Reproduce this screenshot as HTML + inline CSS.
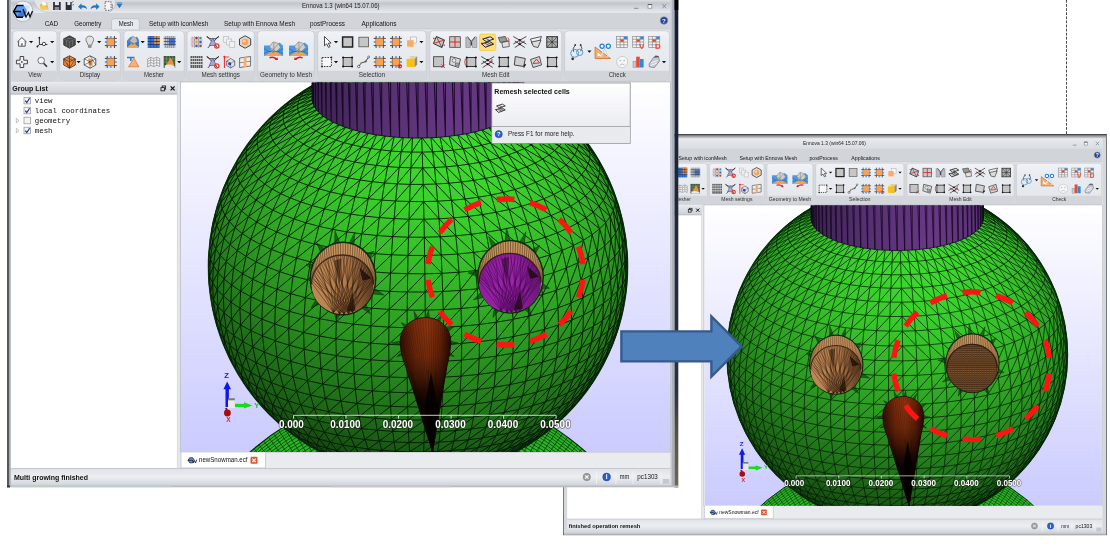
<!DOCTYPE html><html><head><meta charset="utf-8"><title>Ennova remesh</title><style>html,body{margin:0;padding:0;background:#fff}body{width:1110px;height:546px;overflow:hidden;position:relative;font-family:"Liberation Sans",sans-serif}svg{display:block;position:absolute;left:0;top:0;will-change:transform;font-family:"Liberation Sans",sans-serif}</style></head><body><svg width="1110" height="546" viewBox="0 0 1110 546"><defs><linearGradient id="gbg" x1="0" y1="0" x2="0" y2="1"><stop offset="0" stop-color="#ffffff"/><stop offset="1" stop-color="#cbcbff"/></linearGradient><linearGradient id="gsph" gradientUnits="userSpaceOnUse" x1="372.1" y1="471.5" x2="463.9" y2="61.5"><stop offset="0.0" stop-color="rgb(30,105,23)"/><stop offset="0.1" stop-color="rgb(35,122,26)"/><stop offset="0.2" stop-color="rgb(39,138,30)"/><stop offset="0.3" stop-color="rgb(44,155,33)"/><stop offset="0.4" stop-color="rgb(49,171,37)"/><stop offset="0.5" stop-color="rgb(54,188,40)"/><stop offset="0.6" stop-color="rgb(58,205,44)"/><stop offset="0.7" stop-color="rgb(63,221,48)"/><stop offset="0.8" stop-color="rgb(68,238,51)"/><stop offset="0.9" stop-color="rgb(73,254,55)"/><stop offset="1.0" stop-color="rgb(73,255,55)"/></linearGradient><radialGradient id="gsph2" gradientUnits="userSpaceOnUse" cx="418.0" cy="266.5" r="210.0"><stop offset="0" stop-color="#000" stop-opacity="0.000"/><stop offset="0.3" stop-color="#000" stop-opacity="0.020"/><stop offset="0.5" stop-color="#000" stop-opacity="0.059"/><stop offset="0.7" stop-color="#000" stop-opacity="0.126"/><stop offset="0.8" stop-color="#000" stop-opacity="0.176"/><stop offset="0.9" stop-color="#000" stop-opacity="0.248"/><stop offset="0.95" stop-color="#000" stop-opacity="0.303"/><stop offset="0.98" stop-color="#000" stop-opacity="0.352"/><stop offset="1" stop-color="#000" stop-opacity="0.440"/></radialGradient><linearGradient id="gcyl" x1="0" y1="0" x2="1" y2="0"><stop offset="0" stop-color="#3a2150"/><stop offset="0.3" stop-color="#553070"/><stop offset="0.7" stop-color="#683885"/><stop offset="1" stop-color="#5a3274"/></linearGradient><linearGradient id="gband" gradientUnits="userSpaceOnUse" x1="0" y1="0" x2="0" y2="487"><stop offset="0" stop-color="#141c2e"/><stop offset="0.8" stop-color="#2a3040"/><stop offset="0.9" stop-color="#5a5448"/><stop offset="1" stop-color="#6e6656"/></linearGradient><linearGradient id="gtitle" x1="0" y1="0" x2="0" y2="1"><stop offset="0" stop-color="#dfe2e6"/><stop offset="0.28" stop-color="#c3c6cb"/><stop offset="0.6" stop-color="#d4d7db"/><stop offset="1" stop-color="#e8ebef"/></linearGradient><linearGradient id="gtitle2" x1="0" y1="0" x2="0" y2="1"><stop offset="0" stop-color="#e9ebee"/><stop offset="1" stop-color="#d9dce0"/></linearGradient><linearGradient id="gtop2" x1="0" y1="0" x2="0" y2="1"><stop offset="0" stop-color="#2a2a2a"/><stop offset="0.35" stop-color="#8a8c90"/><stop offset="1" stop-color="#d8dade"/></linearGradient><linearGradient id="gtip" x1="0" y1="0" x2="0" y2="1"><stop offset="0" stop-color="#ffffff"/><stop offset="1" stop-color="#e4e5ec"/></linearGradient><linearGradient id="ggrp" x1="0" y1="0" x2="0" y2="1"><stop offset="0" stop-color="#f1f3f7"/><stop offset="0.25" stop-color="#e9ecf1"/><stop offset="1" stop-color="#e3e6eb"/></linearGradient><linearGradient id="ghdr" x1="0" y1="0" x2="0" y2="1"><stop offset="0" stop-color="#e6e9ee"/><stop offset="1" stop-color="#cdd1d7"/></linearGradient><linearGradient id="gstat" x1="0" y1="0" x2="0" y2="1"><stop offset="0" stop-color="#dfe2e7"/><stop offset="0.5" stop-color="#eceef2"/><stop offset="1" stop-color="#d0d3d9"/></linearGradient><linearGradient id="gnose" x1="0" y1="0" x2="1" y2="0"><stop offset="0" stop-color="#3a1204"/><stop offset="0.3" stop-color="#7a2c0c"/><stop offset="0.55" stop-color="#8a3510"/><stop offset="0.8" stop-color="#6a2408"/><stop offset="1" stop-color="#2a0c02"/></linearGradient><linearGradient id="gnose2" gradientUnits="userSpaceOnUse" x1="0" y1="325" x2="0" y2="452"><stop offset="0" stop-color="#000" stop-opacity="0"/><stop offset="0.25" stop-color="#000" stop-opacity="0.15"/><stop offset="0.4" stop-color="#000" stop-opacity="0.42"/><stop offset="0.52" stop-color="#000" stop-opacity="0.72"/><stop offset="0.62" stop-color="#000" stop-opacity="0.9"/><stop offset="1" stop-color="#000" stop-opacity="0.97"/></linearGradient><linearGradient id="geye" x1="0" y1="0" x2="1" y2="0"><stop offset="0" stop-color="#c08a58"/><stop offset="0.55" stop-color="#b07a4a"/><stop offset="1" stop-color="#5a381e"/></linearGradient><linearGradient id="geyep" x1="0" y1="0" x2="1" y2="0"><stop offset="0" stop-color="#8f1e9c"/><stop offset="0.5" stop-color="#a022b0"/><stop offset="1" stop-color="#6a1676"/></linearGradient><clipPath id="cvp"><rect x="181" y="82.5" width="489" height="369.5"/></clipPath><clipPath id="csph"><circle cx="418.0" cy="266.5" r="210.0"/></clipPath><path id="mesh" d="M416.1 58.1L416.7 61.1L417.4 65.7L418 71.8M411.4 58.2L413.6 61.2L415.8 65.7L418 71.8M406.7 58.5L410.4 61.4L414.2 65.8L418 71.8M397 57.8L402.1 59L407.3 61.7L412.6 66L418 71.8M391.1 58.6L397.6 59.5L404.3 62.1L411.1 66.2L418 71.8M377.7 60.4L385.4 59.6L393.3 60.3L401.4 62.6L409.7 66.4L418 71.8M371 61.8L379.9 60.7L389.2 61.2L398.7 63.2L408.3 66.7L418 71.8M364.6 63.5L374.8 62L385.3 62.2L396.1 63.8L407 67.1L418 71.8M358.6 65.3L369.9 63.5L381.6 63.3L393.6 64.6L405.8 67.4L418 71.8M341.2 71.1L353.1 67.4L365.5 65.2L378.2 64.5L391.3 65.4L404.6 67.9L418 71.8M335.3 73.7L348.1 69.6L361.4 67L375.2 65.9L389.3 66.3L403.6 68.3L418 71.8M317 82.4L329.9 76.5L343.6 71.9L357.8 68.9L372.4 67.3L387.4 67.3L402.7 68.8L418 71.8M298.8 93.6L311.6 85.8L325.3 79.4L339.6 74.4L354.6 70.9L370 68.9L385.8 68.3L401.8 69.3L418 71.8M281.3 107.1L293.7 97.6L307.1 89.4L321.3 82.5L336.3 77L351.9 73L368 70.5L384.4 69.4L401.2 69.9L418 71.8M265 122.7L276.8 111.6L289.6 101.7L303.4 93.1L318.1 85.7L333.6 79.8L349.7 75.2L366.3 72.1L383.3 70.5L400.6 70.4L418 71.8M240.8 153.8L250.4 140.3L261.3 127.8L273.3 116.3L286.5 106L300.6 96.9L315.7 89L331.5 82.6L348 77.5L365 73.8L382.5 71.7L400.2 71L418 71.8M222.6 189.6L229.5 174.3L237.9 159.7L247.7 145.9L258.7 133L271 121.1L284.3 110.3L298.7 100.7L314 92.4L330.1 85.4L346.9 79.8L364.2 75.6L381.9 72.8L399.9 71.6L418 71.8M211.5 228.6L215.4 212.1L220.9 196L227.9 180.5L236.4 165.6L246.2 151.4L257.4 138.2L269.7 125.9L283.2 114.7L297.7 104.6L313.1 95.8L329.4 88.3L346.3 82.1L363.7 77.4L381.6 74L399.7 72.2L418 71.8M208.9 286.2L208.1 269.2L208.9 252.3L211.3 235.4L215.3 218.8L220.8 202.5L227.8 186.7L236.2 171.5L246.1 157.1L257.2 143.4L269.6 130.8L283.1 119.1L297.6 108.6L313.1 99.3L329.3 91.2L346.2 84.5L363.7 79.1L381.6 75.2L399.7 72.8L418 71.8M216.7 326.2L212.7 309.8L210.4 293L209.6 276.1L210.4 259.1L212.7 242.1L216.7 225.4L222.1 208.9L229.1 192.9L237.5 177.4L247.3 162.7L258.3 148.7L270.6 135.6L284 123.5L298.4 112.5L313.8 102.7L329.9 94.1L346.7 86.8L364.1 80.9L381.8 76.4L399.8 73.4L418 71.8M231.8 363.6L225 348.5L219.6 332.7L215.7 316.4L213.4 299.8L212.6 282.9L213.4 265.8L215.7 248.8L219.6 231.9L225 215.3L231.8 199L240.1 183.3L249.7 168.2L260.6 153.9L272.8 140.4L286 127.9L300.2 116.4L315.3 106.1L331.2 96.9L347.7 89.1L364.8 82.7L382.3 77.6L400.1 74L418 71.8M253.5 397L244.1 383.8L236 369.6L229.3 354.7L224 339.1L220.2 323L217.9 306.4L217.2 289.5L217.9 272.4L220.2 255.3L224 238.3L229.3 221.5L236 205.1L244.1 189.1L253.5 173.7L264.2 159L276 145.1L288.9 132.1L302.8 120.2L317.6 109.4L333.1 99.8L349.3 91.4L366 84.4L383.1 78.7L400.5 74.5L418 71.8M268.8 414.2L258.5 402.3L249.4 389.4L241.5 375.5L235 360.8L229.9 345.4L226.2 329.3L224 312.8L223.3 296L224 278.9L226.2 261.7L229.9 244.6L235 227.6L241.5 210.9L249.4 194.7L258.5 179L268.8 163.9L280.3 149.7L292.8 136.3L306.3 123.9L320.6 112.6L335.7 102.5L351.4 93.6L367.6 86.1L384.2 79.9L401 75.1L418 71.8M285.7 429.4L274.7 419L264.7 407.4L256 394.8L248.4 381.2L242.2 366.7L237.3 351.4L233.7 335.5L231.6 319L230.9 302.2L231.6 285.1L233.7 267.9L237.3 250.6L242.2 233.5L248.4 216.6L256 200.1L264.7 184.1L274.7 168.7L285.7 154.1L297.7 140.3L310.7 127.5L324.4 115.7L338.9 105.1L354 95.7L369.6 87.7L385.5 81L401.7 75.6L418 71.8M303.5 442.5L292.1 433.7L281.6 423.6L272.1 412.3L263.8 400L256.6 386.6L250.7 372.3L246 357.2L242.6 341.4L240.6 325L239.9 308.2L240.6 291.1L242.6 273.7L246 256.4L250.7 239.1L256.6 222L263.8 205.2L272.1 189L281.6 173.3L292.1 158.3L303.5 144.1L315.9 130.9L329 118.7L342.7 107.7L357.1 97.8L371.9 89.2L387.1 82L402.5 76.2L418 71.8M321.8 453.2L310.2 446.1L299.4 437.7L289.5 427.9L280.6 417L272.8 404.9L266 391.7L260.4 377.6L256 362.6L252.8 346.9L250.9 330.6L250.3 313.8L250.9 296.7L252.8 279.3L256 261.8L260.4 244.4L266 227.1L272.8 210.1L280.6 193.6L289.5 177.6L299.4 162.3L310.2 147.8L321.8 134.2L334.1 121.5L347.1 110L360.6 99.7L374.6 90.7L388.9 83L403.4 76.7L418 71.8M328.5 456.2L317.7 449.5L307.6 441.4L298.5 432L290.2 421.3L282.8 409.4L276.6 396.5L271.4 382.6L267.3 367.7L264.3 352.1L262.5 335.9L261.9 319.1L262.5 302L264.3 284.5L267.3 267L271.4 249.4L276.6 231.9L282.8 214.7L290.2 197.9L298.5 181.7L307.6 166L317.7 151.2L328.5 137.2L340 124.2L352 112.3L364.6 101.5L377.6 92L390.9 83.9L404.4 77.1L418 71.8M346.4 463.9L335.9 459L325.9 452.6L316.7 444.9L308.3 435.7L300.7 425.3L294 413.7L288.2 400.9L283.4 387.2L279.7 372.5L277 357L275.3 340.8L274.8 324L275.3 306.8L277 289.3L279.7 271.7L283.4 254L288.2 236.4L294 219L300.7 201.9L308.3 185.4L316.7 169.5L325.9 154.3L335.9 140L346.4 126.6L357.5 114.3L369 103.2L380.9 93.3L393.1 84.7L405.5 77.5L418 71.8M353.4 466.1L343.8 461.6L334.9 455.5L326.6 448L319 439.1L312.1 429L306 417.5L300.8 405L296.5 391.3L293.1 376.8L290.7 361.4L289.2 345.2L288.7 328.5L289.2 311.3L290.7 293.7L293.1 276L296.5 258.2L300.8 240.4L306 222.8L312.1 205.6L319 188.8L326.6 172.7L334.9 157.2L343.8 142.6L353.4 128.9L363.4 116.2L373.8 104.7L384.5 94.5L395.5 85.5L406.7 77.9L418 71.8M360.8 468.1L352.4 463.8L344.5 458.1L337.1 450.8L330.4 442.2L324.3 432.2L318.9 421L314.3 408.6L310.5 395.1L307.5 380.6L305.4 365.3L304.1 349.2L303.6 332.5L304.1 315.3L305.4 297.7L307.5 279.8L310.5 261.9L314.3 244L318.9 226.3L324.3 208.9L330.4 191.9L337.1 175.5L344.5 159.8L352.4 144.8L360.8 130.9L369.7 117.9L378.9 106.1L388.4 95.5L398.1 86.2L408 78.3L418 71.8M376.3 472.3L368.7 469.9L361.5 465.8L354.6 460.3L348.3 453.3L342.5 444.9L337.2 435.1L332.6 424L328.6 411.7L325.4 398.4L322.8 384L320.9 368.7L319.8 352.7L319.4 336L319.8 318.7L320.9 301.1L322.8 283.2L325.4 265.2L328.6 247.2L332.6 229.3L337.2 211.7L342.5 194.6L348.3 177.9L354.6 162L361.5 146.8L368.7 132.6L376.3 119.4L384.3 107.3L392.5 96.4L400.9 86.8L409.4 78.6L418 71.8M383.3 473.6L377 471.3L370.9 467.5L365.3 462.2L360 455.4L355.1 447.1L350.8 437.5L346.9 426.6L343.6 414.4L340.9 401.1L338.7 386.8L337.2 371.6L336.3 355.6L335.9 338.9L336.3 321.7L337.2 304L338.7 286.1L340.9 268L343.6 249.8L346.9 231.9L350.8 214.1L355.1 196.8L360 180L365.3 163.9L370.9 148.5L377 134.1L383.3 120.6L389.9 108.3L396.8 97.2L403.8 87.3L410.8 78.8L418 71.8M390.6 474.6L385.6 472.5L380.8 468.9L376.3 463.7L372.1 457.1L368.3 449L364.8 439.5L361.8 428.6L359.2 416.6L357 403.4L355.3 389.2L354.1 374L353.4 358L353.1 341.3L353.4 324.1L354.1 306.4L355.3 288.4L357 270.2L359.2 252L361.8 233.9L364.8 216.1L368.3 198.7L372.1 181.7L376.3 165.4L380.8 149.9L385.6 135.3L390.6 121.7L395.8 109.1L401.2 97.8L406.7 87.7L412.3 79.1L418 71.8M398 475.4L394.4 473.4L390.9 470L387.6 464.9L384.6 458.4L381.8 450.4L379.3 441L377.1 430.2L375.2 418.3L373.6 405.1L372.4 390.9L371.5 375.8L370.9 359.8L370.8 343.2L370.9 325.9L371.5 308.2L372.4 290.1L373.6 271.9L375.2 253.7L377.1 235.5L379.3 217.6L381.8 200.1L384.6 183L387.6 166.6L390.9 151L394.4 136.2L398 122.4L401.8 109.7L405.8 98.3L409.8 88.1L413.9 79.2L418 71.8M405.6 475.9L403.4 474.1L401.2 470.7L399.2 465.7L397.3 459.3L395.6 451.3L394.1 442L392.7 431.3L391.5 419.4L390.5 406.3L389.8 392.1L389.2 377L388.9 361.1L388.8 344.4L388.9 327.1L389.2 309.4L389.8 291.4L390.5 273.1L391.5 254.8L392.7 236.6L394.1 218.6L395.6 201L397.3 183.9L399.2 167.4L401.2 151.7L403.4 136.8L405.6 123L408 110.2L410.4 98.6L412.9 88.3L415.5 79.3L418 71.8M413.4 476.2L412.5 474.4L411.7 471.1L410.9 466.2L410.2 459.7L409.6 451.8L409 442.5L408.5 431.9L408 420L407.7 406.9L407.4 392.8L407.2 377.7L407.1 361.7L407 345.1L407.1 327.8L407.2 310.1L407.4 292L407.7 273.7L408 255.4L408.5 237.2L409 219.2L409.6 201.5L410.2 184.4L410.9 167.8L411.7 152.1L412.5 137.2L413.4 123.2L414.2 110.4L415.2 98.8L416.1 88.4L417 79.4L418 71.8M421.1 476.2L421.7 474.4L422.2 471.1L422.7 466.2L423.2 459.8L423.6 451.9L424 442.6L424.3 431.9L424.6 420L424.9 407L425.1 392.8L425.2 377.7L425.3 361.8L425.3 345.1L425.3 327.9L425.2 310.1L425.1 292L424.9 273.8L424.6 255.5L424.3 237.2L424 219.2L423.6 201.6L423.2 184.4L422.7 167.9L422.2 152.1L421.7 137.2L421.1 123.3L420.5 110.4L419.9 98.8L419.3 88.4L418.6 79.4L418 71.8M428.8 476L430.8 474.2L432.7 470.8L434.5 465.8L436.1 459.4L437.6 451.5L439 442.1L440.2 431.5L441.2 419.6L442 406.5L442.7 392.3L443.2 377.2L443.5 361.3L443.6 344.6L443.5 327.3L443.2 309.6L442.7 291.5L442 273.3L441.2 255L440.2 236.8L439 218.8L437.6 201.2L436.1 184L434.5 167.5L432.7 151.8L430.8 136.9L428.8 123L426.8 110.2L424.6 98.6L422.4 88.3L420.2 79.3L418 71.8M436.5 475.5L439.8 473.6L443 470.1L446.1 465.1L448.9 458.6L451.4 450.6L453.8 441.2L455.8 430.5L457.6 418.5L459 405.4L460.2 391.2L461 376.1L461.5 360.1L461.7 343.4L461.5 326.2L461 308.5L460.2 290.4L459 272.2L457.6 254L455.8 235.8L453.8 217.9L451.4 200.3L448.9 183.2L446.1 166.8L443 151.1L439.8 136.4L436.5 122.6L432.9 109.9L429.3 98.3L425.6 88.1L421.8 79.2L418 71.8M443.9 474.8L448.7 472.7L453.2 469.1L457.5 464L461.4 457.4L465 449.3L468.3 439.8L471.2 429L473.6 417L475.7 403.8L477.3 389.6L478.5 374.4L479.2 358.4L479.4 341.7L479.2 324.5L478.5 306.8L477.3 288.8L475.7 270.6L473.6 252.4L471.2 234.3L468.3 216.4L465 199L461.4 182L457.5 165.7L453.2 150.2L448.7 135.5L443.9 121.8L439 109.3L433.9 97.9L428.7 87.8L423.4 79.1L418 71.8M451.2 473.8L457.3 471.6L463.1 467.8L468.6 462.5L473.6 455.8L478.3 447.5L482.4 437.9L486.1 427L489.3 414.9L491.9 401.6L494 387.3L495.5 372.1L496.4 356.1L496.7 339.4L496.4 322.2L495.5 304.5L494 286.6L491.9 268.4L489.3 250.3L486.1 232.3L482.4 214.6L478.3 197.2L473.6 180.4L468.6 164.2L463.1 148.8L457.3 134.3L451.2 120.9L444.9 108.5L438.4 97.3L431.7 87.4L424.9 78.9L418 71.8M458.3 472.6L465.7 470.2L472.7 466.2L479.3 460.7L485.4 453.7L491 445.4L496.1 435.6L500.6 424.6L504.4 412.3L507.6 399L510.1 384.6L511.9 369.3L513 353.3L513.3 336.6L513 319.4L511.9 301.7L510.1 283.8L507.6 265.8L504.4 247.7L500.6 229.8L496.1 212.2L491 195L485.4 178.4L479.3 162.4L472.7 147.2L465.7 132.9L458.3 119.7L450.6 107.5L442.7 96.6L434.6 86.9L426.3 78.6L418 71.8M465 471.2L473.6 468.5L481.8 464.3L489.5 458.5L496.7 451.4L503.2 442.8L509.2 432.8L514.4 421.6L518.9 409.3L522.6 395.8L525.5 381.3L527.6 366L528.9 349.9L529.3 333.2L528.9 316L527.6 298.4L525.5 280.5L522.6 262.6L518.9 244.7L514.4 226.9L509.2 209.5L503.2 192.4L496.7 176L489.5 160.2L481.8 145.3L473.6 131.2L465 118.2L456.1 106.4L446.8 95.7L437.3 86.3L427.7 78.3L418 71.8M481.2 466.5L490.5 462L499.2 456L507.4 448.6L514.8 439.8L521.5 429.6L527.4 418.3L532.5 405.7L536.8 392.1L540.1 377.6L542.5 362.2L543.9 346.1L544.4 329.3L543.9 312.1L542.5 294.6L540.1 276.8L536.8 258.9L532.5 241.2L527.4 223.6L521.5 206.3L514.8 189.5L507.4 173.2L499.2 157.7L490.5 143L481.2 129.3L471.4 116.6L461.2 105L450.7 94.7L439.9 85.7L429 78L418 71.8M488.3 464.4L498.6 459.5L508.3 453.2L517.4 445.5L525.6 436.4L533.1 426.1L539.7 414.5L545.4 401.8L550 388L553.7 373.4L556.4 357.9L558 341.7L558.5 325L558 307.8L556.4 290.3L553.7 272.6L550 254.8L545.4 237.2L539.7 219.8L533.1 202.7L525.6 186.1L517.4 170.2L508.3 154.9L498.6 140.5L488.3 127.1L477.4 114.7L466.1 103.5L454.4 93.6L442.4 84.9L430.2 77.6L418 71.8M494.8 461.9L506.1 456.8L516.7 450.1L526.6 442.1L535.7 432.8L543.8 422.1L551 410.3L557.2 397.4L562.3 383.5L566.4 368.7L569.3 353.1L571 336.9L571.6 320.2L571 303L569.3 285.5L566.4 267.9L562.3 250.3L557.2 232.8L551 215.6L543.8 198.8L535.7 182.4L526.6 166.8L516.7 151.8L506.1 137.8L494.8 124.7L482.9 112.7L470.5 101.9L457.8 92.3L444.7 84.1L431.4 77.2L418 71.8M512.9 453.8L524.4 446.8L535 438.4L544.8 428.8L553.6 417.9L561.3 405.8L568 392.7L573.5 378.6L577.8 363.7L581 348L582.9 331.7L583.5 314.9L582.9 297.8L581 280.4L577.8 262.9L573.5 245.4L568 228.1L561.3 211.1L553.6 194.5L544.8 178.4L535 163.1L524.4 148.5L512.9 134.8L500.7 122.1L487.9 110.5L474.6 100.1L460.8 91L446.7 83.2L432.4 76.8L418 71.8M531.2 443.2L542.5 434.5L552.9 424.5L562.3 413.3L570.5 401L577.6 387.6L583.5 373.4L588.1 358.3L591.4 342.5L593.5 326.2L594.1 309.3L593.5 292.2L591.4 274.9L588.1 257.5L583.5 240.2L577.6 223L570.5 206.3L562.3 189.9L552.9 174.2L542.5 159.1L531.2 144.9L519 131.6L506.1 119.3L492.4 108.1L478.2 98.2L463.6 89.5L448.6 82.2L433.3 76.3L418 71.8M537.2 439.4L549.1 430.3L560 419.9L569.9 408.4L578.6 395.8L586 382.3L592.2 367.8L597.1 352.6L600.6 336.7L602.7 320.3L603.4 303.4L602.7 286.3L600.6 269.1L597.1 251.8L592.2 234.6L586 217.7L578.6 201.1L569.9 185.1L560 169.6L549.1 154.9L537.2 141.1L524.4 128.2L510.7 116.3L496.4 105.6L481.4 96.2L466 88L450.2 81.2L434.2 75.8L418 71.8M554.7 425.9L566.1 415.2L576.3 403.4L585.4 390.5L593.2 376.6L599.6 362L604.7 346.6L608.4 330.6L610.6 314.1L611.3 297.2L610.6 280.2L608.4 263L604.7 245.8L599.6 228.8L593.2 212.1L585.4 195.8L576.3 180L566.1 164.9L554.7 150.6L542.3 137.1L528.9 124.6L514.7 113.2L499.7 103L484.1 94L468 86.4L451.6 80.1L434.8 75.2L418 71.8M581.6 398.1L591 384.9L599 370.8L605.7 355.9L610.9 340.4L614.7 324.3L617 307.7L617.7 290.8L617 273.7L614.7 256.6L610.9 239.6L605.7 222.7L599 206.2L591 190.2L581.6 174.7L571 160L559.2 146L546.4 133L532.6 120.9L517.9 110L502.4 100.3L486.3 91.8L469.7 84.7L452.7 79L435.4 74.7L418 71.8M595.2 379.2L603.4 364.8L610.3 349.7L615.6 334L619.5 317.7L621.8 301.1L622.6 284.2L621.8 267.2L619.5 250.1L615.6 233.2L610.3 216.5L603.4 200.3L595.2 184.5L585.6 169.3L574.7 154.9L562.7 141.3L549.5 128.7L535.4 117.2L520.3 106.7L504.5 97.5L488 89.6L471 83L453.5 77.8L435.8 74.1L418 71.8M613.4 343.4L618.9 327.5L622.8 311.1L625.2 294.4L626 277.4L625.2 260.4L622.8 243.5L618.9 226.7L613.4 210.2L606.5 194.1L598.1 178.6L588.3 163.8L577.3 149.7L565 136.6L551.7 124.4L537.3 113.3L522 103.4L505.9 94.7L489.1 87.3L471.8 81.3L454.1 76.7L436.1 73.5L418 71.8M626.9 287.6L627.7 270.6L626.9 253.6L624.5 236.7L620.6 220.1L615.1 203.8L608.1 187.9L599.6 172.7L589.8 158.2L578.6 144.5L566.3 131.7L552.8 120L538.3 109.4L522.9 99.9L506.6 91.8L489.7 84.9L472.3 79.5L454.4 75.5L436.3 72.9L418 71.8M627.1 246.8L624.7 230L620.7 213.5L615.2 197.3L608.2 181.7L599.8 166.8L589.9 152.6L578.8 139.2L566.4 126.9L552.9 115.6L538.4 105.4L522.9 96.5L506.7 88.9L489.8 82.6L472.3 77.7L454.4 74.3L436.3 72.3L418 71.8M613.9 190.9L606.9 175.5L598.5 160.8L588.7 147L577.7 134L565.4 122L552 111.2L537.6 101.5L522.2 93.1L506.1 86L489.3 80.3L471.9 75.9L454.2 73.1L436.2 71.7L418 71.8M595.9 155L586.3 141.4L575.4 128.8L563.2 117.3L550 106.8L535.8 97.6L520.7 89.7L504.8 83.1L488.3 77.9L471.2 74.2L453.7 71.9L435.9 71.1L418 71.8M582.5 136L571.8 123.7L560 112.6L547.1 102.6L533.2 93.8L518.4 86.4L502.9 80.3L486.7 75.7L470 72.5L452.9 70.8L435.5 70.5L418 71.8M555.7 108L543.2 98.4L529.7 90.1L515.4 83.1L500.3 77.6L484.6 73.5L468.4 70.8L451.8 69.6L435 70L418 71.8M538.3 94.4L525.3 86.5L511.6 80L497.1 74.9L482 71.3L466.4 69.2L450.5 68.5L434.3 69.4L418 71.8M520.1 83.1L507 77L493.3 72.4L478.9 69.3L464.1 67.6L448.9 67.5L433.5 68.9L418 71.8M501.9 74.2L488.9 70L475.4 67.3L461.4 66.2L447.1 66.5L432.6 68.4L418 71.8M496 71.6L484 67.8L471.4 65.5L458.4 64.8L445.1 65.6L431.6 67.9L418 71.8M478.5 65.7L467 63.9L455.1 63.5L442.9 64.8L430.5 67.5L418 71.8M472.6 63.8L462.2 62.3L451.5 62.4L440.5 64L429.3 67.1L418 71.8M466.3 62.2L457.1 61L447.6 61.4L437.9 63.3L428 66.8L418 71.8M459.7 60.7L451.7 59.8L443.5 60.4L435.1 62.7L426.6 66.5L418 71.8M446.1 58.8L439.2 59.7L432.2 62.2L425.2 66.2L418 71.8M440.2 57.9L434.8 59.1L429.3 61.8L423.7 66L418 71.8M430.2 58.6L426.2 61.4L422.1 65.9L418 71.8M425.6 58.3L423.1 61.2L420.5 65.7L418 71.8M420.8 58.1L419.9 61.1L419 65.7L418 71.8M376.3 472.3L383.3 473.6L390.6 474.6L398 475.4L405.6 475.9L413.4 476.2L421.1 476.2L428.8 476L436.5 475.5L443.9 474.8L451.2 473.8L458.3 472.6L465 471.2M346.4 463.9L353.4 466.1L360.8 468.1L368.7 469.9L377 471.3L385.6 472.5L394.4 473.4L403.4 474.1L412.5 474.4L421.7 474.4L430.8 474.2L439.8 473.6L448.7 472.7L457.3 471.6L465.7 470.2L473.6 468.5L481.2 466.5L488.3 464.4L494.8 461.9M321.8 453.2L328.5 456.2L335.9 459L343.8 461.6L352.4 463.8L361.5 465.8L370.9 467.5L380.8 468.9L390.9 470L401.2 470.7L411.7 471.1L422.2 471.1L432.7 470.8L443 470.1L453.2 469.1L463.1 467.8L472.7 466.2L481.8 464.3L490.5 462L498.6 459.5L506.1 456.8L512.9 453.8M303.5 442.5L310.2 446.1L317.7 449.5L325.9 452.6L334.9 455.5L344.5 458.1L354.6 460.3L365.3 462.2L376.3 463.7L387.6 464.9L399.2 465.7L410.9 466.2L422.7 466.2L434.5 465.8L446.1 465.1L457.5 464L468.6 462.5L479.3 460.7L489.5 458.5L499.2 456L508.3 453.2L516.7 450.1L524.4 446.8L531.2 443.2L537.2 439.4M285.7 429.4L292.1 433.7L299.4 437.7L307.6 441.4L316.7 444.9L326.6 448L337.1 450.8L348.3 453.3L360 455.4L372.1 457.1L384.6 458.4L397.3 459.3L410.2 459.7L423.2 459.8L436.1 459.4L448.9 458.6L461.4 457.4L473.6 455.8L485.4 453.7L496.7 451.4L507.4 448.6L517.4 445.5L526.6 442.1L535 438.4L542.5 434.5L549.1 430.3L554.7 425.9M268.8 414.2L274.7 419L281.6 423.6L289.5 427.9L298.5 432L308.3 435.7L319 439.1L330.4 442.2L342.5 444.9L355.1 447.1L368.3 449L381.8 450.4L395.6 451.3L409.6 451.8L423.6 451.9L437.6 451.5L451.4 450.6L465 449.3L478.3 447.5L491 445.4L503.2 442.8L514.8 439.8L525.6 436.4L535.7 432.8L544.8 428.8L552.9 424.5L560 419.9L566.1 415.2M253.5 397L258.5 402.3L264.7 407.4L272.1 412.3L280.6 417L290.2 421.3L300.7 425.3L312.1 429L324.3 432.2L337.2 435.1L350.8 437.5L364.8 439.5L379.3 441L394.1 442L409 442.5L424 442.6L439 442.1L453.8 441.2L468.3 439.8L482.4 437.9L496.1 435.6L509.2 432.8L521.5 429.6L533.1 426.1L543.8 422.1L553.6 417.9L562.3 413.3L569.9 408.4L576.3 403.4L581.6 398.1M244.1 383.8L249.4 389.4L256 394.8L263.8 400L272.8 404.9L282.8 409.4L294 413.7L306 417.5L318.9 421L332.6 424L346.9 426.6L361.8 428.6L377.1 430.2L392.7 431.3L408.5 431.9L424.3 431.9L440.2 431.5L455.8 430.5L471.2 429L486.1 427L500.6 424.6L514.4 421.6L527.4 418.3L539.7 414.5L551 410.3L561.3 405.8L570.5 401L578.6 395.8L585.4 390.5L591 384.9L595.2 379.2M231.8 363.6L236 369.6L241.5 375.5L248.4 381.2L256.6 386.6L266 391.7L276.6 396.5L288.2 400.9L300.8 405L314.3 408.6L328.6 411.7L343.6 414.4L359.2 416.6L375.2 418.3L391.5 419.4L408 420L424.6 420L441.2 419.6L457.6 418.5L473.6 417L489.3 414.9L504.4 412.3L518.9 409.3L532.5 405.7L545.4 401.8L557.2 397.4L568 392.7L577.6 387.6L586 382.3L593.2 376.6L599 370.8L603.4 364.8M225 348.5L229.3 354.7L235 360.8L242.2 366.7L250.7 372.3L260.4 377.6L271.4 382.6L283.4 387.2L296.5 391.3L310.5 395.1L325.4 398.4L340.9 401.1L357 403.4L373.6 405.1L390.5 406.3L407.7 406.9L424.9 407L442 406.5L459 405.4L475.7 403.8L491.9 401.6L507.6 399L522.6 395.8L536.8 392.1L550 388L562.3 383.5L573.5 378.6L583.5 373.4L592.2 367.8L599.6 362L605.7 355.9L610.3 349.7L613.4 343.4M216.7 326.2L219.6 332.7L224 339.1L229.9 345.4L237.3 351.4L246 357.2L256 362.6L267.3 367.7L279.7 372.5L293.1 376.8L307.5 380.6L322.8 384L338.7 386.8L355.3 389.2L372.4 390.9L389.8 392.1L407.4 392.8L425.1 392.8L442.7 392.3L460.2 391.2L477.3 389.6L494 387.3L510.1 384.6L525.5 381.3L540.1 377.6L553.7 373.4L566.4 368.7L577.8 363.7L588.1 358.3L597.1 352.6L604.7 346.6L610.9 340.4L615.6 334L618.9 327.5M212.7 309.8L215.7 316.4L220.2 323L226.2 329.3L233.7 335.5L242.6 341.4L252.8 346.9L264.3 352.1L277 357L290.7 361.4L305.4 365.3L320.9 368.7L337.2 371.6L354.1 374L371.5 375.8L389.2 377L407.2 377.7L425.2 377.7L443.2 377.2L461 376.1L478.5 374.4L495.5 372.1L511.9 369.3L527.6 366L542.5 362.2L556.4 357.9L569.3 353.1L581 348L591.4 342.5L600.6 336.7L608.4 330.6L614.7 324.3L619.5 317.7L622.8 311.1M208.9 286.2L210.4 293L213.4 299.8L217.9 306.4L224 312.8L231.6 319L240.6 325L250.9 330.6L262.5 335.9L275.3 340.8L289.2 345.2L304.1 349.2L319.8 352.7L336.3 355.6L353.4 358L370.9 359.8L388.9 361.1L407.1 361.7L425.3 361.8L443.5 361.3L461.5 360.1L479.2 358.4L496.4 356.1L513 353.3L528.9 349.9L543.9 346.1L558 341.7L571 336.9L582.9 331.7L593.5 326.2L602.7 320.3L610.6 314.1L617 307.7L621.8 301.1L625.2 294.4L626.9 287.6M208.1 269.2L209.6 276.1L212.6 282.9L217.2 289.5L223.3 296L230.9 302.2L239.9 308.2L250.3 313.8L261.9 319.1L274.8 324L288.7 328.5L303.6 332.5L319.4 336L335.9 338.9L353.1 341.3L370.8 343.2L388.8 344.4L407 345.1L425.3 345.1L443.6 344.6L461.7 343.4L479.4 341.7L496.7 339.4L513.3 336.6L529.3 333.2L544.4 329.3L558.5 325L571.6 320.2L583.5 314.9L594.1 309.3L603.4 303.4L611.3 297.2L617.7 290.8L622.6 284.2L626 277.4L627.7 270.6M208.9 252.3L210.4 259.1L213.4 265.8L217.9 272.4L224 278.9L231.6 285.1L240.6 291.1L250.9 296.7L262.5 302L275.3 306.8L289.2 311.3L304.1 315.3L319.8 318.7L336.3 321.7L353.4 324.1L370.9 325.9L388.9 327.1L407.1 327.8L425.3 327.9L443.5 327.3L461.5 326.2L479.2 324.5L496.4 322.2L513 319.4L528.9 316L543.9 312.1L558 307.8L571 303L582.9 297.8L593.5 292.2L602.7 286.3L610.6 280.2L617 273.7L621.8 267.2L625.2 260.4L626.9 253.6L627.1 246.8M211.5 228.6L211.3 235.4L212.7 242.1L215.7 248.8L220.2 255.3L226.2 261.7L233.7 267.9L242.6 273.7L252.8 279.3L264.3 284.5L277 289.3L290.7 293.7L305.4 297.7L320.9 301.1L337.2 304L354.1 306.4L371.5 308.2L389.2 309.4L407.2 310.1L425.2 310.1L443.2 309.6L461 308.5L478.5 306.8L495.5 304.5L511.9 301.7L527.6 298.4L542.5 294.6L556.4 290.3L569.3 285.5L581 280.4L591.4 274.9L600.6 269.1L608.4 263L614.7 256.6L619.5 250.1L622.8 243.5L624.5 236.7L624.7 230M215.4 212.1L215.3 218.8L216.7 225.4L219.6 231.9L224 238.3L229.9 244.6L237.3 250.6L246 256.4L256 261.8L267.3 267L279.7 271.7L293.1 276L307.5 279.8L322.8 283.2L338.7 286.1L355.3 288.4L372.4 290.1L389.8 291.4L407.4 292L425.1 292L442.7 291.5L460.2 290.4L477.3 288.8L494 286.6L510.1 283.8L525.5 280.5L540.1 276.8L553.7 272.6L566.4 267.9L577.8 262.9L588.1 257.5L597.1 251.8L604.7 245.8L610.9 239.6L615.6 233.2L618.9 226.7L620.6 220.1L620.7 213.5M222.6 189.6L220.9 196L220.8 202.5L222.1 208.9L225 215.3L229.3 221.5L235 227.6L242.2 233.5L250.7 239.1L260.4 244.4L271.4 249.4L283.4 254L296.5 258.2L310.5 261.9L325.4 265.2L340.9 268L357 270.2L373.6 271.9L390.5 273.1L407.7 273.7L424.9 273.8L442 273.3L459 272.2L475.7 270.6L491.9 268.4L507.6 265.8L522.6 262.6L536.8 258.9L550 254.8L562.3 250.3L573.5 245.4L583.5 240.2L592.2 234.6L599.6 228.8L605.7 222.7L610.3 216.5L613.4 210.2L615.1 203.8L615.2 197.3L613.9 190.9M229.5 174.3L227.9 180.5L227.8 186.7L229.1 192.9L231.8 199L236 205.1L241.5 210.9L248.4 216.6L256.6 222L266 227.1L276.6 231.9L288.2 236.4L300.8 240.4L314.3 244L328.6 247.2L343.6 249.8L359.2 252L375.2 253.7L391.5 254.8L408 255.4L424.6 255.5L441.2 255L457.6 254L473.6 252.4L489.3 250.3L504.4 247.7L518.9 244.7L532.5 241.2L545.4 237.2L557.2 232.8L568 228.1L577.6 223L586 217.7L593.2 212.1L599 206.2L603.4 200.3L606.5 194.1L608.1 187.9L608.2 181.7L606.9 175.5M240.8 153.8L237.9 159.7L236.4 165.6L236.2 171.5L237.5 177.4L240.1 183.3L244.1 189.1L249.4 194.7L256 200.1L263.8 205.2L272.8 210.1L282.8 214.7L294 219L306 222.8L318.9 226.3L332.6 229.3L346.9 231.9L361.8 233.9L377.1 235.5L392.7 236.6L408.5 237.2L424.3 237.2L440.2 236.8L455.8 235.8L471.2 234.3L486.1 232.3L500.6 229.8L514.4 226.9L527.4 223.6L539.7 219.8L551 215.6L561.3 211.1L570.5 206.3L578.6 201.1L585.4 195.8L591 190.2L595.2 184.5L598.1 178.6L599.6 172.7L599.8 166.8L598.5 160.8L595.9 155M250.4 140.3L247.7 145.9L246.2 151.4L246.1 157.1L247.3 162.7L249.7 168.2L253.5 173.7L258.5 179L264.7 184.1L272.1 189L280.6 193.6L290.2 197.9L300.7 201.9L312.1 205.6L324.3 208.9L337.2 211.7L350.8 214.1L364.8 216.1L379.3 217.6L394.1 218.6L409 219.2L424 219.2L439 218.8L453.8 217.9L468.3 216.4L482.4 214.6L496.1 212.2L509.2 209.5L521.5 206.3L533.1 202.7L543.8 198.8L553.6 194.5L562.3 189.9L569.9 185.1L576.3 180L581.6 174.7L585.6 169.3L588.3 163.8L589.8 158.2L589.9 152.6L588.7 147L586.3 141.4L582.5 136M265 122.7L261.3 127.8L258.7 133L257.4 138.2L257.2 143.4L258.3 148.7L260.6 153.9L264.2 159L268.8 163.9L274.7 168.7L281.6 173.3L289.5 177.6L298.5 181.7L308.3 185.4L319 188.8L330.4 191.9L342.5 194.6L355.1 196.8L368.3 198.7L381.8 200.1L395.6 201L409.6 201.5L423.6 201.6L437.6 201.2L451.4 200.3L465 199L478.3 197.2L491 195L503.2 192.4L514.8 189.5L525.6 186.1L535.7 182.4L544.8 178.4L552.9 174.2L560 169.6L566.1 164.9L571 160L574.7 154.9L577.3 149.7L578.6 144.5L578.8 139.2L577.7 134L575.4 128.8L571.8 123.7M281.3 107.1L276.8 111.6L273.3 116.3L271 121.1L269.7 125.9L269.6 130.8L270.6 135.6L272.8 140.4L276 145.1L280.3 149.7L285.7 154.1L292.1 158.3L299.4 162.3L307.6 166L316.7 169.5L326.6 172.7L337.1 175.5L348.3 177.9L360 180L372.1 181.7L384.6 183L397.3 183.9L410.2 184.4L423.2 184.4L436.1 184L448.9 183.2L461.4 182L473.6 180.4L485.4 178.4L496.7 176L507.4 173.2L517.4 170.2L526.6 166.8L535 163.1L542.5 159.1L549.1 154.9L554.7 150.6L559.2 146L562.7 141.3L565 136.6L566.3 131.7L566.4 126.9L565.4 122L563.2 117.3L560 112.6L555.7 108M298.8 93.6L293.7 97.6L289.6 101.7L286.5 106L284.3 110.3L283.2 114.7L283.1 119.1L284 123.5L286 127.9L288.9 132.1L292.8 136.3L297.7 140.3L303.5 144.1L310.2 147.8L317.7 151.2L325.9 154.3L334.9 157.2L344.5 159.8L354.6 162L365.3 163.9L376.3 165.4L387.6 166.6L399.2 167.4L410.9 167.8L422.7 167.9L434.5 167.5L446.1 166.8L457.5 165.7L468.6 164.2L479.3 162.4L489.5 160.2L499.2 157.7L508.3 154.9L516.7 151.8L524.4 148.5L531.2 144.9L537.2 141.1L542.3 137.1L546.4 133L549.5 128.7L551.7 124.4L552.8 120L552.9 115.6L552 111.2L550 106.8L547.1 102.6L543.2 98.4L538.3 94.4M317 82.4L311.6 85.8L307.1 89.4L303.4 93.1L300.6 96.9L298.7 100.7L297.7 104.6L297.6 108.6L298.4 112.5L300.2 116.4L302.8 120.2L306.3 123.9L310.7 127.5L315.9 130.9L321.8 134.2L328.5 137.2L335.9 140L343.8 142.6L352.4 144.8L361.5 146.8L370.9 148.5L380.8 149.9L390.9 151L401.2 151.7L411.7 152.1L422.2 152.1L432.7 151.8L443 151.1L453.2 150.2L463.1 148.8L472.7 147.2L481.8 145.3L490.5 143L498.6 140.5L506.1 137.8L512.9 134.8L519 131.6L524.4 128.2L528.9 124.6L532.6 120.9L535.4 117.2L537.3 113.3L538.3 109.4L538.4 105.4L537.6 101.5L535.8 97.6L533.2 93.8L529.7 90.1L525.3 86.5L520.1 83.1M341.2 71.1L335.3 73.7L329.9 76.5L325.3 79.4L321.3 82.5L318.1 85.7L315.7 89L314 92.4L313.1 95.8L313.1 99.3L313.8 102.7L315.3 106.1L317.6 109.4L320.6 112.6L324.4 115.7L329 118.7L334.1 121.5L340 124.2L346.4 126.6L353.4 128.9L360.8 130.9L368.7 132.6L377 134.1L385.6 135.3L394.4 136.2L403.4 136.8L412.5 137.2L421.7 137.2L430.8 136.9L439.8 136.4L448.7 135.5L457.3 134.3L465.7 132.9L473.6 131.2L481.2 129.3L488.3 127.1L494.8 124.7L500.7 122.1L506.1 119.3L510.7 116.3L514.7 113.2L517.9 110L520.3 106.7L522 103.4L522.9 99.9L522.9 96.5L522.2 93.1L520.7 89.7L518.4 86.4L515.4 83.1L511.6 80L507 77L501.9 74.2L496 71.6M377.7 60.4L371 61.8L364.6 63.5L358.6 65.3L353.1 67.4L348.1 69.6L343.6 71.9L339.6 74.4L336.3 77L333.6 79.8L331.5 82.6L330.1 85.4L329.4 88.3L329.3 91.2L329.9 94.1L331.2 96.9L333.1 99.8L335.7 102.5L338.9 105.1L342.7 107.7L347.1 110L352 112.3L357.5 114.3L363.4 116.2L369.7 117.9L376.3 119.4L383.3 120.6L390.6 121.7L398 122.4L405.6 123L413.4 123.2L421.1 123.3L428.8 123L436.5 122.6L443.9 121.8L451.2 120.9L458.3 119.7L465 118.2L471.4 116.6L477.4 114.7L482.9 112.7L487.9 110.5L492.4 108.1L496.4 105.6L499.7 103L502.4 100.3L504.5 97.5L505.9 94.7L506.6 91.8L506.7 88.9L506.1 86L504.8 83.1L502.9 80.3L500.3 77.6L497.1 74.9L493.3 72.4L488.9 70L484 67.8L478.5 65.7L472.6 63.8L466.3 62.2L459.7 60.7M397 57.8L391.1 58.6L385.4 59.6L379.9 60.7L374.8 62L369.9 63.5L365.5 65.2L361.4 67L357.8 68.9L354.6 70.9L351.9 73L349.7 75.2L348 77.5L346.9 79.8L346.3 82.1L346.2 84.5L346.7 86.8L347.7 89.1L349.3 91.4L351.4 93.6L354 95.7L357.1 97.8L360.6 99.7L364.6 101.5L369 103.2L373.8 104.7L378.9 106.1L384.3 107.3L389.9 108.3L395.8 109.1L401.8 109.7L408 110.2L414.2 110.4L420.5 110.4L426.8 110.2L432.9 109.9L439 109.3L444.9 108.5L450.6 107.5L456.1 106.4L461.2 105L466.1 103.5L470.5 101.9L474.6 100.1L478.2 98.2L481.4 96.2L484.1 94L486.3 91.8L488 89.6L489.1 87.3L489.7 84.9L489.8 82.6L489.3 80.3L488.3 77.9L486.7 75.7L484.6 73.5L482 71.3L478.9 69.3L475.4 67.3L471.4 65.5L467 63.9L462.2 62.3L457.1 61L451.7 59.8L446.1 58.8L440.2 57.9M416.1 58.1L411.4 58.2L406.7 58.5L402.1 59L397.6 59.5L393.3 60.3L389.2 61.2L385.3 62.2L381.6 63.3L378.2 64.5L375.2 65.9L372.4 67.3L370 68.9L368 70.5L366.3 72.1L365 73.8L364.2 75.6L363.7 77.4L363.7 79.1L364.1 80.9L364.8 82.7L366 84.4L367.6 86.1L369.6 87.7L371.9 89.2L374.6 90.7L377.6 92L380.9 93.3L384.5 94.5L388.4 95.5L392.5 96.4L396.8 97.2L401.2 97.8L405.8 98.3L410.4 98.6L415.2 98.8L419.9 98.8L424.6 98.6L429.3 98.3L433.9 97.9L438.4 97.3L442.7 96.6L446.8 95.7L450.7 94.7L454.4 93.6L457.8 92.3L460.8 91L463.6 89.5L466 88L468 86.4L469.7 84.7L471 83L471.8 81.3L472.3 79.5L472.3 77.7L471.9 75.9L471.2 74.2L470 72.5L468.4 70.8L466.4 69.2L464.1 67.6L461.4 66.2L458.4 64.8L455.1 63.5L451.5 62.4L447.6 61.4L443.5 60.4L439.2 59.7L434.8 59.1L430.2 58.6L425.6 58.3L420.8 58.1L416.1 58.1M416.7 61.1L413.6 61.2L410.4 61.4L407.3 61.7L404.3 62.1L401.4 62.6L398.7 63.2L396.1 63.8L393.6 64.6L391.3 65.4L389.3 66.3L387.4 67.3L385.8 68.3L384.4 69.4L383.3 70.5L382.5 71.7L381.9 72.8L381.6 74L381.6 75.2L381.8 76.4L382.3 77.6L383.1 78.7L384.2 79.9L385.5 81L387.1 82L388.9 83L390.9 83.9L393.1 84.7L395.5 85.5L398.1 86.2L400.9 86.8L403.8 87.3L406.7 87.7L409.8 88.1L412.9 88.3L416.1 88.4L419.3 88.4L422.4 88.3L425.6 88.1L428.7 87.8L431.7 87.4L434.6 86.9L437.3 86.3L439.9 85.7L442.4 84.9L444.7 84.1L446.7 83.2L448.6 82.2L450.2 81.2L451.6 80.1L452.7 79L453.5 77.8L454.1 76.7L454.4 75.5L454.4 74.3L454.2 73.1L453.7 71.9L452.9 70.8L451.8 69.6L450.5 68.5L448.9 67.5L447.1 66.5L445.1 65.6L442.9 64.8L440.5 64L437.9 63.3L435.1 62.7L432.2 62.2L429.3 61.8L426.2 61.4L423.1 61.2L419.9 61.1L416.7 61.1M417.4 65.7L415.8 65.7L414.2 65.8L412.6 66L411.1 66.2L409.7 66.4L408.3 66.7L407 67.1L405.8 67.4L404.6 67.9L403.6 68.3L402.7 68.8L401.8 69.3L401.2 69.9L400.6 70.4L400.2 71L399.9 71.6L399.7 72.2L399.7 72.8L399.8 73.4L400.1 74L400.5 74.5L401 75.1L401.7 75.6L402.5 76.2L403.4 76.7L404.4 77.1L405.5 77.5L406.7 77.9L408 78.3L409.4 78.6L410.8 78.8L412.3 79.1L413.9 79.2L415.5 79.3L417 79.4L418.6 79.4L420.2 79.3L421.8 79.2L423.4 79.1L424.9 78.9L426.3 78.6L427.7 78.3L429 78L430.2 77.6L431.4 77.2L432.4 76.8L433.3 76.3L434.2 75.8L434.8 75.2L435.4 74.7L435.8 74.1L436.1 73.5L436.3 72.9L436.3 72.3L436.2 71.7L435.9 71.1L435.5 70.5L435 70L434.3 69.4L433.5 68.9L432.6 68.4L431.6 67.9L430.5 67.5L429.3 67.1L428 66.8L426.6 66.5L425.2 66.2L423.7 66L422.1 65.9L420.5 65.7L419 65.7L417.4 65.7M376.3 472.3L377 471.3M383.3 473.6L385.6 472.5M390.6 474.6L394.4 473.4M398 475.4L403.4 474.1M405.6 475.9L412.5 474.4M413.4 476.2L421.7 474.4M421.1 476.2L430.8 474.2M428.8 476L439.8 473.6M436.5 475.5L448.7 472.7M443.9 474.8L457.3 471.6M451.2 473.8L465.7 470.2M458.3 472.6L473.6 468.5M465 471.2L481.2 466.5M346.4 463.9L343.8 461.6M353.4 466.1L352.4 463.8M360.8 468.1L361.5 465.8M368.7 469.9L370.9 467.5M377 471.3L380.8 468.9M385.6 472.5L390.9 470M394.4 473.4L401.2 470.7M403.4 474.1L411.7 471.1M412.5 474.4L422.2 471.1M421.7 474.4L432.7 470.8M430.8 474.2L443 470.1M439.8 473.6L453.2 469.1M448.7 472.7L463.1 467.8M457.3 471.6L472.7 466.2M465.7 470.2L481.8 464.3M473.6 468.5L490.5 462M481.2 466.5L498.6 459.5M488.3 464.4L506.1 456.8M494.8 461.9L512.9 453.8M321.8 453.2L317.7 449.5M328.5 456.2L325.9 452.6M335.9 459L334.9 455.5M343.8 461.6L344.5 458.1M352.4 463.8L354.6 460.3M361.5 465.8L365.3 462.2M370.9 467.5L376.3 463.7M380.8 468.9L387.6 464.9M390.9 470L399.2 465.7M401.2 470.7L410.9 466.2M411.7 471.1L422.7 466.2M422.2 471.1L434.5 465.8M432.7 470.8L446.1 465.1M443 470.1L457.5 464M453.2 469.1L468.6 462.5M463.1 467.8L479.3 460.7M472.7 466.2L489.5 458.5M481.8 464.3L499.2 456M490.5 462L508.3 453.2M498.6 459.5L516.7 450.1M506.1 456.8L524.4 446.8M512.9 453.8L531.2 443.2M303.5 442.5L299.4 437.7M310.2 446.1L307.6 441.4M317.7 449.5L316.7 444.9M325.9 452.6L326.6 448M334.9 455.5L337.1 450.8M344.5 458.1L348.3 453.3M354.6 460.3L360 455.4M365.3 462.2L372.1 457.1M376.3 463.7L384.6 458.4M387.6 464.9L397.3 459.3M399.2 465.7L410.2 459.7M410.9 466.2L423.2 459.8M422.7 466.2L436.1 459.4M434.5 465.8L448.9 458.6M446.1 465.1L461.4 457.4M457.5 464L473.6 455.8M468.6 462.5L485.4 453.7M479.3 460.7L496.7 451.4M489.5 458.5L507.4 448.6M499.2 456L517.4 445.5M508.3 453.2L526.6 442.1M516.7 450.1L535 438.4M524.4 446.8L542.5 434.5M531.2 443.2L549.1 430.3M537.2 439.4L554.7 425.9M285.7 429.4L281.6 423.6M292.1 433.7L289.5 427.9M299.4 437.7L298.5 432M307.6 441.4L308.3 435.7M316.7 444.9L319 439.1M326.6 448L330.4 442.2M337.1 450.8L342.5 444.9M348.3 453.3L355.1 447.1M360 455.4L368.3 449M372.1 457.1L381.8 450.4M384.6 458.4L395.6 451.3M397.3 459.3L409.6 451.8M410.2 459.7L423.6 451.9M423.2 459.8L437.6 451.5M436.1 459.4L451.4 450.6M448.9 458.6L465 449.3M461.4 457.4L478.3 447.5M473.6 455.8L491 445.4M485.4 453.7L503.2 442.8M496.7 451.4L514.8 439.8M507.4 448.6L525.6 436.4M517.4 445.5L535.7 432.8M526.6 442.1L544.8 428.8M535 438.4L552.9 424.5M542.5 434.5L560 419.9M549.1 430.3L566.1 415.2M268.8 414.2L264.7 407.4M274.7 419L272.1 412.3M281.6 423.6L280.6 417M289.5 427.9L290.2 421.3M298.5 432L300.7 425.3M308.3 435.7L312.1 429M319 439.1L324.3 432.2M330.4 442.2L337.2 435.1M342.5 444.9L350.8 437.5M355.1 447.1L364.8 439.5M368.3 449L379.3 441M381.8 450.4L394.1 442M395.6 451.3L409 442.5M409.6 451.8L424 442.6M423.6 451.9L439 442.1M437.6 451.5L453.8 441.2M451.4 450.6L468.3 439.8M465 449.3L482.4 437.9M478.3 447.5L496.1 435.6M491 445.4L509.2 432.8M503.2 442.8L521.5 429.6M514.8 439.8L533.1 426.1M525.6 436.4L543.8 422.1M535.7 432.8L553.6 417.9M544.8 428.8L562.3 413.3M552.9 424.5L569.9 408.4M560 419.9L576.3 403.4M566.1 415.2L581.6 398.1M253.5 397L249.4 389.4M258.5 402.3L256 394.8M264.7 407.4L263.8 400M272.1 412.3L272.8 404.9M280.6 417L282.8 409.4M290.2 421.3L294 413.7M300.7 425.3L306 417.5M312.1 429L318.9 421M324.3 432.2L332.6 424M337.2 435.1L346.9 426.6M350.8 437.5L361.8 428.6M364.8 439.5L377.1 430.2M379.3 441L392.7 431.3M394.1 442L408.5 431.9M409 442.5L424.3 431.9M424 442.6L440.2 431.5M439 442.1L455.8 430.5M453.8 441.2L471.2 429M468.3 439.8L486.1 427M482.4 437.9L500.6 424.6M496.1 435.6L514.4 421.6M509.2 432.8L527.4 418.3M521.5 429.6L539.7 414.5M533.1 426.1L551 410.3M543.8 422.1L561.3 405.8M553.6 417.9L570.5 401M562.3 413.3L578.6 395.8M569.9 408.4L585.4 390.5M576.3 403.4L591 384.9M581.6 398.1L595.2 379.2M244.1 383.8L241.5 375.5M249.4 389.4L248.4 381.2M256 394.8L256.6 386.6M263.8 400L266 391.7M272.8 404.9L276.6 396.5M282.8 409.4L288.2 400.9M294 413.7L300.8 405M306 417.5L314.3 408.6M318.9 421L328.6 411.7M332.6 424L343.6 414.4M346.9 426.6L359.2 416.6M361.8 428.6L375.2 418.3M377.1 430.2L391.5 419.4M392.7 431.3L408 420M408.5 431.9L424.6 420M424.3 431.9L441.2 419.6M440.2 431.5L457.6 418.5M455.8 430.5L473.6 417M471.2 429L489.3 414.9M486.1 427L504.4 412.3M500.6 424.6L518.9 409.3M514.4 421.6L532.5 405.7M527.4 418.3L545.4 401.8M539.7 414.5L557.2 397.4M551 410.3L568 392.7M561.3 405.8L577.6 387.6M570.5 401L586 382.3M578.6 395.8L593.2 376.6M585.4 390.5L599 370.8M591 384.9L603.4 364.8M231.8 363.6L229.3 354.7M236 369.6L235 360.8M241.5 375.5L242.2 366.7M248.4 381.2L250.7 372.3M256.6 386.6L260.4 377.6M266 391.7L271.4 382.6M276.6 396.5L283.4 387.2M288.2 400.9L296.5 391.3M300.8 405L310.5 395.1M314.3 408.6L325.4 398.4M328.6 411.7L340.9 401.1M343.6 414.4L357 403.4M359.2 416.6L373.6 405.1M375.2 418.3L390.5 406.3M391.5 419.4L407.7 406.9M408 420L424.9 407M424.6 420L442 406.5M441.2 419.6L459 405.4M457.6 418.5L475.7 403.8M473.6 417L491.9 401.6M489.3 414.9L507.6 399M504.4 412.3L522.6 395.8M518.9 409.3L536.8 392.1M532.5 405.7L550 388M545.4 401.8L562.3 383.5M557.2 397.4L573.5 378.6M568 392.7L583.5 373.4M577.6 387.6L592.2 367.8M586 382.3L599.6 362M593.2 376.6L605.7 355.9M599 370.8L610.3 349.7M603.4 364.8L613.4 343.4M225 348.5L224 339.1M229.3 354.7L229.9 345.4M235 360.8L237.3 351.4M242.2 366.7L246 357.2M250.7 372.3L256 362.6M260.4 377.6L267.3 367.7M271.4 382.6L279.7 372.5M283.4 387.2L293.1 376.8M296.5 391.3L307.5 380.6M310.5 395.1L322.8 384M325.4 398.4L338.7 386.8M340.9 401.1L355.3 389.2M357 403.4L372.4 390.9M373.6 405.1L389.8 392.1M390.5 406.3L407.4 392.8M407.7 406.9L425.1 392.8M424.9 407L442.7 392.3M442 406.5L460.2 391.2M459 405.4L477.3 389.6M475.7 403.8L494 387.3M491.9 401.6L510.1 384.6M507.6 399L525.5 381.3M522.6 395.8L540.1 377.6M536.8 392.1L553.7 373.4M550 388L566.4 368.7M562.3 383.5L577.8 363.7M573.5 378.6L588.1 358.3M583.5 373.4L597.1 352.6M592.2 367.8L604.7 346.6M599.6 362L610.9 340.4M605.7 355.9L615.6 334M610.3 349.7L618.9 327.5M216.7 326.2L215.7 316.4M219.6 332.7L220.2 323M224 339.1L226.2 329.3M229.9 345.4L233.7 335.5M237.3 351.4L242.6 341.4M246 357.2L252.8 346.9M256 362.6L264.3 352.1M267.3 367.7L277 357M279.7 372.5L290.7 361.4M293.1 376.8L305.4 365.3M307.5 380.6L320.9 368.7M322.8 384L337.2 371.6M338.7 386.8L354.1 374M355.3 389.2L371.5 375.8M372.4 390.9L389.2 377M389.8 392.1L407.2 377.7M407.4 392.8L425.2 377.7M425.1 392.8L443.2 377.2M442.7 392.3L461 376.1M460.2 391.2L478.5 374.4M477.3 389.6L495.5 372.1M494 387.3L511.9 369.3M510.1 384.6L527.6 366M525.5 381.3L542.5 362.2M540.1 377.6L556.4 357.9M553.7 373.4L569.3 353.1M566.4 368.7L581 348M577.8 363.7L591.4 342.5M588.1 358.3L600.6 336.7M597.1 352.6L608.4 330.6M604.7 346.6L614.7 324.3M610.9 340.4L619.5 317.7M615.6 334L622.8 311.1M212.7 309.8L213.4 299.8M215.7 316.4L217.9 306.4M220.2 323L224 312.8M226.2 329.3L231.6 319M233.7 335.5L240.6 325M242.6 341.4L250.9 330.6M252.8 346.9L262.5 335.9M264.3 352.1L275.3 340.8M277 357L289.2 345.2M290.7 361.4L304.1 349.2M305.4 365.3L319.8 352.7M320.9 368.7L336.3 355.6M337.2 371.6L353.4 358M354.1 374L370.9 359.8M371.5 375.8L388.9 361.1M389.2 377L407.1 361.7M407.2 377.7L425.3 361.8M425.2 377.7L443.5 361.3M443.2 377.2L461.5 360.1M461 376.1L479.2 358.4M478.5 374.4L496.4 356.1M495.5 372.1L513 353.3M511.9 369.3L528.9 349.9M527.6 366L543.9 346.1M542.5 362.2L558 341.7M556.4 357.9L571 336.9M569.3 353.1L582.9 331.7M581 348L593.5 326.2M591.4 342.5L602.7 320.3M600.6 336.7L610.6 314.1M608.4 330.6L617 307.7M614.7 324.3L621.8 301.1M619.5 317.7L625.2 294.4M622.8 311.1L626.9 287.6M208.9 286.2L209.6 276.1M210.4 293L212.6 282.9M213.4 299.8L217.2 289.5M217.9 306.4L223.3 296M224 312.8L230.9 302.2M231.6 319L239.9 308.2M240.6 325L250.3 313.8M250.9 330.6L261.9 319.1M262.5 335.9L274.8 324M275.3 340.8L288.7 328.5M289.2 345.2L303.6 332.5M304.1 349.2L319.4 336M319.8 352.7L335.9 338.9M336.3 355.6L353.1 341.3M353.4 358L370.8 343.2M370.9 359.8L388.8 344.4M388.9 361.1L407 345.1M407.1 361.7L425.3 345.1M425.3 361.8L443.6 344.6M443.5 361.3L461.7 343.4M461.5 360.1L479.4 341.7M479.2 358.4L496.7 339.4M496.4 356.1L513.3 336.6M513 353.3L529.3 333.2M528.9 349.9L544.4 329.3M543.9 346.1L558.5 325M558 341.7L571.6 320.2M571 336.9L583.5 314.9M582.9 331.7L594.1 309.3M593.5 326.2L603.4 303.4M602.7 320.3L611.3 297.2M610.6 314.1L617.7 290.8M617 307.7L622.6 284.2M621.8 301.1L626 277.4M625.2 294.4L627.7 270.6M208.1 269.2L210.4 259.1M209.6 276.1L213.4 265.8M212.6 282.9L217.9 272.4M217.2 289.5L224 278.9M223.3 296L231.6 285.1M230.9 302.2L240.6 291.1M239.9 308.2L250.9 296.7M250.3 313.8L262.5 302M261.9 319.1L275.3 306.8M274.8 324L289.2 311.3M288.7 328.5L304.1 315.3M303.6 332.5L319.8 318.7M319.4 336L336.3 321.7M335.9 338.9L353.4 324.1M353.1 341.3L370.9 325.9M370.8 343.2L388.9 327.1M388.8 344.4L407.1 327.8M407 345.1L425.3 327.9M425.3 345.1L443.5 327.3M443.6 344.6L461.5 326.2M461.7 343.4L479.2 324.5M479.4 341.7L496.4 322.2M496.7 339.4L513 319.4M513.3 336.6L528.9 316M529.3 333.2L543.9 312.1M544.4 329.3L558 307.8M558.5 325L571 303M571.6 320.2L582.9 297.8M583.5 314.9L593.5 292.2M594.1 309.3L602.7 286.3M603.4 303.4L610.6 280.2M611.3 297.2L617 273.7M617.7 290.8L621.8 267.2M622.6 284.2L625.2 260.4M626 277.4L626.9 253.6M627.7 270.6L627.1 246.8M208.9 252.3L212.7 242.1M210.4 259.1L215.7 248.8M213.4 265.8L220.2 255.3M217.9 272.4L226.2 261.7M224 278.9L233.7 267.9M231.6 285.1L242.6 273.7M240.6 291.1L252.8 279.3M250.9 296.7L264.3 284.5M262.5 302L277 289.3M275.3 306.8L290.7 293.7M289.2 311.3L305.4 297.7M304.1 315.3L320.9 301.1M319.8 318.7L337.2 304M336.3 321.7L354.1 306.4M353.4 324.1L371.5 308.2M370.9 325.9L389.2 309.4M388.9 327.1L407.2 310.1M407.1 327.8L425.2 310.1M425.3 327.9L443.2 309.6M443.5 327.3L461 308.5M461.5 326.2L478.5 306.8M479.2 324.5L495.5 304.5M496.4 322.2L511.9 301.7M513 319.4L527.6 298.4M528.9 316L542.5 294.6M543.9 312.1L556.4 290.3M558 307.8L569.3 285.5M571 303L581 280.4M582.9 297.8L591.4 274.9M593.5 292.2L600.6 269.1M602.7 286.3L608.4 263M610.6 280.2L614.7 256.6M617 273.7L619.5 250.1M621.8 267.2L622.8 243.5M625.2 260.4L624.5 236.7M626.9 253.6L624.7 230M211.5 228.6L215.3 218.8M211.3 235.4L216.7 225.4M212.7 242.1L219.6 231.9M215.7 248.8L224 238.3M220.2 255.3L229.9 244.6M226.2 261.7L237.3 250.6M233.7 267.9L246 256.4M242.6 273.7L256 261.8M252.8 279.3L267.3 267M264.3 284.5L279.7 271.7M277 289.3L293.1 276M290.7 293.7L307.5 279.8M305.4 297.7L322.8 283.2M320.9 301.1L338.7 286.1M337.2 304L355.3 288.4M354.1 306.4L372.4 290.1M371.5 308.2L389.8 291.4M389.2 309.4L407.4 292M407.2 310.1L425.1 292M425.2 310.1L442.7 291.5M443.2 309.6L460.2 290.4M461 308.5L477.3 288.8M478.5 306.8L494 286.6M495.5 304.5L510.1 283.8M511.9 301.7L525.5 280.5M527.6 298.4L540.1 276.8M542.5 294.6L553.7 272.6M556.4 290.3L566.4 267.9M569.3 285.5L577.8 262.9M581 280.4L588.1 257.5M591.4 274.9L597.1 251.8M600.6 269.1L604.7 245.8M608.4 263L610.9 239.6M614.7 256.6L615.6 233.2M619.5 250.1L618.9 226.7M622.8 243.5L620.6 220.1M624.5 236.7L620.7 213.5M215.4 212.1L220.8 202.5M215.3 218.8L222.1 208.9M216.7 225.4L225 215.3M219.6 231.9L229.3 221.5M224 238.3L235 227.6M229.9 244.6L242.2 233.5M237.3 250.6L250.7 239.1M246 256.4L260.4 244.4M256 261.8L271.4 249.4M267.3 267L283.4 254M279.7 271.7L296.5 258.2M293.1 276L310.5 261.9M307.5 279.8L325.4 265.2M322.8 283.2L340.9 268M338.7 286.1L357 270.2M355.3 288.4L373.6 271.9M372.4 290.1L390.5 273.1M389.8 291.4L407.7 273.7M407.4 292L424.9 273.8M425.1 292L442 273.3M442.7 291.5L459 272.2M460.2 290.4L475.7 270.6M477.3 288.8L491.9 268.4M494 286.6L507.6 265.8M510.1 283.8L522.6 262.6M525.5 280.5L536.8 258.9M540.1 276.8L550 254.8M553.7 272.6L562.3 250.3M566.4 267.9L573.5 245.4M577.8 262.9L583.5 240.2M588.1 257.5L592.2 234.6M597.1 251.8L599.6 228.8M604.7 245.8L605.7 222.7M610.9 239.6L610.3 216.5M615.6 233.2L613.4 210.2M618.9 226.7L615.1 203.8M620.6 220.1L615.2 197.3M620.7 213.5L613.9 190.9M222.6 189.6L227.9 180.5M220.9 196L227.8 186.7M220.8 202.5L229.1 192.9M222.1 208.9L231.8 199M225 215.3L236 205.1M229.3 221.5L241.5 210.9M235 227.6L248.4 216.6M242.2 233.5L256.6 222M250.7 239.1L266 227.1M260.4 244.4L276.6 231.9M271.4 249.4L288.2 236.4M283.4 254L300.8 240.4M296.5 258.2L314.3 244M310.5 261.9L328.6 247.2M325.4 265.2L343.6 249.8M340.9 268L359.2 252M357 270.2L375.2 253.7M373.6 271.9L391.5 254.8M390.5 273.1L408 255.4M407.7 273.7L424.6 255.5M424.6 255.5L442 273.3M441.2 255L459 272.2M457.6 254L475.7 270.6M473.6 252.4L491.9 268.4M489.3 250.3L507.6 265.8M504.4 247.7L522.6 262.6M518.9 244.7L536.8 258.9M532.5 241.2L550 254.8M545.4 237.2L562.3 250.3M557.2 232.8L573.5 245.4M568 228.1L583.5 240.2M577.6 223L592.2 234.6M586 217.7L599.6 228.8M593.2 212.1L605.7 222.7M599 206.2L610.3 216.5M603.4 200.3L613.4 210.2M606.5 194.1L615.1 203.8M608.1 187.9L615.2 197.3M615.2 197.3L606.9 175.5M229.5 174.3L236.4 165.6M227.9 180.5L236.2 171.5M227.8 186.7L237.5 177.4M229.1 192.9L240.1 183.3M231.8 199L244.1 189.1M236 205.1L249.4 194.7M241.5 210.9L256 200.1M248.4 216.6L263.8 205.2M256.6 222L272.8 210.1M266 227.1L282.8 214.7M276.6 231.9L294 219M288.2 236.4L306 222.8M300.8 240.4L318.9 226.3M314.3 244L332.6 229.3M328.6 247.2L346.9 231.9M343.6 249.8L361.8 233.9M359.2 252L377.1 235.5M375.2 253.7L392.7 236.6M391.5 254.8L408.5 237.2M408 255.4L424.3 237.2M424.3 237.2L441.2 255M440.2 236.8L457.6 254M455.8 235.8L473.6 252.4M471.2 234.3L489.3 250.3M486.1 232.3L504.4 247.7M500.6 229.8L518.9 244.7M514.4 226.9L532.5 241.2M527.4 223.6L545.4 237.2M539.7 219.8L557.2 232.8M551 215.6L568 228.1M561.3 211.1L577.6 223M570.5 206.3L586 217.7M578.6 201.1L593.2 212.1M585.4 195.8L599 206.2M591 190.2L603.4 200.3M595.2 184.5L606.5 194.1M598.1 178.6L608.1 187.9M599.6 172.7L608.2 181.7M608.2 181.7L598.5 160.8M606.9 175.5L595.9 155M240.8 153.8L247.7 145.9M237.9 159.7L246.2 151.4M236.4 165.6L246.1 157.1M236.2 171.5L247.3 162.7M237.5 177.4L249.7 168.2M240.1 183.3L253.5 173.7M244.1 189.1L258.5 179M249.4 194.7L264.7 184.1M256 200.1L272.1 189M263.8 205.2L280.6 193.6M272.8 210.1L290.2 197.9M282.8 214.7L300.7 201.9M294 219L312.1 205.6M306 222.8L324.3 208.9M318.9 226.3L337.2 211.7M332.6 229.3L350.8 214.1M346.9 231.9L364.8 216.1M361.8 233.9L379.3 217.6M377.1 235.5L394.1 218.6M392.7 236.6L409 219.2M408.5 237.2L424 219.2M424 219.2L440.2 236.8M439 218.8L455.8 235.8M453.8 217.9L471.2 234.3M468.3 216.4L486.1 232.3M482.4 214.6L500.6 229.8M496.1 212.2L514.4 226.9M509.2 209.5L527.4 223.6M521.5 206.3L539.7 219.8M533.1 202.7L551 215.6M543.8 198.8L561.3 211.1M553.6 194.5L570.5 206.3M562.3 189.9L578.6 201.1M569.9 185.1L585.4 195.8M576.3 180L591 190.2M581.6 174.7L595.2 184.5M585.6 169.3L598.1 178.6M588.3 163.8L599.6 172.7M589.8 158.2L599.8 166.8M599.8 166.8L588.7 147M598.5 160.8L586.3 141.4M595.9 155L582.5 136M250.4 140.3L258.7 133M247.7 145.9L257.4 138.2M246.2 151.4L257.2 143.4M246.1 157.1L258.3 148.7M247.3 162.7L260.6 153.9M249.7 168.2L264.2 159M253.5 173.7L268.8 163.9M258.5 179L274.7 168.7M264.7 184.1L281.6 173.3M272.1 189L289.5 177.6M280.6 193.6L298.5 181.7M290.2 197.9L308.3 185.4M300.7 201.9L319 188.8M312.1 205.6L330.4 191.9M324.3 208.9L342.5 194.6M337.2 211.7L355.1 196.8M350.8 214.1L368.3 198.7M364.8 216.1L381.8 200.1M379.3 217.6L395.6 201M394.1 218.6L409.6 201.5M409 219.2L423.6 201.6M423.6 201.6L439 218.8M437.6 201.2L453.8 217.9M451.4 200.3L468.3 216.4M465 199L482.4 214.6M478.3 197.2L496.1 212.2M491 195L509.2 209.5M503.2 192.4L521.5 206.3M514.8 189.5L533.1 202.7M525.6 186.1L543.8 198.8M535.7 182.4L553.6 194.5M544.8 178.4L562.3 189.9M552.9 174.2L569.9 185.1M560 169.6L576.3 180M566.1 164.9L581.6 174.7M571 160L585.6 169.3M574.7 154.9L588.3 163.8M577.3 149.7L589.8 158.2M578.6 144.5L589.9 152.6M589.9 152.6L577.7 134M588.7 147L575.4 128.8M586.3 141.4L571.8 123.7M265 122.7L273.3 116.3M261.3 127.8L271 121.1M258.7 133L269.7 125.9M257.4 138.2L269.6 130.8M257.2 143.4L270.6 135.6M258.3 148.7L272.8 140.4M260.6 153.9L276 145.1M264.2 159L280.3 149.7M268.8 163.9L285.7 154.1M274.7 168.7L292.1 158.3M281.6 173.3L299.4 162.3M289.5 177.6L307.6 166M298.5 181.7L316.7 169.5M308.3 185.4L326.6 172.7M319 188.8L337.1 175.5M330.4 191.9L348.3 177.9M342.5 194.6L360 180M355.1 196.8L372.1 181.7M368.3 198.7L384.6 183M381.8 200.1L397.3 183.9M395.6 201L410.2 184.4M409.6 201.5L423.2 184.4M423.2 184.4L437.6 201.2M436.1 184L451.4 200.3M448.9 183.2L465 199M461.4 182L478.3 197.2M473.6 180.4L491 195M485.4 178.4L503.2 192.4M496.7 176L514.8 189.5M507.4 173.2L525.6 186.1M517.4 170.2L535.7 182.4M526.6 166.8L544.8 178.4M535 163.1L552.9 174.2M542.5 159.1L560 169.6M549.1 154.9L566.1 164.9M554.7 150.6L571 160M559.2 146L574.7 154.9M562.7 141.3L577.3 149.7M565 136.6L578.6 144.5M566.3 131.7L578.8 139.2M578.8 139.2L565.4 122M577.7 134L563.2 117.3M575.4 128.8L560 112.6M571.8 123.7L555.7 108M281.3 107.1L289.6 101.7M276.8 111.6L286.5 106M273.3 116.3L284.3 110.3M271 121.1L283.2 114.7M269.7 125.9L283.1 119.1M269.6 130.8L284 123.5M270.6 135.6L286 127.9M272.8 140.4L288.9 132.1M276 145.1L292.8 136.3M280.3 149.7L297.7 140.3M285.7 154.1L303.5 144.1M292.1 158.3L310.2 147.8M299.4 162.3L317.7 151.2M307.6 166L325.9 154.3M316.7 169.5L334.9 157.2M326.6 172.7L344.5 159.8M337.1 175.5L354.6 162M348.3 177.9L365.3 163.9M360 180L376.3 165.4M372.1 181.7L387.6 166.6M384.6 183L399.2 167.4M397.3 183.9L410.9 167.8M410.2 184.4L422.7 167.9M422.7 167.9L436.1 184M434.5 167.5L448.9 183.2M446.1 166.8L461.4 182M457.5 165.7L473.6 180.4M468.6 164.2L485.4 178.4M479.3 162.4L496.7 176M489.5 160.2L507.4 173.2M499.2 157.7L517.4 170.2M508.3 154.9L526.6 166.8M516.7 151.8L535 163.1M524.4 148.5L542.5 159.1M531.2 144.9L549.1 154.9M537.2 141.1L554.7 150.6M542.3 137.1L559.2 146M546.4 133L562.7 141.3M549.5 128.7L565 136.6M551.7 124.4L566.3 131.7M552.8 120L566.4 126.9M566.4 126.9L552 111.2M565.4 122L550 106.8M563.2 117.3L547.1 102.6M560 112.6L543.2 98.4M555.7 108L538.3 94.4M298.8 93.6L307.1 89.4M293.7 97.6L303.4 93.1M289.6 101.7L300.6 96.9M286.5 106L298.7 100.7M284.3 110.3L297.7 104.6M283.2 114.7L297.6 108.6M283.1 119.1L298.4 112.5M284 123.5L300.2 116.4M286 127.9L302.8 120.2M288.9 132.1L306.3 123.9M292.8 136.3L310.7 127.5M297.7 140.3L315.9 130.9M303.5 144.1L321.8 134.2M310.2 147.8L328.5 137.2M317.7 151.2L335.9 140M325.9 154.3L343.8 142.6M334.9 157.2L352.4 144.8M344.5 159.8L361.5 146.8M354.6 162L370.9 148.5M365.3 163.9L380.8 149.9M376.3 165.4L390.9 151M387.6 166.6L401.2 151.7M399.2 167.4L411.7 152.1M410.9 167.8L422.2 152.1M422.2 152.1L434.5 167.5M432.7 151.8L446.1 166.8M443 151.1L457.5 165.7M453.2 150.2L468.6 164.2M463.1 148.8L479.3 162.4M472.7 147.2L489.5 160.2M481.8 145.3L499.2 157.7M490.5 143L508.3 154.9M498.6 140.5L516.7 151.8M506.1 137.8L524.4 148.5M512.9 134.8L531.2 144.9M519 131.6L537.2 141.1M524.4 128.2L542.3 137.1M528.9 124.6L546.4 133M532.6 120.9L549.5 128.7M535.4 117.2L551.7 124.4M537.3 113.3L552.8 120M538.3 109.4L552.9 115.6M552.9 115.6L537.6 101.5M552 111.2L535.8 97.6M550 106.8L533.2 93.8M547.1 102.6L529.7 90.1M543.2 98.4L525.3 86.5M538.3 94.4L520.1 83.1M317 82.4L325.3 79.4M311.6 85.8L321.3 82.5M307.1 89.4L318.1 85.7M303.4 93.1L315.7 89M300.6 96.9L314 92.4M298.7 100.7L313.1 95.8M297.7 104.6L313.1 99.3M297.6 108.6L313.8 102.7M298.4 112.5L315.3 106.1M300.2 116.4L317.6 109.4M302.8 120.2L320.6 112.6M306.3 123.9L324.4 115.7M310.7 127.5L329 118.7M315.9 130.9L334.1 121.5M321.8 134.2L340 124.2M328.5 137.2L346.4 126.6M335.9 140L353.4 128.9M343.8 142.6L360.8 130.9M352.4 144.8L368.7 132.6M361.5 146.8L377 134.1M370.9 148.5L385.6 135.3M380.8 149.9L394.4 136.2M390.9 151L403.4 136.8M401.2 151.7L412.5 137.2M411.7 152.1L421.7 137.2M421.7 137.2L432.7 151.8M430.8 136.9L443 151.1M439.8 136.4L453.2 150.2M448.7 135.5L463.1 148.8M457.3 134.3L472.7 147.2M465.7 132.9L481.8 145.3M473.6 131.2L490.5 143M481.2 129.3L498.6 140.5M488.3 127.1L506.1 137.8M494.8 124.7L512.9 134.8M500.7 122.1L519 131.6M506.1 119.3L524.4 128.2M510.7 116.3L528.9 124.6M514.7 113.2L532.6 120.9M517.9 110L535.4 117.2M520.3 106.7L537.3 113.3M522 103.4L538.3 109.4M522.9 99.9L538.4 105.4M538.4 105.4L522.2 93.1M537.6 101.5L520.7 89.7M535.8 97.6L518.4 86.4M533.2 93.8L515.4 83.1M529.7 90.1L511.6 80M525.3 86.5L507 77M520.1 83.1L501.9 74.2M341.2 71.1L348.1 69.6M335.3 73.7L343.6 71.9M329.9 76.5L339.6 74.4M325.3 79.4L336.3 77M321.3 82.5L333.6 79.8M318.1 85.7L331.5 82.6M315.7 89L330.1 85.4M314 92.4L329.4 88.3M313.1 95.8L329.3 91.2M313.1 99.3L329.9 94.1M313.8 102.7L331.2 96.9M315.3 106.1L333.1 99.8M317.6 109.4L335.7 102.5M320.6 112.6L338.9 105.1M324.4 115.7L342.7 107.7M329 118.7L347.1 110M334.1 121.5L352 112.3M340 124.2L357.5 114.3M346.4 126.6L363.4 116.2M353.4 128.9L369.7 117.9M360.8 130.9L376.3 119.4M368.7 132.6L383.3 120.6M377 134.1L390.6 121.7M385.6 135.3L398 122.4M394.4 136.2L405.6 123M403.4 136.8L413.4 123.2M412.5 137.2L421.1 123.3M421.1 123.3L430.8 136.9M428.8 123L439.8 136.4M436.5 122.6L448.7 135.5M443.9 121.8L457.3 134.3M451.2 120.9L465.7 132.9M458.3 119.7L473.6 131.2M465 118.2L481.2 129.3M471.4 116.6L488.3 127.1M477.4 114.7L494.8 124.7M482.9 112.7L500.7 122.1M487.9 110.5L506.1 119.3M492.4 108.1L510.7 116.3M496.4 105.6L514.7 113.2M499.7 103L517.9 110M502.4 100.3L520.3 106.7M504.5 97.5L522 103.4M505.9 94.7L522.9 99.9M506.6 91.8L522.9 96.5M522.9 96.5L506.1 86M522.2 93.1L504.8 83.1M520.7 89.7L502.9 80.3M518.4 86.4L500.3 77.6M515.4 83.1L497.1 74.9M511.6 80L493.3 72.4M507 77L488.9 70M501.9 74.2L484 67.8M496 71.6L478.5 65.7M377.7 60.4L379.9 60.7M371 61.8L374.8 62M364.6 63.5L369.9 63.5M358.6 65.3L365.5 65.2M353.1 67.4L361.4 67M348.1 69.6L357.8 68.9M343.6 71.9L354.6 70.9M339.6 74.4L351.9 73M336.3 77L349.7 75.2M333.6 79.8L348 77.5M331.5 82.6L346.9 79.8M330.1 85.4L346.3 82.1M329.4 88.3L346.2 84.5M329.3 91.2L346.7 86.8M329.9 94.1L347.7 89.1M331.2 96.9L349.3 91.4M333.1 99.8L351.4 93.6M335.7 102.5L354 95.7M338.9 105.1L357.1 97.8M342.7 107.7L360.6 99.7M347.1 110L364.6 101.5M352 112.3L369 103.2M357.5 114.3L373.8 104.7M363.4 116.2L378.9 106.1M369.7 117.9L384.3 107.3M376.3 119.4L389.9 108.3M383.3 120.6L395.8 109.1M390.6 121.7L401.8 109.7M398 122.4L408 110.2M405.6 123L414.2 110.4M413.4 123.2L420.5 110.4M420.5 110.4L428.8 123M426.8 110.2L436.5 122.6M432.9 109.9L443.9 121.8M439 109.3L451.2 120.9M444.9 108.5L458.3 119.7M450.6 107.5L465 118.2M456.1 106.4L471.4 116.6M461.2 105L477.4 114.7M466.1 103.5L482.9 112.7M470.5 101.9L487.9 110.5M474.6 100.1L492.4 108.1M478.2 98.2L496.4 105.6M481.4 96.2L499.7 103M484.1 94L502.4 100.3M486.3 91.8L504.5 97.5M488 89.6L505.9 94.7M489.1 87.3L506.6 91.8M489.7 84.9L506.7 88.9M506.7 88.9L489.3 80.3M506.1 86L488.3 77.9M504.8 83.1L486.7 75.7M502.9 80.3L484.6 73.5M500.3 77.6L482 71.3M497.1 74.9L478.9 69.3M493.3 72.4L475.4 67.3M488.9 70L471.4 65.5M484 67.8L467 63.9M478.5 65.7L462.2 62.3M472.6 63.8L457.1 61M466.3 62.2L451.7 59.8M459.7 60.7L446.1 58.8M397 57.8L397.6 59.5M391.1 58.6L393.3 60.3M385.4 59.6L389.2 61.2M379.9 60.7L385.3 62.2M374.8 62L381.6 63.3M369.9 63.5L378.2 64.5M365.5 65.2L375.2 65.9M361.4 67L372.4 67.3M357.8 68.9L370 68.9M354.6 70.9L368 70.5M351.9 73L366.3 72.1M349.7 75.2L365 73.8M348 77.5L364.2 75.6M346.9 79.8L363.7 77.4M346.3 82.1L363.7 79.1M346.2 84.5L364.1 80.9M346.7 86.8L364.8 82.7M347.7 89.1L366 84.4M349.3 91.4L367.6 86.1M351.4 93.6L369.6 87.7M354 95.7L371.9 89.2M357.1 97.8L374.6 90.7M360.6 99.7L377.6 92M364.6 101.5L380.9 93.3M369 103.2L384.5 94.5M373.8 104.7L388.4 95.5M378.9 106.1L392.5 96.4M384.3 107.3L396.8 97.2M389.9 108.3L401.2 97.8M395.8 109.1L405.8 98.3M401.8 109.7L410.4 98.6M408 110.2L415.2 98.8M414.2 110.4L419.9 98.8M419.9 98.8L426.8 110.2M424.6 98.6L432.9 109.9M429.3 98.3L439 109.3M433.9 97.9L444.9 108.5M438.4 97.3L450.6 107.5M442.7 96.6L456.1 106.4M446.8 95.7L461.2 105M450.7 94.7L466.1 103.5M454.4 93.6L470.5 101.9M457.8 92.3L474.6 100.1M460.8 91L478.2 98.2M463.6 89.5L481.4 96.2M466 88L484.1 94M468 86.4L486.3 91.8M469.7 84.7L488 89.6M471 83L489.1 87.3M471.8 81.3L489.7 84.9M472.3 79.5L489.8 82.6M489.8 82.6L471.9 75.9M489.3 80.3L471.2 74.2M488.3 77.9L470 72.5M486.7 75.7L468.4 70.8M484.6 73.5L466.4 69.2M482 71.3L464.1 67.6M478.9 69.3L461.4 66.2M475.4 67.3L458.4 64.8M471.4 65.5L455.1 63.5M467 63.9L451.5 62.4M462.2 62.3L447.6 61.4M457.1 61L443.5 60.4M451.7 59.8L439.2 59.7M446.1 58.8L434.8 59.1M440.2 57.9L430.2 58.6M416.1 58.1L413.6 61.2M411.4 58.2L410.4 61.4M406.7 58.5L407.3 61.7M402.1 59L404.3 62.1M397.6 59.5L401.4 62.6M393.3 60.3L398.7 63.2M389.2 61.2L396.1 63.8M385.3 62.2L393.6 64.6M381.6 63.3L391.3 65.4M378.2 64.5L389.3 66.3M375.2 65.9L387.4 67.3M372.4 67.3L385.8 68.3M370 68.9L384.4 69.4M368 70.5L383.3 70.5M366.3 72.1L382.5 71.7M365 73.8L381.9 72.8M364.2 75.6L381.6 74M363.7 77.4L381.6 75.2M363.7 79.1L381.8 76.4M364.1 80.9L382.3 77.6M364.8 82.7L383.1 78.7M366 84.4L384.2 79.9M367.6 86.1L385.5 81M369.6 87.7L387.1 82M371.9 89.2L388.9 83M374.6 90.7L390.9 83.9M377.6 92L393.1 84.7M380.9 93.3L395.5 85.5M384.5 94.5L398.1 86.2M388.4 95.5L400.9 86.8M392.5 96.4L403.8 87.3M396.8 97.2L406.7 87.7M401.2 97.8L409.8 88.1M405.8 98.3L412.9 88.3M410.4 98.6L416.1 88.4M415.2 98.8L419.3 88.4M419.3 88.4L424.6 98.6M422.4 88.3L429.3 98.3M425.6 88.1L433.9 97.9M428.7 87.8L438.4 97.3M431.7 87.4L442.7 96.6M434.6 86.9L446.8 95.7M437.3 86.3L450.7 94.7M439.9 85.7L454.4 93.6M442.4 84.9L457.8 92.3M444.7 84.1L460.8 91M446.7 83.2L463.6 89.5M448.6 82.2L466 88M450.2 81.2L468 86.4M451.6 80.1L469.7 84.7M452.7 79L471 83M453.5 77.8L471.8 81.3M454.1 76.7L472.3 79.5M454.4 75.5L472.3 77.7M472.3 77.7L454.2 73.1M471.9 75.9L453.7 71.9M471.2 74.2L452.9 70.8M470 72.5L451.8 69.6M468.4 70.8L450.5 68.5M466.4 69.2L448.9 67.5M464.1 67.6L447.1 66.5M461.4 66.2L445.1 65.6M458.4 64.8L442.9 64.8M455.1 63.5L440.5 64M451.5 62.4L437.9 63.3M447.6 61.4L435.1 62.7M443.5 60.4L432.2 62.2M439.2 59.7L429.3 61.8M434.8 59.1L426.2 61.4M430.2 58.6L423.1 61.2M425.6 58.3L419.9 61.1M420.8 58.1L416.7 61.1M416.7 61.1L415.8 65.7M413.6 61.2L414.2 65.8M410.4 61.4L412.6 66M407.3 61.7L411.1 66.2M404.3 62.1L409.7 66.4M401.4 62.6L408.3 66.7M398.7 63.2L407 67.1M396.1 63.8L405.8 67.4M393.6 64.6L404.6 67.9M391.3 65.4L403.6 68.3M389.3 66.3L402.7 68.8M387.4 67.3L401.8 69.3M385.8 68.3L401.2 69.9M384.4 69.4L400.6 70.4M383.3 70.5L400.2 71M382.5 71.7L399.9 71.6M381.9 72.8L399.7 72.2M381.6 74L399.7 72.8M381.6 75.2L399.8 73.4M381.8 76.4L400.1 74M382.3 77.6L400.5 74.5M383.1 78.7L401 75.1M384.2 79.9L401.7 75.6M385.5 81L402.5 76.2M387.1 82L403.4 76.7M388.9 83L404.4 77.1M390.9 83.9L405.5 77.5M393.1 84.7L406.7 77.9M395.5 85.5L408 78.3M398.1 86.2L409.4 78.6M400.9 86.8L410.8 78.8M403.8 87.3L412.3 79.1M406.7 87.7L413.9 79.2M409.8 88.1L415.5 79.3M412.9 88.3L417 79.4M416.1 88.4L418.6 79.4M418.6 79.4L422.4 88.3M420.2 79.3L425.6 88.1M421.8 79.2L428.7 87.8M423.4 79.1L431.7 87.4M424.9 78.9L434.6 86.9M426.3 78.6L437.3 86.3M427.7 78.3L439.9 85.7M429 78L442.4 84.9M430.2 77.6L444.7 84.1M431.4 77.2L446.7 83.2M432.4 76.8L448.6 82.2M433.3 76.3L450.2 81.2M434.2 75.8L451.6 80.1M434.8 75.2L452.7 79M435.4 74.7L453.5 77.8M435.8 74.1L454.1 76.7M436.1 73.5L454.4 75.5M436.3 72.9L454.4 74.3M454.4 74.3L436.2 71.7M454.2 73.1L435.9 71.1M453.7 71.9L435.5 70.5M452.9 70.8L435 70M451.8 69.6L434.3 69.4M450.5 68.5L433.5 68.9M448.9 67.5L432.6 68.4M447.1 66.5L431.6 67.9M445.1 65.6L430.5 67.5M442.9 64.8L429.3 67.1M440.5 64L428 66.8M437.9 63.3L426.6 66.5M435.1 62.7L425.2 66.2M432.2 62.2L423.7 66M429.3 61.8L422.1 65.9M426.2 61.4L420.5 65.7M423.1 61.2L419 65.7M419.9 61.1L417.4 65.7M417.4 65.7L418 71.8M415.8 65.7L418 71.8M414.2 65.8L418 71.8M412.6 66L418 71.8M411.1 66.2L418 71.8M409.7 66.4L418 71.8M408.3 66.7L418 71.8M407 67.1L418 71.8M405.8 67.4L418 71.8M404.6 67.9L418 71.8M403.6 68.3L418 71.8M402.7 68.8L418 71.8M401.8 69.3L418 71.8M401.2 69.9L418 71.8M400.6 70.4L418 71.8M400.2 71L418 71.8M399.9 71.6L418 71.8M399.7 72.2L418 71.8M399.7 72.8L418 71.8M399.8 73.4L418 71.8M400.1 74L418 71.8M400.5 74.5L418 71.8M401 75.1L418 71.8M401.7 75.6L418 71.8M402.5 76.2L418 71.8M403.4 76.7L418 71.8M404.4 77.1L418 71.8M405.5 77.5L418 71.8M406.7 77.9L418 71.8M408 78.3L418 71.8M409.4 78.6L418 71.8M410.8 78.8L418 71.8M412.3 79.1L418 71.8M413.9 79.2L418 71.8M415.5 79.3L418 71.8M417 79.4L418 71.8M418 71.8L420.2 79.3M418 71.8L421.8 79.2M418 71.8L423.4 79.1M418 71.8L424.9 78.9M418 71.8L426.3 78.6M418 71.8L427.7 78.3M418 71.8L429 78M418 71.8L430.2 77.6M418 71.8L431.4 77.2M418 71.8L432.4 76.8M418 71.8L433.3 76.3M418 71.8L434.2 75.8M418 71.8L434.8 75.2M418 71.8L435.4 74.7M418 71.8L435.8 74.1M418 71.8L436.1 73.5M418 71.8L436.3 72.9M418 71.8L436.3 72.3M436.3 72.3L418 71.8M436.2 71.7L418 71.8M435.9 71.1L418 71.8M435.5 70.5L418 71.8M435 70L418 71.8M434.3 69.4L418 71.8M433.5 68.9L418 71.8M432.6 68.4L418 71.8M431.6 67.9L418 71.8M430.5 67.5L418 71.8M429.3 67.1L418 71.8M428 66.8L418 71.8M426.6 66.5L418 71.8M425.2 66.2L418 71.8M423.7 66L418 71.8M422.1 65.9L418 71.8M420.5 65.7L418 71.8M419 65.7L418 71.8" fill="none" stroke="#021606" stroke-width="0.95" stroke-opacity="0.92"/><pattern id="pbody" width="5" height="4" patternUnits="userSpaceOnUse"><rect width="5" height="4" fill="#2ba823"/><path d="M0 4L5 0M0 0H5M0 0V4" stroke="#062a06" stroke-width="0.6" fill="none"/></pattern><pattern id="pfine" width="3" height="2.6" patternUnits="userSpaceOnUse"><rect width="3" height="2.6" fill="#8a5c36"/><path d="M0 0H3M0 1.3H3M0 2.6L1.5 0L3 2.6" stroke="#2a1608" stroke-width="0.45" fill="none"/></pattern><clipPath id="cw2"><rect x="7" y="-5.4" width="669" height="494"/></clipPath></defs><rect width="1110" height="546" fill="#fff"/><path d="M1066.5 0V134" stroke="#333" stroke-width="0.9" stroke-dasharray="2.7 1.4"/><g transform="translate(557.4 138.4) scale(0.813 0.8125)"><g clip-path="url(#cw2)"><rect x="10.5" y="-4" width="660" height="490" fill="#d5d8dc"/><rect x="10.5" y="-0.5" width="660" height="13.4" fill="url(#gtitle2)"/><rect x="10.5" y="12.9" width="660" height="17.5" fill="#d1d4d9"/><rect x="10.5" y="28.4" width="660" height="1" fill="#c8cbd0"/><rect x="10.5" y="29.4" width="660" height="2" fill="#e2e5e9"/><path d="M32 -4C36 8 40 12.3 48 12.3H106C112 12.3 115.5 8 115.5 3C115.5 0 114 -3 112 -4Z" fill="#e3e5e9" stroke="#bfc3c9" stroke-width="0.7"/><text x="340.8" y="7.9" font-size="6.6" text-anchor="middle" fill="#222" font-weight="normal" textLength="77.5" lengthAdjust="spacingAndGlyphs" >Ennova 1.3 (win64 15.07.06)</text><path d="M634 8.3H638.5" stroke="#8a8f98" stroke-width="1"/><rect x="648" y="4.6" width="3.8" height="3.6" fill="#fff" stroke="#8a8f98" stroke-width="0.8"/><path d="M648 4.6H651.8" stroke="#555" stroke-width="1"/><path d="M662.3 4L666.3 8.4M666.3 4L662.3 8.4" stroke="#7a8aa8" stroke-width="0.9"/><circle cx="664" cy="20.5" r="3.7" fill="#1a3ea8" stroke="#9a9070" stroke-width="0.7"/><text x="664" y="22.8" font-size="6.2" text-anchor="middle" fill="#fff" font-weight="bold" >?</text><path d="M111.5 30V21Q111.5 18.7 114 18.7H137Q139.4 18.7 139.4 21V30Z" fill="#e6e9ee" stroke="#b9bdc4" stroke-width="0.7"/><text x="44.7" y="26" font-size="6.8" text-anchor="start" fill="#151515" font-weight="normal" textLength="13.5" lengthAdjust="spacingAndGlyphs" >CAD</text><text x="74.3" y="26" font-size="6.8" text-anchor="start" fill="#151515" font-weight="normal" textLength="27.1" lengthAdjust="spacingAndGlyphs" >Geometry</text><text x="118.7" y="26" font-size="6.8" text-anchor="start" fill="#151515" font-weight="normal" textLength="14.6" lengthAdjust="spacingAndGlyphs" >Mesh</text><text x="149" y="26" font-size="6.8" text-anchor="start" fill="#151515" font-weight="normal" textLength="59.3" lengthAdjust="spacingAndGlyphs" >Setup with iconMesh</text><text x="224" y="26" font-size="6.8" text-anchor="start" fill="#151515" font-weight="normal" textLength="71" lengthAdjust="spacingAndGlyphs" >Setup with Ennova Mesh</text><text x="310" y="26" font-size="6.8" text-anchor="start" fill="#151515" font-weight="normal" textLength="35" lengthAdjust="spacingAndGlyphs" >postProcess</text><text x="361.5" y="26" font-size="6.8" text-anchor="start" fill="#151515" font-weight="normal" textLength="35.1" lengthAdjust="spacingAndGlyphs" >Applications</text><rect x="12.7" y="30.7" width="44.3" height="49.3" rx="4" fill="url(#ggrp)" stroke="#c4c8ce" stroke-width="0.7"/><path d="M13.1 70.7H56.6V76Q56.6 80 53 80H16.7Q13.1 80 13.1 76Z" fill="#d2d5da"/><text x="34.9" y="77.3" font-size="6.6" text-anchor="middle" fill="#333" font-weight="normal" textLength="13.5" lengthAdjust="spacingAndGlyphs" >View</text><rect x="59.7" y="30.7" width="60.6" height="49.3" rx="4" fill="url(#ggrp)" stroke="#c4c8ce" stroke-width="0.7"/><path d="M60.1 70.7H119.9V76Q119.9 80 116.3 80H63.7Q60.1 80 60.1 76Z" fill="#d2d5da"/><text x="90" y="77.3" font-size="6.6" text-anchor="middle" fill="#333" font-weight="normal" textLength="20.5" lengthAdjust="spacingAndGlyphs" >Display</text><rect x="123.8" y="30.7" width="60.5" height="49.3" rx="4" fill="url(#ggrp)" stroke="#c4c8ce" stroke-width="0.7"/><path d="M124.2 70.7H183.9V76Q183.9 80 180.3 80H127.8Q124.2 80 124.2 76Z" fill="#d2d5da"/><text x="154.1" y="77.3" font-size="6.6" text-anchor="middle" fill="#333" font-weight="normal" textLength="20" lengthAdjust="spacingAndGlyphs" >Mesher</text><rect x="187" y="30.7" width="67.3" height="49.3" rx="4" fill="url(#ggrp)" stroke="#c4c8ce" stroke-width="0.7"/><path d="M187.4 70.7H253.9V76Q253.9 80 250.3 80H191Q187.4 80 187.4 76Z" fill="#d2d5da"/><text x="220.7" y="77.3" font-size="6.6" text-anchor="middle" fill="#333" font-weight="normal" textLength="38.5" lengthAdjust="spacingAndGlyphs" >Mesh settings</text><rect x="257.6" y="30.7" width="56.7" height="49.3" rx="4" fill="url(#ggrp)" stroke="#c4c8ce" stroke-width="0.7"/><path d="M258 70.7H313.9V76Q313.9 80 310.3 80H261.6Q258 80 258 76Z" fill="#d2d5da"/><text x="286" y="77.3" font-size="6.6" text-anchor="middle" fill="#333" font-weight="normal" textLength="52" lengthAdjust="spacingAndGlyphs" >Geometry to Mesh</text><rect x="317.6" y="30.7" width="108.6" height="49.3" rx="4" fill="url(#ggrp)" stroke="#c4c8ce" stroke-width="0.7"/><path d="M318 70.7H425.8V76Q425.8 80 422.2 80H321.6Q318 80 318 76Z" fill="#d2d5da"/><text x="371.9" y="77.3" font-size="6.6" text-anchor="middle" fill="#333" font-weight="normal" textLength="26.5" lengthAdjust="spacingAndGlyphs" >Selection</text><rect x="429.8" y="30.7" width="132" height="49.3" rx="4" fill="url(#ggrp)" stroke="#c4c8ce" stroke-width="0.7"/><path d="M430.2 70.7H561.4V76Q561.4 80 557.8 80H433.8Q430.2 80 430.2 76Z" fill="#d2d5da"/><text x="495.8" y="77.3" font-size="6.6" text-anchor="middle" fill="#333" font-weight="normal" textLength="27.5" lengthAdjust="spacingAndGlyphs" >Mesh Edit</text><rect x="564.7" y="30.7" width="104.9" height="49.3" rx="4" fill="url(#ggrp)" stroke="#c4c8ce" stroke-width="0.7"/><path d="M565.1 70.7H669.2V76Q669.2 80 665.6 80H568.7Q565.1 80 565.1 76Z" fill="#d2d5da"/><text x="617.2" y="77.3" font-size="6.6" text-anchor="middle" fill="#333" font-weight="normal" textLength="17" lengthAdjust="spacingAndGlyphs" >Check</text><circle cx="22.8" cy="11.3" r="10.2" fill="#eef1f6" stroke="#9fb0c8" stroke-width="0.8"/><path d="M13.5 11.5L17 5.5H24L27 10L24 17H17Z" fill="#5c9cf5"/><path d="M17 17L20 11.5H27L24 17Z" fill="#3a78e0"/><path d="M24 5.5L27 10L30 8L28 5Z" fill="#cfe0f8"/><path d="M23.5 5.5H17L13.6 11.5L17 17.3H23M13.6 11.5H21" stroke="#000" stroke-width="1.5" fill="none"/><path d="M23 9L26 17L28.5 12.5L30 17L32.5 11" stroke="#111" stroke-width="1.3" fill="none"/><g transform="translate(44.0 6.0)"><path d="M-4 -1L-2 -3.5H3L4.5 3.5H-3Z" fill="#f2b630"/><path d="M-3 -3.8L1 -4.6L3 -1L-1 0Z" fill="#fff" stroke="#ccc" stroke-width="0.3"/><path d="M-4.5 -0.5L3 1L4.5 3.8H-3Z" fill="#f6cc58"/></g><g transform="translate(56.9 6.0)"><rect x="-3.8" y="-4" width="7.6" height="8" fill="#2c2f38"/><rect x="-2" y="-4" width="4" height="3.2" fill="#e8e8ee"/><rect x="-2.2" y="1" width="4.4" height="3" fill="#8a8f9c"/></g><g transform="translate(69.5 6.0)"><rect x="-3.8" y="-4" width="6" height="8" fill="#2c2f38"/><rect x="-2.2" y="-4" width="3" height="3" fill="#e8e8ee"/><path d="M2 -3.5L4 -4.5M3 -1L4.5 -1.5" stroke="#555" stroke-width="0.8"/></g><g transform="translate(82.5 6.3)"><path d="M-4.5 0.5L-1 -3V-1Q4 -1.5 4.5 3Q2 0.5 -1 1.5V3.5Z" fill="#1e78c8"/></g><g transform="translate(95.1 6.3)"><path d="M4.5 0.5L1 -3V-1Q-4 -1.5 -4.5 3Q-2 0.5 1 1.5V3.5Z" fill="#1e78c8"/></g><g transform="translate(108.4 6.0)"><rect x="-3.3" y="-4.3" width="6" height="8.6" fill="#f4f4f6" stroke="#444" stroke-width="0.8" stroke-dasharray="1.5 1.2"/><path d="M4 -2V3" stroke="#888" stroke-width="0.8"/></g><path d="M116.8 4H122.2L119.5 8.2Z" fill="#1e78c8"/><path d="M116.8 3H122.2" stroke="#1e78c8" stroke-width="0.9"/><g transform="translate(21.9 42.0)"><path d="M-4.6 0L0 -4.4L4.6 0M-3.3 -0.8V4.2H3.3V-0.8" fill="#fff" stroke="#444" stroke-width="0.9"/><rect x="-1" y="1.2" width="2" height="3" fill="#888"/></g><path d="M29.0 40.9H33.2L31.1 43.3Z" fill="#111"/><g transform="translate(42.4 42.0)"><path d="M-3 -4.5V2.5L-5 4.5M-3 2.5H5" stroke="#222" stroke-width="0.9" fill="none"/><circle cx="1.5" cy="2" r="1.7" fill="#fff" stroke="#222" stroke-width="0.8"/><circle cx="-3" cy="-4.3" r="0.9" fill="#222"/><circle cx="-5" cy="4.5" r="0.9" fill="#222"/></g><path d="M50.1 40.9H54.3L52.2 43.3Z" fill="#111"/><g transform="translate(21.9 62.0)"><path d="M-1.8 -5.5H1.8V-1.8H5.5V1.8H1.8V5.5H-1.8V1.8H-5.5V-1.8H-1.8Z" fill="#f2f2f2" stroke="#444" stroke-width="1" stroke-linejoin="round"/><circle r="1" fill="#666"/></g><g transform="translate(42.4 62.0)"><circle cx="-1.2" cy="-1.5" r="3.3" fill="#f4f6fa" stroke="#666" stroke-width="0.9"/><path d="M1.2 1.2L4.6 4.8" stroke="#333" stroke-width="1.6"/></g><path d="M50.1 60.9H54.3L52.2 63.3Z" fill="#111"/><g transform="translate(69.5 42.0)"><path d="M0 -6.2L5.8 -3.2V3L0 6.2L-5.8 3V-3.2Z" fill="#4a4a4a" stroke="#222" stroke-width="0.7"/><path d="M-5.8 -3.2L0 -0.2L5.8 -3.2M0 -0.2V6.2" stroke="#777" stroke-width="0.6" fill="none"/><path d="M-3 -1.5L-3 3.5M3 -1.5V3.5M-2.5 -3.5L2.5 -3.5" stroke="#888" stroke-width="0.5"/></g><path d="M76.5 40.9H80.7L78.6 43.3Z" fill="#111"/><g transform="translate(89.8 42.0)"><path d="M0 -5.8C3.4 -5.8 4.4 -3 3.6 -1C2.8 0.8 2 1.5 1.8 3.2H-1.8C-2 1.5 -2.8 0.8 -3.6 -1C-4.4 -3 -3.4 -5.8 0 -5.8Z" fill="#e2e2e2" stroke="#666" stroke-width="0.8"/><rect x="-1.7" y="3.4" width="3.4" height="2.4" fill="#888"/></g><path d="M97.1 40.9H101.3L99.2 43.3Z" fill="#111"/><g transform="translate(110.8 42.0)"><circle cx="0" cy="-5" r="1.1" fill="#5aa0f0"/><circle cx="0" cy="5" r="1.1" fill="#5aa0f0"/><circle cx="-5" cy="0" r="1.1" fill="#5aa0f0"/><circle cx="5" cy="0" r="1.1" fill="#5aa0f0"/><path d="M-3.6 -6V6M3.6 -6V6M-6 -3.6H6M-6 3.6H6" stroke="#333" stroke-width="0.9"/><rect x="-3.5" y="-3.5" width="7" height="7" fill="#ffa050"/></g><g transform="translate(69.5 62.0)"><path d="M0 -6.2L5.8 -3.2V3L0 6.2L-5.8 3V-3.2Z" fill="#f0883a" stroke="#222" stroke-width="0.7"/><path d="M-5.8 -3.2L0 -0.2L5.8 -3.2M0 -0.2V6.2" stroke="#222" stroke-width="0.6" fill="none"/><path d="M-5.8 -3.2L0 6.2M0 -6.2L0 -0.2M-3 -4.7L3 -1.7M5.8 -3.2L0 6.2M-2.5 1L-1 4" stroke="#222" stroke-width="0.5" fill="none"/></g><path d="M76.5 60.9H80.7L78.6 63.3Z" fill="#111"/><g transform="translate(90.0 62.0)"><path d="M0 -6.2L5.8 -3.2V3L0 6.2L-5.8 3V-3.2Z" fill="#f6f6f6" stroke="#222" stroke-width="0.7"/><path d="M-1.5 -4L2.5 -2V4L-1.5 2.5Z" fill="#f0883a"/><path d="M-5.8 -3.2L0 -0.2L5.8 -3.2M0 -0.2V6.2M-5.8 3L0 -0.2M5.8 3L0 -6.2" stroke="#222" stroke-width="0.5" fill="none"/></g><g transform="translate(110.8 62.0)"><circle cx="0" cy="-5" r="1.1" fill="#5aa0f0"/><circle cx="0" cy="5" r="1.1" fill="#5aa0f0"/><circle cx="-5" cy="0" r="1.1" fill="#5aa0f0"/><circle cx="5" cy="0" r="1.1" fill="#5aa0f0"/><path d="M-3.6 -6V6M3.6 -6V6M-6 -3.6H6M-6 3.6H6" stroke="#333" stroke-width="0.9"/><rect x="-3.5" y="-3.5" width="7" height="7" fill="#ffa050"/></g><g transform="translate(133.0 42.0)"><path d="M-6 -1.5L-2 -5.5L1 -3L4 -5.5L6 -2V5.5H-6Z" fill="#3e8fe0"/><path d="M-3.5 -1L-0.5 -5.8L3.5 -4L4.5 -0.5L1 2Z" fill="#bcbcbc" stroke="#555" stroke-width="0.4"/><path d="M-6 5.5L-1.5 1.5L0 3L1.5 1.5L6 5.5Z" fill="#ffa040"/><path d="M-6 0L-3 2L-6 4M6 0L3 2L6 4" stroke="#1c4c8c" stroke-width="0.5" fill="none"/></g><path d="M140.6 40.9H144.8L142.7 43.3Z" fill="#111"/><g transform="translate(153.7 42.0)"><rect x="-6" y="-6" width="12" height="12" fill="#3a78d8"/><rect x="-0.5" y="-6" width="6.5" height="9" fill="#f09038"/><path d="M-3 -6V6M0 -6V6M3 -6V6" stroke="#1a3a7a" stroke-width="0.6"/><path d="M-6 -3.5H6M-6 -0.5H6M-6 2.5H6" stroke="#1a3a7a" stroke-width="0.9"/></g><g transform="translate(169.7 42.0)"><rect x="-6" y="-6" width="12" height="12" fill="#c8ccd4"/><rect x="-1" y="-3" width="6.5" height="6.5" fill="#4a7ae0"/><path d="M-4 -6V6M-2 -6V6M0 -6V6M2 -6V6M4 -6V6" stroke="#444a58" stroke-width="0.45"/><path d="M-6 -3.5H6M-6 -0.5H6M-6 2.5H6" stroke="#444a58" stroke-width="0.8"/></g><g transform="translate(133.0 62.0)"><path d="M-6 -4.5H1.5M-2.2 -4.5V-1" stroke="#2a78d8" stroke-width="1.6"/><path d="M-4.5 4.8L1 -3.8L6 4.8Z" fill="#ffb070" stroke="#c86a20" stroke-width="0.6"/></g><g transform="translate(153.7 62.0)"><path d="M-6 -3Q-3 -6 0 -3.5Q3 -6 6 -3.5V4.5Q3 2 0 4.5Q-3 2 -6 5Z" fill="#f4f4f4" stroke="#777" stroke-width="0.6"/><path d="M-3 -4.6V3.6M0 -3.5V4.5M3 -4.6V3.4M-6 -0.5Q-3 -3.4 0 -1Q3 -3.4 6 -1M-6 2Q-3 -0.8 0 1.6Q3 -0.8 6 1.8" stroke="#777" stroke-width="0.5" fill="none"/></g><g transform="translate(169.7 62.0)"><rect x="-6" y="-6" width="11.5" height="12" fill="#3c5a3c"/><path d="M-6 -3H5.5M-6 0H5.5M-3 -6V6M0 -6V6M3 -6V6" stroke="#a8c0a8" stroke-width="0.4"/><path d="M-3.5 3L1 -4.5L4.5 3Z" fill="#f09038"/><path d="M-5 3.5Q0 1.5 5 4V6H-5Z" fill="#e8e8e8"/></g><path d="M177.1 60.9H181.3L179.2 63.3Z" fill="#111"/><g transform="translate(196.5 42.0)"><circle cx="-4" cy="-4" r="1.3" fill="#e8a0b0"/><circle cx="0" cy="-4" r="1.3" fill="#c02020"/><circle cx="4" cy="-4" r="1.3" fill="#30a0a0"/><circle cx="-4" cy="0" r="1.3" fill="#e8a0b0"/><circle cx="0" cy="0" r="1.3" fill="#f0a030"/><circle cx="4" cy="0" r="1.3" fill="#3060d0"/><circle cx="-4" cy="4" r="1.3" fill="#e8a0b0"/><circle cx="0" cy="4" r="1.3" fill="#3060d0"/><circle cx="4" cy="4" r="1.3" fill="#c04040"/><path d="M-6 -2H6M-6 2H6M-2 -6V6M2 -6V6" stroke="#555" stroke-width="0.4"/></g><g transform="translate(212.8 42.0)"><path d="M-6 -6L5 6M6 -6L-5 6M-6 -5Q0 -1 6 -5" stroke="#222" stroke-width="0.8" fill="none"/><path d="M-3.5 3.5L0 -4L3.5 3.5Z" fill="#a0a8e8" stroke="#334" stroke-width="0.5"/><circle cx="4" cy="4" r="2.1" fill="none" stroke="#e8402a" stroke-width="1.4"/></g><g transform="translate(229.2 42.0)"><rect x="-5.5" y="-5.5" width="5" height="6" fill="#f2f2f2" stroke="#bbb" stroke-width="0.7"/><rect x="-2.5" y="-3" width="5" height="6" fill="#f2f2f2" stroke="#bbb" stroke-width="0.7"/><rect x="0.5" y="-0.5" width="5" height="6" fill="#f2f2f2" stroke="#bbb" stroke-width="0.7"/></g><g transform="translate(245.1 42.0)"><path d="M0 -6.2L5.6 -3.1V3.1L0 6.2L-5.6 3.1V-3.1Z" fill="#d8d8d8" stroke="#444" stroke-width="1"/><circle r="3.2" fill="#ffa050"/><circle cx="-0.8" cy="-0.8" r="1.4" fill="#ffd0a0"/></g><g transform="translate(196.5 62.0)"><rect x="-6" y="-6" width="12" height="12" fill="#5a5a5a"/><path d="M-4 -6V6M-2 -6V6M0 -6V6M2 -6V6M4 -6V6" stroke="#d8d8d8" stroke-width="0.5"/><path d="M-6 -3.5H6M-6 -0.5H6M-6 2.5H6" stroke="#e4e4e4" stroke-width="0.9"/></g><g transform="translate(212.8 62.0)"><path d="M-6 -6L5 6M6 -6L-5 6M-6 -5Q0 -1 6 -5" stroke="#222" stroke-width="0.8" fill="none"/><path d="M-3.5 3.5L0 -4L3.5 3.5Z" fill="#a0a8e8" stroke="#334" stroke-width="0.5"/><circle cx="4" cy="4" r="2.1" fill="none" stroke="#e8402a" stroke-width="1.4"/></g><g transform="translate(229.2 62.0)"><path d="M-4.8 -6V6" stroke="#f02020" stroke-width="1"/><path d="M-4.8 -5H0" stroke="#f02020" stroke-width="0.8"/><circle cx="-4.8" cy="-5.3" r="1" fill="#f02020"/><path d="M1.5 -3.5L5.5 -1V3.5L1.5 6L-2.5 3.5V-1Z" fill="#e4e4ec" stroke="#444" stroke-width="0.7"/><circle cx="0.5" cy="1.8" r="1.6" fill="#2040e0"/><path d="M-2.5 -1L1.5 1.2L5.5 -1M1.5 1.2V6" stroke="#444" stroke-width="0.5" fill="none"/></g><g transform="translate(245.1 62.0)"><path d="M-5.5 -4L5.5 -5.5V4L-5.5 5.5Z" fill="#ececec" stroke="#555" stroke-width="0.8"/><rect x="-1.3" y="-4.8" width="2.6" height="9.8" fill="#ffa860"/><path d="M-5.5 0.5H-1.3M1.3 -0.5H5.5" stroke="#555" stroke-width="0.6"/></g><g transform="translate(273.5 49.5)"><path d="M-9.5 -4H-3L0 -7.5L3 -4L6 -7L9.5 -4V6.5H-9.5Z" fill="#4a9ae8"/><path d="M-4.5 -2.5L-0.5 -7.5H1L5 -6L7 -2L3 2L-1.5 1.5Z" fill="#cfcfcf" stroke="#666" stroke-width="0.45"/><path d="M0.3 -7.5V2M-4.5 -2.5L3 2M5 -6L-1.5 1.5" stroke="#666" stroke-width="0.45"/><path d="M-9.5 6.5L-2 2L0 4L2 2L9.5 6.5Z" fill="#ffa040"/><path d="M-9.5 -1L-5 2L-9.5 4M9.5 -1L5 2L9.5 4M-5 2L-2 2M5 2L2 2" stroke="#2a5a9a" stroke-width="0.6" fill="none"/><path d="M-4 8.2Q0 6.8 3 9.6" stroke="#e81818" stroke-width="1.5" fill="none"/><path d="M4.6 10.6L1.4 10.4L3.8 7.6Z" fill="#e81818"/></g><g transform="translate(298.6 49.5)"><path d="M-9.5 -4H-3L0 -7.5L3 -4L6 -7L9.5 -4V6.5H-9.5Z" fill="#4a9ae8"/><path d="M-4.5 -2.5L-0.5 -7.5H1L5 -6L7 -2L3 2L-1.5 1.5Z" fill="#cfcfcf" stroke="#666" stroke-width="0.45"/><path d="M0.3 -7.5V2M-4.5 -2.5L3 2M5 -6L-1.5 1.5" stroke="#666" stroke-width="0.45"/><path d="M-9.5 6.5L-2 2L0 4L2 2L9.5 6.5Z" fill="#ffa040"/><path d="M-9.5 -1L-5 2L-9.5 4M9.5 -1L5 2L9.5 4M-5 2L-2 2M5 2L2 2" stroke="#2a5a9a" stroke-width="0.6" fill="none"/><path d="M4 8.2Q0 6.8 -3 9.6" stroke="#e81818" stroke-width="1.5" fill="none"/><path d="M-4.6 10.6L-1.4 10.4L-3.8 7.6Z" fill="#e81818"/></g><g transform="translate(327.3 42.0)"><path d="M-2.8 -5.5V3.8L-0.6 1.8L1.2 5.4L2.8 4.6L1 1.2L3.8 1Z" fill="#fff" stroke="#222" stroke-width="0.8"/></g><path d="M333.9 40.9H338.1L336.0 43.3Z" fill="#111"/><g transform="translate(347.6 42.0)"><rect x="-5" y="-5" width="10" height="10" fill="#c6c6c6" stroke="#222" stroke-width="1.5"/></g><g transform="translate(363.7 42.0)"><rect x="-4.8" y="-4.8" width="9.6" height="9.6" fill="#c6c6c6" stroke="#555" stroke-width="0.8"/></g><g transform="translate(379.7 42.0)"><circle cx="0" cy="-5" r="1.1" fill="#5aa0f0"/><circle cx="0" cy="5" r="1.1" fill="#5aa0f0"/><circle cx="-5" cy="0" r="1.1" fill="#5aa0f0"/><circle cx="5" cy="0" r="1.1" fill="#5aa0f0"/><path d="M-3.6 -6V6M3.6 -6V6M-6 -3.6H6M-6 3.6H6" stroke="#333" stroke-width="0.9"/><rect x="-3.5" y="-3.5" width="7" height="7" fill="#ffa050"/></g><g transform="translate(396.0 42.0)"><circle cx="0" cy="-5" r="1.1" fill="#5aa0f0"/><circle cx="0" cy="5" r="1.1" fill="#5aa0f0"/><circle cx="-5" cy="0" r="1.1" fill="#5aa0f0"/><circle cx="5" cy="0" r="1.1" fill="#5aa0f0"/><path d="M-3.6 -6V6M3.6 -6V6M-6 -3.6H6M-6 3.6H6" stroke="#333" stroke-width="0.9"/><rect x="-3.5" y="-3.5" width="7" height="7" fill="#ffa050"/></g><g transform="translate(411.6 42.0)"><rect x="-1" y="-5" width="6" height="6" fill="#f6f6fa" stroke="#aaa" stroke-width="0.6"/><rect x="-4.5" y="-1.8" width="6.5" height="6.5" fill="#ffa860"/></g><path d="M419.3 40.9H423.5L421.4 43.3Z" fill="#111"/><g transform="translate(326.8 62.0)"><rect x="-4.8" y="-4.5" width="9.4" height="9" fill="#f8f8f8" stroke="#222" stroke-width="0.9" stroke-dasharray="1.6 1.1"/><circle cx="-4.8" cy="4.5" r="0.9" fill="#222"/><circle cx="4.6" cy="-4.5" r="0.9" fill="#222"/></g><path d="M333.9 60.9H338.1L336.0 63.3Z" fill="#111"/><g transform="translate(347.6 62.0)"><rect x="-4.5" y="-4.5" width="9" height="9" fill="#c4c4c4" stroke="#222" stroke-width="0.9"/><circle cx="-4.5" cy="-4.5" r="1" fill="#111"/><circle cx="-4.5" cy="4.5" r="1" fill="#111"/><circle cx="4.5" cy="-4.5" r="1" fill="#111"/><circle cx="4.5" cy="4.5" r="1" fill="#111"/></g><g transform="translate(363.7 62.0)"><path d="M-5 4.5L-2.5 1L2 -0.5L5 -5" stroke="#333" stroke-width="0.9" fill="none"/><circle cx="-5" cy="4.5" r="1.2" fill="#fff" stroke="#333" stroke-width="0.7"/><circle cx="-2.5" cy="1" r="1.1" fill="#a8a830"/><circle cx="2" cy="-0.5" r="1" fill="#555"/><circle cx="5" cy="-5" r="1" fill="#fff" stroke="#333" stroke-width="0.6"/></g><g transform="translate(379.7 62.0)"><circle cx="0" cy="-5" r="1.1" fill="#5aa0f0"/><circle cx="0" cy="5" r="1.1" fill="#5aa0f0"/><circle cx="-5" cy="0" r="1.1" fill="#5aa0f0"/><circle cx="5" cy="0" r="1.1" fill="#5aa0f0"/><path d="M-3.6 -6V6M3.6 -6V6M-6 -3.6H6M-6 3.6H6" stroke="#333" stroke-width="0.9"/><rect x="-3.5" y="-3.5" width="7" height="7" fill="#ffa050"/></g><g transform="translate(396.0 62.0)"><circle cx="0" cy="-5" r="1.1" fill="#5aa0f0"/><circle cx="0" cy="5" r="1.1" fill="#5aa0f0"/><circle cx="-5" cy="0" r="1.1" fill="#5aa0f0"/><circle cx="5" cy="0" r="1.1" fill="#5aa0f0"/><path d="M-3.6 -6V6M3.6 -6V6M-6 -3.6H6M-6 3.6H6" stroke="#333" stroke-width="0.9"/><rect x="-3.5" y="-3.5" width="7" height="7" fill="#ffa050"/><circle cx="3.8" cy="4.2" r="1.7" fill="none" stroke="#e8402a" stroke-width="1.2"/></g><g transform="translate(411.6 62.0)"><path d="M-1.5 -5.5H5.5V2.5L3 5H-1.5Z" fill="#b0b0b0"/><path d="M3 -3L5.5 -5.5V2.5L3 5Z" fill="#8a8a8a"/><rect x="-5" y="-3" width="8" height="8" fill="#ffc010"/><path d="M-5 -3L-2.5 -5.5H5.5L3 -3Z" fill="#ffe080" opacity="0.7"/></g><path d="M419.3 60.9H423.5L421.4 63.3Z" fill="#111"/><g transform="translate(438.9 42.0)"><path d="M-2.5 -5.5L5.5 -2L3 5.5L-5.5 1.5Z" fill="#c8c8c8" stroke="#222" stroke-width="0.9"/><path d="M-5.5 1.5L5.5 -2" stroke="#e82020" stroke-width="0.9"/><path d="M-2.5 -5.5L3 5.5" stroke="#222" stroke-width="0.6"/><circle cx="-5" cy="-3.6" r="0.8" fill="#e82020"/><circle cx="5.3" cy="3.2" r="0.8" fill="#e82020"/></g><g transform="translate(455.0 42.0)"><rect x="-5.3" y="-5.3" width="10.6" height="10.6" fill="#c8c8c8" stroke="#444" stroke-width="0.8"/><path d="M0 -5.3V5.3M-5.3 0H5.3" stroke="#e82020" stroke-width="1"/></g><g transform="translate(471.3 42.0)"><path d="M-5.5 -5L-1 -1.5V5.5H-5.5ZM5.5 -5L1 -1.5V5.5H5.5Z" fill="#b8bcc4" stroke="#777" stroke-width="0.5"/><path d="M-4 -5.5L0 -0.5L4 -5.5" stroke="#444" stroke-width="1" fill="none"/><path d="M0 -0.5V3.5" stroke="#444" stroke-width="1.4"/></g><g transform="translate(487.7 42.3)"><path d="M-5 -3.2L2.5 -5.5L6 -3.2L-1.5 -0.8Z" fill="#e8e8e8" stroke="#222" stroke-width="1"/><path d="M-6 1.5L2 -0.8L6 1.8L-2.5 5Z" fill="#cfcfcf" stroke="#222" stroke-width="1"/><path d="M-2 -4L2 -1.8M-3 0.6L1.5 3.4M-0.5 0L4 2.6" stroke="#222" stroke-width="0.7"/><circle cx="-5.6" cy="1.2" r="1" fill="#e00"/></g><g transform="translate(503.8 42.0)"><path d="M-5.5 -4.5L1.5 -5.5L3.5 -1L-3.5 0.5Z" fill="#9a9a9a" stroke="#333" stroke-width="0.7"/><path d="M-2 0.5L5 -1L5.5 4.5L-1 5.5Z" fill="#e0e0e0" stroke="#333" stroke-width="0.7"/><path d="M4 -4.5Q6 -2 4.8 0" stroke="#e82020" stroke-width="0.8" fill="none"/></g><g transform="translate(519.8 42.0)"><path d="M-6.5 -5.5L6.5 2M6.5 -5.5L-6.5 2M-5 5.5L5 -1M5 5.5L-5 -1" stroke="#222" stroke-width="0.8" fill="none"/><circle cx="0" cy="-1.8" r="1.1" fill="#111"/><circle cx="0" cy="2.2" r="1.1" fill="#111"/><path d="M0 -1.8V2.2" stroke="#e8202a" stroke-width="0.8"/></g><g transform="translate(536.0 42.0)"><path d="M-5.5 -3L5.5 -5.5L3 1L-3.5 2.5Z" fill="#f0f0f0" stroke="#333" stroke-width="0.8"/><path d="M-4.5 0L5 -2L2 5.5L-2.5 4.5Z" fill="#dcdcdc" stroke="#333" stroke-width="0.8"/></g><g transform="translate(552.1 42.0)"><rect x="-5.3" y="-5.3" width="10.6" height="10.6" fill="#b0b0b0" stroke="#222" stroke-width="0.9"/><path d="M0 -5.3V5.3M-5.3 0H5.3M-5.3 -5.3L5.3 5.3M5.3 -5.3L-5.3 5.3" stroke="#222" stroke-width="0.6"/></g><g transform="translate(438.9 62.0)"><rect x="-5.3" y="-5.3" width="10" height="10" fill="#c4c4c4" stroke="#444" stroke-width="0.9"/><path d="M2.5 2.5L6 6M6 2.5L2.5 6" stroke="#e82020" stroke-width="0.9"/></g><g transform="translate(455.0 62.0)"><path d="M-4.5 -5.5L5.5 -3L3.5 5.5L-5.5 2.5Z" fill="#d8d8d8" stroke="#333" stroke-width="0.8"/><circle cx="-1" cy="-1.5" r="1.8" fill="#f4f4f4" stroke="#444" stroke-width="0.6"/><rect x="0.5" y="1" width="2.8" height="2.4" fill="#aaa" stroke="#444" stroke-width="0.5"/></g><g transform="translate(471.3 62.0)"><rect x="-4.5" y="-4.5" width="9" height="9" fill="#c4c4c4" stroke="#222" stroke-width="0.9"/><circle cx="-4.5" cy="-4.5" r="1" fill="#111"/><circle cx="-4.5" cy="4.5" r="1" fill="#111"/><circle cx="4.5" cy="-4.5" r="1" fill="#111"/><circle cx="4.5" cy="4.5" r="1" fill="#111"/><path d="M-5.8 -3.5Q-7.2 0 -5.8 3.5" stroke="#e82020" stroke-width="0.9" fill="none"/></g><g transform="translate(487.7 62.0)"><path d="M-6.5 -5.5L6.5 2M6.5 -5.5L-6.5 2M-5 5.5L5 -1M5 5.5L-5 -1" stroke="#222" stroke-width="0.8" fill="none"/><circle cx="0" cy="-1.8" r="1.1" fill="#111"/><circle cx="0" cy="2.2" r="1.1" fill="#111"/><path d="M1 3L4.5 -3" stroke="#e8202a" stroke-width="0.9"/></g><g transform="translate(503.8 62.0)"><rect x="-4.5" y="-4.5" width="9" height="9" fill="#c4c4c4" stroke="#222" stroke-width="0.9"/><circle cx="-4.5" cy="-4.5" r="1" fill="#111"/><circle cx="-4.5" cy="4.5" r="1" fill="#111"/><circle cx="4.5" cy="-4.5" r="1" fill="#111"/><circle cx="4.5" cy="4.5" r="1" fill="#111"/></g><g transform="translate(519.8 62.0)"><path d="M-4.5 -5.5L5.5 -3.5L4 4.5L-5.5 3Z" fill="#d0d0d0" stroke="#333" stroke-width="0.9"/><path d="M4 4.5L5.8 2.2" stroke="#111" stroke-width="1.4"/><circle cx="4.2" cy="5.2" r="0.7" fill="#e82020"/></g><g transform="translate(536.0 62.0)"><path d="M-5.5 -2.5L3.5 -5.5L5.5 3L-3 5.5Z" fill="#d4d4d4" stroke="#333" stroke-width="0.8"/><path d="M-3 1.5L0.5 -3L3.5 1Z" fill="none" stroke="#e82020" stroke-width="0.9"/></g><g transform="translate(552.1 62.0)"><rect x="-4.5" y="-4.5" width="9" height="9" fill="#c4c4c4" stroke="#222" stroke-width="0.9"/><circle cx="-4.5" cy="-4.5" r="1" fill="#111"/><circle cx="-4.5" cy="4.5" r="1" fill="#111"/><circle cx="4.5" cy="-4.5" r="1" fill="#111"/><circle cx="4.5" cy="4.5" r="1" fill="#111"/></g><g transform="translate(577.2 51.8)"><path d="M-2 -6.5Q-5 -4 -3.5 0M3.5 -6.5Q6 -3 3.5 -0.5" stroke="#444" stroke-width="0.9" fill="none"/><circle cx="-2" cy="-6.8" r="0.9" fill="#333"/><circle cx="3.5" cy="-6.8" r="0.9" fill="#333"/><circle cx="-2.5" cy="1.5" r="4" fill="none" stroke="#4a90d0" stroke-width="0.9"/><circle cx="2.5" cy="0.5" r="3.2" fill="none" stroke="#4a90d0" stroke-width="0.9"/><circle cx="-4.5" cy="7" r="1.4" fill="#333"/></g><path d="M587.3 50.4H591.5L589.4 52.8Z" fill="#111"/><g transform="translate(603.1 51.5)"><path d="M-8 7V-4.5L7.5 7Z" fill="#f4b070" stroke="#c87028" stroke-width="0.8"/><path d="M-5.5 4.5V1L-1 4.5Z" fill="#fff"/><path d="M-2.5 5.5L2.5 -4M5.5 5.5L1 -4" stroke="#f6f6f6" stroke-width="1.5"/><path d="M-2.5 5.5L2.5 -4M5.5 5.5L1 -4" stroke="#999" stroke-width="0.4"/><circle cx="-1" cy="-5.3" r="2.1" fill="#fff" stroke="#1a80e0" stroke-width="1.3"/><circle cx="5.2" cy="-5.3" r="2.1" fill="#fff" stroke="#1a80e0" stroke-width="1.3"/></g><g transform="translate(622.0 42.0)"><rect x="-5.5" y="-5.5" width="11" height="11" fill="#f4f4f4" stroke="#8a8a8a" stroke-width="0.7"/><path d="M-1.8 -5.5V5.5M1.8 -5.5V5.5M-5.5 -2.75H5.5M-5.5 0H5.5M-5.5 2.75H5.5" stroke="#8a8a8a" stroke-width="0.7"/><rect x="-1.6" y="-2.6" width="3.2" height="2.4" fill="#e8402a"/><rect x="2" y="-5.3" width="3.3" height="2.4" fill="#2a8ae0"/></g><g transform="translate(638.2 42.0)"><rect x="-5.5" y="-5.5" width="11" height="11" fill="#f4f4f4" stroke="#8a8a8a" stroke-width="0.7"/><path d="M-1.8 -5.5V5.5M1.8 -5.5V5.5M-5.5 -2.75H5.5M-5.5 0H5.5M-5.5 2.75H5.5" stroke="#8a8a8a" stroke-width="0.7"/><rect x="-1.6" y="-2.6" width="3.2" height="2.4" fill="#e8402a"/><rect x="2" y="-5.3" width="3.3" height="2.4" fill="#2a8ae0"/><text x="3.6" y="6.6" font-size="8" font-weight="bold" fill="#f0503a" text-anchor="middle">V</text></g><g transform="translate(654.2 42.0)"><rect x="-5.5" y="-5.5" width="11" height="11" fill="#f4f4f4" stroke="#8a8a8a" stroke-width="0.7"/><path d="M-1.8 -5.5V5.5M1.8 -5.5V5.5M-5.5 -2.75H5.5M-5.5 0H5.5M-5.5 2.75H5.5" stroke="#8a8a8a" stroke-width="0.7"/><rect x="-1.6" y="-2.6" width="3.2" height="2.4" fill="#e8402a"/><rect x="2" y="-5.3" width="3.3" height="2.4" fill="#2a8ae0"/><text x="3.6" y="6.6" font-size="8" font-weight="bold" fill="#f0503a" text-anchor="middle">D</text></g><g transform="translate(622.2 62.0)"><circle r="5.6" fill="#f6f6f6" stroke="#c4c4c4" stroke-width="0.8"/><circle cx="-2" cy="-1.5" r="0.7" fill="#aaa"/><circle cx="2" cy="-1.5" r="0.7" fill="#aaa"/><path d="M-2.5 3Q0 1 2.5 3" stroke="#aaa" stroke-width="0.7" fill="none"/></g><g transform="translate(638.5 62.0)"><rect x="-5.5" y="-0.5" width="3" height="6" fill="#c8c8d0" stroke="#777" stroke-width="0.4"/><rect x="-2.3" y="-5.3" width="3.6" height="10.8" fill="#e84a30"/><rect x="1.5" y="-3" width="3.6" height="8.5" fill="#2a8ae0"/></g><g transform="translate(654.5 62.0)"><path d="M-5.5 2L-1 -4.5L4 -5L5 -1L0 5.5L-5 5Z" fill="#c8c8d8" stroke="#666" stroke-width="0.6"/><path d="M-3.5 1L3 -1.5M-4 3.5L2.5 1" stroke="#f4f4f8" stroke-width="1"/><path d="M-1 -4.5L1 -6.5L4.5 -6L4 -5" fill="#555"/></g><path d="M661.9 60.9H666.1L664.0 63.3Z" fill="#111"/><rect x="10.5" y="82.3" width="166.7" height="386" fill="#fff"/><rect x="10.5" y="82.3" width="166.7" height="11.8" fill="url(#ghdr)"/><path d="M10.5 94.1H177.2" stroke="#a4a9b2" stroke-width="0.8"/><path d="M177.4 82.3V468" stroke="#c9ccd2" stroke-width="0.6"/><rect x="177.6" y="82" width="3" height="387" fill="#e4e7ec"/><text x="12.3" y="91.2" font-size="7" text-anchor="start" fill="#111" font-weight="bold" textLength="35.5" lengthAdjust="spacingAndGlyphs" >Group List</text><rect x="162.2" y="86" width="3.4" height="3.2" fill="none" stroke="#222" stroke-width="0.9"/><rect x="161" y="87.6" width="3.4" height="3.2" fill="#ddd" stroke="#222" stroke-width="0.9"/><path d="M170.6 86.3L174.6 90.3M174.6 86.3L170.6 90.3" stroke="#111" stroke-width="1.2"/><rect x="24" y="97.3" width="6.6" height="6.6" fill="#f4f4f4" stroke="#8e8f8f" stroke-width="0.7"/><path d="M25.3 100.7L26.8 102.6L29.6 98.3" stroke="#1c2a8a" stroke-width="1.1" fill="none"/><text x="34.8" y="103" font-size="7.4" font-family="'Liberation Mono',monospace" fill="#111">view</text><rect x="24" y="107.2" width="6.6" height="6.6" fill="#f4f4f4" stroke="#8e8f8f" stroke-width="0.7"/><path d="M25.3 110.7L26.8 112.6L29.6 108.2" stroke="#1c2a8a" stroke-width="1.1" fill="none"/><text x="34.8" y="113" font-size="7.4" font-family="'Liberation Mono',monospace" fill="#111">local coordinates</text><rect x="24" y="117.2" width="6.6" height="6.6" fill="#f4f4f4" stroke="#8e8f8f" stroke-width="0.7"/><path d="M16.3 118.3L19 120.6L16.3 122.9Z" fill="#fff" stroke="#9a9a9a" stroke-width="0.6"/><text x="34.8" y="122.9" font-size="7.4" font-family="'Liberation Mono',monospace" fill="#111">geometry</text><rect x="24" y="127.2" width="6.6" height="6.6" fill="#f4f4f4" stroke="#8e8f8f" stroke-width="0.7"/><path d="M25.3 130.6L26.8 132.5L29.6 128.2" stroke="#1c2a8a" stroke-width="1.1" fill="none"/><path d="M16.3 128.2L19 130.6L16.3 132.9Z" fill="#fff" stroke="#9a9a9a" stroke-width="0.6"/><text x="34.8" y="132.9" font-size="7.4" font-family="'Liberation Mono',monospace" fill="#111">mesh</text><rect x="180.3" y="82" width="490.2" height="370.5" fill="#fff" stroke="#a9adb5" stroke-width="0.7"/><g clip-path="url(#cvp)"><rect x="181" y="82.5" width="489" height="369.5" fill="url(#gbg)"/><circle cx="418" cy="640" r="252" fill="#2ab622"/><path d="M168.4 640A249.6 249.6 0 0 1 667.6 640M171 640A247 247 0 0 1 665 640M173.6 640A244.4 244.4 0 0 1 662.4 640M176.2 640A241.8 241.8 0 0 1 659.8 640M179 640A239 239 0 0 1 657 640M181.8 640A236.2 236.2 0 0 1 654.2 640M184.8 640A233.2 233.2 0 0 1 651.2 640M187.8 640A230.2 230.2 0 0 1 648.2 640M190.8 640A227.2 227.2 0 0 1 645.2 640M194 640A224 224 0 0 1 642 640M197.2 640A220.8 220.8 0 0 1 638.8 640M200.6 640A217.4 217.4 0 0 1 635.4 640M204 640A214 214 0 0 1 632 640M207.4 640A210.6 210.6 0 0 1 628.6 640M211 640A207 207 0 0 1 625 640M639.7 520.1L593.9 544.9M636.7 514.8L591.6 540.6M633.6 509.5L589.1 536.4M630.3 504.2L586.5 532.2M626.9 499.1L583.8 528.2M623.4 494L581 524.1M619.8 489L578.1 520.2M616 484.2L575.2 516.3M612.2 479.4L572.1 512.5M608.2 474.7L568.9 508.8M604.1 470.1L565.7 505.1M599.9 465.6L562.4 501.6M595.6 461.2L558.9 498.1M591.1 456.9L555.4 494.7M586.6 452.7L551.8 491.4M582 448.7L548.2 488.1M577.3 444.7L544.4 485M572.5 440.9L540.6 482M567.5 437.2L536.7 479M562.5 433.6L532.7 476.2M557.5 430.1L528.7 473.4M552.3 426.8L524.6 470.8M547 423.5L520.4 468.2M541.7 420.5L516.2 465.8M536.3 417.5L511.9 463.4M530.8 414.7L507.6 461.2M525.3 412L503.2 459M519.7 409.4L498.7 457M514 407L494.2 455.1M508.3 404.7L489.7 453.3M502.5 402.6L485.1 451.6M496.7 400.6L480.5 450M490.8 398.8L475.8 448.5M484.9 397L471.1 447.2M479 395.5L466.4 445.9M473 394.1L461.6 444.8M466.9 392.8L456.8 443.8M460.9 391.7L452 442.9M454.8 390.7L447.2 442.1M448.7 389.9L442.4 441.5M442.6 389.2L437.5 441M436.5 388.7L432.6 440.5M430.3 388.3L427.8 440.2M424.2 388.1L422.9 440.1M418 388L418 440M411.8 388.1L413.1 440.1M405.7 388.3L408.2 440.2M399.5 388.7L403.4 440.5M393.4 389.2L398.5 441M387.3 389.9L393.6 441.5M381.2 390.7L388.8 442.1M375.1 391.7L384 442.9M369.1 392.8L379.2 443.8M363 394.1L374.4 444.8M357 395.5L369.6 445.9M351.1 397L364.9 447.2M345.2 398.8L360.2 448.5M339.3 400.6L355.5 450M333.5 402.6L350.9 451.6M327.7 404.7L346.3 453.3M322 407L341.8 455.1M316.3 409.4L337.3 457M310.7 412L332.8 459M305.2 414.7L328.4 461.2M299.7 417.5L324.1 463.4M294.3 420.5L319.8 465.8M289 423.5L315.6 468.2M283.7 426.8L311.4 470.8M278.5 430.1L307.3 473.4M273.5 433.6L303.3 476.2M268.5 437.2L299.3 479M263.5 440.9L295.4 482M258.7 444.7L291.6 485M254 448.7L287.8 488.1M249.4 452.7L284.2 491.4M244.9 456.9L280.6 494.7M240.4 461.2L277.1 498.1M236.1 465.6L273.6 501.6M231.9 470.1L270.3 505.1M227.8 474.7L267.1 508.8M223.8 479.4L263.9 512.5M220 484.2L260.8 516.3M216.2 489L257.9 520.2M212.6 494L255 524.1M209.1 499.1L252.2 528.2M205.7 504.2L249.5 532.2M202.4 509.5L246.9 536.4M199.3 514.8L244.4 540.6M196.3 520.1L242.1 544.9" fill="none" stroke="#04280a" stroke-width="0.8" opacity="0.85"/><circle cx="418" cy="640" r="252" fill="none" stroke="#062a06" stroke-width="1.2"/><circle cx="418.0" cy="266.5" r="210.0" fill="url(#gsph)"/><circle cx="418.0" cy="266.5" r="210.0" fill="url(#gsph2)"/><g clip-path="url(#csph)"><use href="#mesh"/></g><circle cx="418.0" cy="266.5" r="209.6" fill="none" stroke="#0a2a0a" stroke-width="1.4" opacity="0.8"/><path d="M312 70L312 98.4A106 39.7 0 0 0 524 98.4L524 70Z" fill="url(#gcyl)"/><path d="M312 70L312 98.4M312.3 70L312.4 101.9M312.4 70L312.4 101.9M313.3 70L313.6 105.3M313.6 70L313.6 105.3M315.1 70L315.6 108.7M315.6 70L315.6 108.7M317.6 70L318.4 112M318.4 70L318.4 112M320.9 70L321.9 115.2M321.9 70L321.9 115.2M325 70L326.2 118.3M326.2 70L326.2 118.3M329.8 70L331.2 121.2M331.2 70L331.2 121.2M335.2 70L336.8 123.9M336.8 70L336.8 123.9M341.3 70L343 126.5M343 70L343 126.5M348 70L349.9 128.8M349.9 70L349.9 128.8M355.1 70L357.2 130.9M357.2 70L357.2 130.9M362.8 70L365 132.8M365 70L365 132.8M370.9 70L373.2 134.4M373.2 70L373.2 134.4M379.4 70L381.7 135.7M381.7 70L381.7 135.7M388.1 70L390.6 136.8M390.6 70L390.6 136.8M397.1 70L399.6 137.5M399.6 70L399.6 137.5M406.2 70L408.8 138M408.8 70L408.8 138M415.4 70L418 138.1M418 70L418 138.1M424.7 70L427.2 138M427.2 70L427.2 138M433.8 70L436.4 137.5M436.4 70L436.4 137.5M442.9 70L445.4 136.8M445.4 70L445.4 136.8M451.8 70L454.3 135.7M454.3 70L454.3 135.7M460.4 70L462.8 134.4M462.8 70L462.8 134.4M468.7 70L471 132.8M471 70L471 132.8M476.6 70L478.8 130.9M478.8 70L478.8 130.9M484.1 70L486.1 128.8M486.1 70L486.1 128.8M491 70L493 126.5M493 70L493 126.5M497.5 70L499.2 123.9M499.2 70L499.2 123.9M503.3 70L504.8 121.2M504.8 70L504.8 121.2M508.4 70L509.8 118.3M509.8 70L509.8 118.3M512.9 70L514.1 115.2M514.1 70L514.1 115.2M516.6 70L517.6 112M517.6 70L517.6 112M519.6 70L520.4 108.7M520.4 70L520.4 108.7M521.8 70L522.4 105.3M522.4 70L522.4 105.3M523.3 70L523.6 101.9M523.6 70L523.6 101.9M523.9 70L524 98.4M524 70L524 98.4" stroke="#14061f" stroke-width="1.05" fill="none" opacity="0.9"/><path d="M312 98.4A106 39.7 0 0 0 524 98.4" fill="none" stroke="#1c0a2c" stroke-width="0.9"/><path d="M354.7 232.4L354 246.1L348.5 244.5ZM334.9 230.4L340.3 244.1L334.6 245.2ZM316.6 242.9L325.6 249.6L321.1 253.5ZM373.9 251.1L369.3 259L365.6 254.2ZM384.3 295.1L372 293.9L373.9 288ZM370.5 314.1L361.3 307.7L365.7 303.7ZM336.2 320.6L334.6 312.8L340.3 313.9ZM311.1 307.7L316.7 299L320.4 303.8ZM306.2 264.6L314 264.1L312.1 270Z" fill="#06300a" fill-opacity="0.6" stroke="#03200a" stroke-width="0.4"/><ellipse cx="343" cy="278.5" rx="33.5" ry="37.0" fill="#0a2a0a"/><ellipse cx="343" cy="278.5" rx="32" ry="35.5" fill="#c8965f"/><path d="M311 278.5L312.9 284.5M311.1 275.7L313 282.2M311.4 272.9L313.3 280M311.9 270.2L313.8 277.7M312.6 267.5L314.4 275.5M313.4 264.9L315.2 273.4M314.5 262.4L316.2 271.3M315.7 260L317.4 269.3M317.1 257.6L318.7 267.5M318.7 255.4L320.1 265.7M320.4 253.4L321.7 264M322.2 251.5L323.5 262.4M324.2 249.8L325.3 261M326.3 248.2L327.3 259.8M328.5 246.9L329.3 258.7M330.8 245.7L331.5 257.7M333.1 244.7L333.7 256.9M335.5 244L336 256.3M338 243.4L338.3 255.9M340.5 243.1L340.6 255.6M343 243L343 255.5M345.5 243.1L345.4 255.6M348 243.4L347.7 255.9M350.5 244L350 256.3M352.9 244.7L352.3 256.9M355.2 245.7L354.5 257.7M357.5 246.9L356.7 258.7M359.7 248.2L358.7 259.8M361.8 249.8L360.7 261M363.8 251.5L362.5 262.4M365.6 253.4L364.3 264M367.3 255.4L365.9 265.7M368.9 257.6L367.3 267.5M370.3 260L368.6 269.3M371.5 262.4L369.8 271.3M372.6 264.9L370.8 273.4M373.4 267.5L371.6 275.5M374.1 270.2L372.2 277.7M374.6 272.9L372.7 280M374.9 275.7L373 282.2M375 278.5L373.1 284.5" stroke="#3a2410" stroke-width="0.65" fill="none" opacity="0.8"/><ellipse cx="342.5" cy="284.5" rx="31" ry="29.5" fill="url(#geye)"/><path d="M311.5 284.5A31 29.5 0 0 1 373.5 284.5" fill="none" stroke="#24140a" stroke-width="1.3" opacity="0.8"/><path d="M311.6 282.7L333.5 312.5M311.8 280.7L344 314M312.1 278.7L352.5 312.2M312.6 276.8L339.5 314M313.2 274.8L348.5 313.4M314 273L333.5 312.5M314.9 271.2L344 314M316 269.4L352.5 312.2M317.1 267.7L339.5 314M318.4 266.1L348.5 313.4M319.8 264.6L333.5 312.5M321.3 263.2L344 314M322.9 261.9L352.5 312.2M324.6 260.7L339.5 314M326.3 259.6L348.5 313.4M328.2 258.6L333.5 312.5M330.1 257.7L344 314M332.1 257L352.5 312.2M334.1 256.4L339.5 314M336.2 255.9L348.5 313.4M338.3 255.6L333.5 312.5M340.4 255.4L344 314M342.5 255.3L352.5 312.2M344.6 255.4L339.5 314M346.7 255.6L348.5 313.4M348.8 255.9L333.5 312.5M350.9 256.4L344 314M352.9 257L352.5 312.2M354.9 257.7L339.5 314M356.8 258.6L348.5 313.4M358.7 259.6L333.5 312.5M360.4 260.7L344 314M362.1 261.9L352.5 312.2M363.7 263.2L339.5 314M365.2 264.6L348.5 313.4M366.6 266.1L333.5 312.5M367.9 267.7L344 314M369 269.4L352.5 312.2M370.1 271.2L339.5 314M371 273L348.5 313.4M371.8 274.8L333.5 312.5M372.4 276.8L344 314M372.9 278.7L352.5 312.2M373.2 280.7L339.5 314M373.4 282.7L348.5 313.4" stroke="#2a1608" stroke-width="0.6" fill="none" opacity="0.75"/><path d="M359.5 267.5L371.5 278.5L362.5 280.5Z" fill="#140a04" opacity="0.75"/><path d="M346.5 311.5L352.5 292.5L355.5 310.5Z" fill="#140a04" opacity="0.6"/><path d="M334.5 260.5L339.5 289.5L341.5 258.5Z" fill="#140a04" opacity="0.5"/><path d="M526 231.7L524.1 245.3L518.7 243.2ZM506.5 227.8L510.6 242L504.9 242.5ZM488.5 236.3L497.1 245.2L492.1 248.4ZM539.9 245.5L535.1 254.6L531 250.1ZM549.5 288.2L540.5 289.1L542 283ZM531.3 315.6L523.9 308.8L528.9 305.6ZM492.9 317.4L494.4 307.3L499.6 309.9ZM473.4 299.9L481.5 291.7L484.3 297.2ZM467.9 273L479 270.8L478.5 277.1Z" fill="#06300a" fill-opacity="0.6" stroke="#03200a" stroke-width="0.4"/><ellipse cx="510.5" cy="276.8" rx="33.5" ry="37.0" fill="#0a2a0a"/><ellipse cx="510.5" cy="276.8" rx="32" ry="35.5" fill="#c8965f"/><path d="M478.5 276.8L480.4 282.8M478.6 274L480.5 280.5M478.9 271.2L480.8 278.3M479.4 268.5L481.3 276M480.1 265.8L481.9 273.8M480.9 263.2L482.7 271.7M482 260.7L483.7 269.6M483.2 258.3L484.9 267.6M484.6 255.9L486.2 265.8M486.2 253.7L487.6 264M487.9 251.7L489.2 262.3M489.7 249.8L491 260.7M491.7 248.1L492.8 259.3M493.8 246.5L494.8 258.1M496 245.2L496.8 257M498.3 244L499 256M500.6 243L501.2 255.2M503 242.3L503.5 254.6M505.5 241.7L505.8 254.2M508 241.4L508.1 253.9M510.5 241.3L510.5 253.8M513 241.4L512.9 253.9M515.5 241.7L515.2 254.2M518 242.3L517.5 254.6M520.4 243L519.8 255.2M522.7 244L522 256M525 245.2L524.2 257M527.2 246.5L526.2 258.1M529.3 248.1L528.2 259.3M531.3 249.8L530 260.7M533.1 251.7L531.8 262.3M534.8 253.7L533.4 264M536.4 255.9L534.8 265.8M537.8 258.3L536.1 267.6M539 260.7L537.3 269.6M540.1 263.2L538.3 271.7M540.9 265.8L539.1 273.8M541.6 268.5L539.7 276M542.1 271.2L540.2 278.3M542.4 274L540.5 280.5M542.5 276.8L540.6 282.8" stroke="#3a2410" stroke-width="0.65" fill="none" opacity="0.8"/><ellipse cx="510" cy="282.8" rx="31" ry="29.5" fill="url(#pfine)"/><path d="M479 282.8A31 29.5 0 0 1 541 282.8" fill="none" stroke="#24140a" stroke-width="1.3" opacity="0.8"/><ellipse cx="510" cy="282.8" rx="31" ry="29.5" fill="none" stroke="#2a1608" stroke-width="0.8"/><path d="M442.4 313.6L439.3 323.4L435.6 321.2ZM428.4 310.3L429.7 319.4L425.4 319ZM413.9 311.1L419.4 319.8L415.3 321.3ZM401.2 322.6L408.6 326L405.8 329.3ZM453.9 326.6L447.3 332.9L445.1 329.2ZM458.3 343L449.4 345.2L449.4 340.8ZM391.6 343L401.6 340.8L401.6 345.2ZM454.2 356.4L446.3 355.1L448.1 351.1ZM396.8 356.4L402.9 351.1L404.7 355.1Z" fill="#06300a" fill-opacity="0.6" stroke="#03200a" stroke-width="0.4"/><path d="M425.5 317.5C441 317.5 451 329 450.8 342C450.6 350 449 358 447 366L432.5 452L405.5 366C402 358 400.5 350 400.2 342C400 329 410 317.5 425.5 317.5Z" fill="url(#gnose)" stroke="#1a0802" stroke-width="0.8"/><path d="M400.5 342L432.5 452M400.7 339.3L432.5 452M401.1 336.5L432.5 452M401.9 333.9L432.5 452M403 331.4L432.5 452M404.3 329L432.5 452M406 326.7L432.5 452M407.8 324.7L432.5 452M409.9 322.8L432.5 452M412.2 321.3L432.5 452M414.7 319.9L432.5 452M417.2 318.9L432.5 452M419.9 318.1L432.5 452M422.7 317.7L432.5 452M425.5 317.5L432.5 452M428.3 317.7L432.5 452M431.1 318.1L432.5 452M433.8 318.9L432.5 452M436.3 319.9L432.5 452M438.8 321.3L432.5 452M441.1 322.8L432.5 452M443.2 324.7L432.5 452M445 326.7L432.5 452M446.7 329L432.5 452M448 331.4L432.5 452M449.1 333.9L432.5 452M449.9 336.5L432.5 452M450.3 339.3L432.5 452M450.5 342L432.5 452" stroke="#200800" stroke-width="0.5" opacity="0.45" fill="none"/><path d="M425.5 317.5C441 317.5 451 329 450.8 342C450.6 350 449 358 447 366L432.5 452L405.5 366C402 358 400.5 350 400.2 342C400 329 410 317.5 425.5 317.5Z" fill="url(#gnose2)"/><path d="M432.5 452L425 405L431 372L438 408Z" fill="#000" opacity="0.75"/><path d="M432.5 452L420 395M432.5 452L428 370M432.5 452L436 372M432.5 452L441 395M432.5 452L412 372M432.5 452L446 368" stroke="#1a0802" stroke-width="0.7" opacity="0.6"/><path d="M293.5 415.3H556.1M293.5 415.3V418.6M346 415.3V418.6M398.5 415.3V418.6M451.1 415.3V418.6M503.6 415.3V418.6M556.1 415.3V418.6" stroke="#eee" stroke-width="0.85" fill="none"/><text x="291.3" y="428.3" font-size="10.4" font-weight="bold" text-anchor="middle" fill="#fff" stroke="#222" stroke-width="1.6" stroke-opacity="0.55" paint-order="stroke" textLength="24.8" lengthAdjust="spacingAndGlyphs">0.000</text><text x="345.4" y="428.3" font-size="10.4" font-weight="bold" text-anchor="middle" fill="#fff" stroke="#222" stroke-width="1.6" stroke-opacity="0.55" paint-order="stroke" textLength="30.3" lengthAdjust="spacingAndGlyphs">0.0100</text><text x="397.9" y="428.3" font-size="10.4" font-weight="bold" text-anchor="middle" fill="#fff" stroke="#222" stroke-width="1.6" stroke-opacity="0.55" paint-order="stroke" textLength="30.3" lengthAdjust="spacingAndGlyphs">0.0200</text><text x="450.5" y="428.3" font-size="10.4" font-weight="bold" text-anchor="middle" fill="#fff" stroke="#222" stroke-width="1.6" stroke-opacity="0.55" paint-order="stroke" textLength="30.3" lengthAdjust="spacingAndGlyphs">0.0300</text><text x="503" y="428.3" font-size="10.4" font-weight="bold" text-anchor="middle" fill="#fff" stroke="#222" stroke-width="1.6" stroke-opacity="0.55" paint-order="stroke" textLength="30.3" lengthAdjust="spacingAndGlyphs">0.0400</text><text x="555.5" y="428.3" font-size="10.4" font-weight="bold" text-anchor="middle" fill="#fff" stroke="#222" stroke-width="1.6" stroke-opacity="0.55" paint-order="stroke" textLength="30.3" lengthAdjust="spacingAndGlyphs">0.0500</text><path d="M227.2 407V388" stroke="#1018e8" stroke-width="3.4"/><path d="M227.2 381.5L223.4 389.2H231Z" fill="#1018e8"/><path d="M235 405.4H245" stroke="#18dc18" stroke-width="3.2"/><path d="M252.4 405.4L244 402.2V408.6Z" fill="#18dc18"/><rect x="228" y="399.5" width="6.8" height="8.6" fill="#e8e8e8"/><rect x="228" y="398.3" width="6.8" height="2" fill="#777"/><path d="M226 408L227.4 412" stroke="#8a0c0c" stroke-width="2"/><circle cx="227.4" cy="413" r="3.4" fill="#a80c0c"/><text x="226.6" y="378" font-size="7.6" text-anchor="middle" fill="#1018e8" font-weight="bold" >Z</text><text x="256.8" y="407.5" font-size="7.6" text-anchor="middle" fill="#18c818" font-weight="bold" >Y</text><text x="228.5" y="422.3" font-size="6.6" text-anchor="middle" fill="#f01818" font-weight="bold" >X</text></g><rect x="180" y="452.5" width="490.5" height="16" fill="#e9ebee"/><path d="M181 452.5V468H265.6V452.5" fill="#fff" stroke="#b4b8bf" stroke-width="0.7"/><g transform="translate(191.0 460.3) scale(0.42)"><path d="M-7 0L-3 -6H4L8 0L4 6H-3Z" fill="#5aa0f0" stroke="#000" stroke-width="1.6"/><path d="M-7 0H2" stroke="#000" stroke-width="1.8"/><path d="M3 -1L6 6L9 1L11 6L14 -2" stroke="#000" stroke-width="1.6" fill="none"/></g><text x="199" y="462.4" font-size="6.7" text-anchor="start" fill="#111" font-weight="normal" textLength="48.5" lengthAdjust="spacingAndGlyphs" >newSnowman.ecf</text><rect x="250.5" y="456.8" width="7" height="7" rx="1" fill="#e0552e"/><path d="M252.3 458.6L255.7 462M255.7 458.6L252.3 462" stroke="#fff" stroke-width="1.1"/><rect x="10.5" y="468.5" width="660" height="17" fill="url(#gstat)"/><path d="M10.5 468.5H670.5" stroke="#b9bdc4" stroke-width="0.7"/><text x="14" y="480" font-size="6.8" text-anchor="start" fill="#111" font-weight="bold" textLength="88" lengthAdjust="spacingAndGlyphs" >finished operation remesh</text><circle cx="586.8" cy="477" r="3.7" fill="#9a9a9a" stroke="#777" stroke-width="0.5"/><path d="M585.1 475.3L588.5 478.7M588.5 475.3L585.1 478.7" stroke="#fff" stroke-width="1.1"/><circle cx="606.6" cy="477" r="3.9" fill="#2a5fd8" stroke="#1a3a9a" stroke-width="0.5"/><text x="606.6" y="479.4" font-size="6.5" text-anchor="middle" fill="#fff" font-weight="bold" >i</text><text x="624.6" y="479.2" font-size="6.6" text-anchor="middle" fill="#111" font-weight="normal" textLength="9.5" lengthAdjust="spacingAndGlyphs" >mm</text><text x="647.6" y="479.2" font-size="6.6" text-anchor="middle" fill="#111" font-weight="normal" textLength="20.5" lengthAdjust="spacingAndGlyphs" >pc1303</text><path d="M596.5 471V484" stroke="#f4f5f7" stroke-width="0.8"/><path d="M616 471V484" stroke="#f4f5f7" stroke-width="0.8"/><path d="M633 471V484" stroke="#f4f5f7" stroke-width="0.8"/><path d="M661 471V484" stroke="#f4f5f7" stroke-width="0.8"/><rect x="663" y="479" width="6" height="4.5" fill="#c4c7cc"/><rect x="7.5" y="-5" width="668" height="493" fill="none" stroke="#3c3f45" stroke-width="1"/><rect x="8" y="-4" width="4" height="491" fill="#d4d7db"/><rect x="670.5" y="-4" width="4.5" height="491" fill="#d4d7db"/><rect x="8" y="485.5" width="667" height="2" fill="#c4c7cc"/><rect x="8" y="-5.2" width="667" height="5.2" fill="url(#gtop2)"/></g></g><g><rect x="10.5" y="-4" width="660" height="490" fill="#d5d8dc"/><rect x="10.5" y="-0.5" width="660" height="13.4" fill="url(#gtitle)"/><rect x="10.5" y="12.9" width="660" height="17.5" fill="#d1d4d9"/><rect x="10.5" y="28.4" width="660" height="1" fill="#c8cbd0"/><rect x="10.5" y="29.4" width="660" height="2" fill="#e2e5e9"/><path d="M32 -4C36 8 40 12.3 48 12.3H106C112 12.3 115.5 8 115.5 3C115.5 0 114 -3 112 -4Z" fill="#e3e5e9" stroke="#bfc3c9" stroke-width="0.7"/><text x="340.8" y="7.9" font-size="6.6" text-anchor="middle" fill="#222" font-weight="normal" textLength="77.5" lengthAdjust="spacingAndGlyphs" >Ennova 1.3 (win64 15.07.06)</text><path d="M634 8.3H638.5" stroke="#8a8f98" stroke-width="1"/><rect x="648" y="4.6" width="3.8" height="3.6" fill="#fff" stroke="#8a8f98" stroke-width="0.8"/><path d="M648 4.6H651.8" stroke="#555" stroke-width="1"/><path d="M662.3 4L666.3 8.4M666.3 4L662.3 8.4" stroke="#7a8aa8" stroke-width="0.9"/><circle cx="664" cy="20.5" r="3.7" fill="#1a3ea8" stroke="#9a9070" stroke-width="0.7"/><text x="664" y="22.8" font-size="6.2" text-anchor="middle" fill="#fff" font-weight="bold" >?</text><path d="M111.5 30V21Q111.5 18.7 114 18.7H137Q139.4 18.7 139.4 21V30Z" fill="#e6e9ee" stroke="#b9bdc4" stroke-width="0.7"/><text x="44.7" y="26" font-size="6.8" text-anchor="start" fill="#151515" font-weight="normal" textLength="13.5" lengthAdjust="spacingAndGlyphs" >CAD</text><text x="74.3" y="26" font-size="6.8" text-anchor="start" fill="#151515" font-weight="normal" textLength="27.1" lengthAdjust="spacingAndGlyphs" >Geometry</text><text x="118.7" y="26" font-size="6.8" text-anchor="start" fill="#151515" font-weight="normal" textLength="14.6" lengthAdjust="spacingAndGlyphs" >Mesh</text><text x="149" y="26" font-size="6.8" text-anchor="start" fill="#151515" font-weight="normal" textLength="59.3" lengthAdjust="spacingAndGlyphs" >Setup with iconMesh</text><text x="224" y="26" font-size="6.8" text-anchor="start" fill="#151515" font-weight="normal" textLength="71" lengthAdjust="spacingAndGlyphs" >Setup with Ennova Mesh</text><text x="310" y="26" font-size="6.8" text-anchor="start" fill="#151515" font-weight="normal" textLength="35" lengthAdjust="spacingAndGlyphs" >postProcess</text><text x="361.5" y="26" font-size="6.8" text-anchor="start" fill="#151515" font-weight="normal" textLength="35.1" lengthAdjust="spacingAndGlyphs" >Applications</text><rect x="12.7" y="30.7" width="44.3" height="49.3" rx="4" fill="url(#ggrp)" stroke="#c4c8ce" stroke-width="0.7"/><path d="M13.1 70.7H56.6V76Q56.6 80 53 80H16.7Q13.1 80 13.1 76Z" fill="#d2d5da"/><text x="34.9" y="77.3" font-size="6.6" text-anchor="middle" fill="#333" font-weight="normal" textLength="13.5" lengthAdjust="spacingAndGlyphs" >View</text><rect x="59.7" y="30.7" width="60.6" height="49.3" rx="4" fill="url(#ggrp)" stroke="#c4c8ce" stroke-width="0.7"/><path d="M60.1 70.7H119.9V76Q119.9 80 116.3 80H63.7Q60.1 80 60.1 76Z" fill="#d2d5da"/><text x="90" y="77.3" font-size="6.6" text-anchor="middle" fill="#333" font-weight="normal" textLength="20.5" lengthAdjust="spacingAndGlyphs" >Display</text><rect x="123.8" y="30.7" width="60.5" height="49.3" rx="4" fill="url(#ggrp)" stroke="#c4c8ce" stroke-width="0.7"/><path d="M124.2 70.7H183.9V76Q183.9 80 180.3 80H127.8Q124.2 80 124.2 76Z" fill="#d2d5da"/><text x="154.1" y="77.3" font-size="6.6" text-anchor="middle" fill="#333" font-weight="normal" textLength="20" lengthAdjust="spacingAndGlyphs" >Mesher</text><rect x="187" y="30.7" width="67.3" height="49.3" rx="4" fill="url(#ggrp)" stroke="#c4c8ce" stroke-width="0.7"/><path d="M187.4 70.7H253.9V76Q253.9 80 250.3 80H191Q187.4 80 187.4 76Z" fill="#d2d5da"/><text x="220.7" y="77.3" font-size="6.6" text-anchor="middle" fill="#333" font-weight="normal" textLength="38.5" lengthAdjust="spacingAndGlyphs" >Mesh settings</text><rect x="257.6" y="30.7" width="56.7" height="49.3" rx="4" fill="url(#ggrp)" stroke="#c4c8ce" stroke-width="0.7"/><path d="M258 70.7H313.9V76Q313.9 80 310.3 80H261.6Q258 80 258 76Z" fill="#d2d5da"/><text x="286" y="77.3" font-size="6.6" text-anchor="middle" fill="#333" font-weight="normal" textLength="52" lengthAdjust="spacingAndGlyphs" >Geometry to Mesh</text><rect x="317.6" y="30.7" width="108.6" height="49.3" rx="4" fill="url(#ggrp)" stroke="#c4c8ce" stroke-width="0.7"/><path d="M318 70.7H425.8V76Q425.8 80 422.2 80H321.6Q318 80 318 76Z" fill="#d2d5da"/><text x="371.9" y="77.3" font-size="6.6" text-anchor="middle" fill="#333" font-weight="normal" textLength="26.5" lengthAdjust="spacingAndGlyphs" >Selection</text><rect x="429.8" y="30.7" width="132" height="49.3" rx="4" fill="url(#ggrp)" stroke="#c4c8ce" stroke-width="0.7"/><path d="M430.2 70.7H561.4V76Q561.4 80 557.8 80H433.8Q430.2 80 430.2 76Z" fill="#d2d5da"/><text x="495.8" y="77.3" font-size="6.6" text-anchor="middle" fill="#333" font-weight="normal" textLength="27.5" lengthAdjust="spacingAndGlyphs" >Mesh Edit</text><rect x="564.7" y="30.7" width="104.9" height="49.3" rx="4" fill="url(#ggrp)" stroke="#c4c8ce" stroke-width="0.7"/><path d="M565.1 70.7H669.2V76Q669.2 80 665.6 80H568.7Q565.1 80 565.1 76Z" fill="#d2d5da"/><text x="617.2" y="77.3" font-size="6.6" text-anchor="middle" fill="#333" font-weight="normal" textLength="17" lengthAdjust="spacingAndGlyphs" >Check</text><circle cx="22.8" cy="11.3" r="10.2" fill="#eef1f6" stroke="#9fb0c8" stroke-width="0.8"/><path d="M13.5 11.5L17 5.5H24L27 10L24 17H17Z" fill="#5c9cf5"/><path d="M17 17L20 11.5H27L24 17Z" fill="#3a78e0"/><path d="M24 5.5L27 10L30 8L28 5Z" fill="#cfe0f8"/><path d="M23.5 5.5H17L13.6 11.5L17 17.3H23M13.6 11.5H21" stroke="#000" stroke-width="1.5" fill="none"/><path d="M23 9L26 17L28.5 12.5L30 17L32.5 11" stroke="#111" stroke-width="1.3" fill="none"/><g transform="translate(44.0 6.0)"><path d="M-4 -1L-2 -3.5H3L4.5 3.5H-3Z" fill="#f2b630"/><path d="M-3 -3.8L1 -4.6L3 -1L-1 0Z" fill="#fff" stroke="#ccc" stroke-width="0.3"/><path d="M-4.5 -0.5L3 1L4.5 3.8H-3Z" fill="#f6cc58"/></g><g transform="translate(56.9 6.0)"><rect x="-3.8" y="-4" width="7.6" height="8" fill="#2c2f38"/><rect x="-2" y="-4" width="4" height="3.2" fill="#e8e8ee"/><rect x="-2.2" y="1" width="4.4" height="3" fill="#8a8f9c"/></g><g transform="translate(69.5 6.0)"><rect x="-3.8" y="-4" width="6" height="8" fill="#2c2f38"/><rect x="-2.2" y="-4" width="3" height="3" fill="#e8e8ee"/><path d="M2 -3.5L4 -4.5M3 -1L4.5 -1.5" stroke="#555" stroke-width="0.8"/></g><g transform="translate(82.5 6.3)"><path d="M-4.5 0.5L-1 -3V-1Q4 -1.5 4.5 3Q2 0.5 -1 1.5V3.5Z" fill="#1e78c8"/></g><g transform="translate(95.1 6.3)"><path d="M4.5 0.5L1 -3V-1Q-4 -1.5 -4.5 3Q-2 0.5 1 1.5V3.5Z" fill="#1e78c8"/></g><g transform="translate(108.4 6.0)"><rect x="-3.3" y="-4.3" width="6" height="8.6" fill="#f4f4f6" stroke="#444" stroke-width="0.8" stroke-dasharray="1.5 1.2"/><path d="M4 -2V3" stroke="#888" stroke-width="0.8"/></g><path d="M116.8 4H122.2L119.5 8.2Z" fill="#1e78c8"/><path d="M116.8 3H122.2" stroke="#1e78c8" stroke-width="0.9"/><g transform="translate(21.9 42.0)"><path d="M-4.6 0L0 -4.4L4.6 0M-3.3 -0.8V4.2H3.3V-0.8" fill="#fff" stroke="#444" stroke-width="0.9"/><rect x="-1" y="1.2" width="2" height="3" fill="#888"/></g><path d="M29.0 40.9H33.2L31.1 43.3Z" fill="#111"/><g transform="translate(42.4 42.0)"><path d="M-3 -4.5V2.5L-5 4.5M-3 2.5H5" stroke="#222" stroke-width="0.9" fill="none"/><circle cx="1.5" cy="2" r="1.7" fill="#fff" stroke="#222" stroke-width="0.8"/><circle cx="-3" cy="-4.3" r="0.9" fill="#222"/><circle cx="-5" cy="4.5" r="0.9" fill="#222"/></g><path d="M50.1 40.9H54.3L52.2 43.3Z" fill="#111"/><g transform="translate(21.9 62.0)"><path d="M-1.8 -5.5H1.8V-1.8H5.5V1.8H1.8V5.5H-1.8V1.8H-5.5V-1.8H-1.8Z" fill="#f2f2f2" stroke="#444" stroke-width="1" stroke-linejoin="round"/><circle r="1" fill="#666"/></g><g transform="translate(42.4 62.0)"><circle cx="-1.2" cy="-1.5" r="3.3" fill="#f4f6fa" stroke="#666" stroke-width="0.9"/><path d="M1.2 1.2L4.6 4.8" stroke="#333" stroke-width="1.6"/></g><path d="M50.1 60.9H54.3L52.2 63.3Z" fill="#111"/><g transform="translate(69.5 42.0)"><path d="M0 -6.2L5.8 -3.2V3L0 6.2L-5.8 3V-3.2Z" fill="#4a4a4a" stroke="#222" stroke-width="0.7"/><path d="M-5.8 -3.2L0 -0.2L5.8 -3.2M0 -0.2V6.2" stroke="#777" stroke-width="0.6" fill="none"/><path d="M-3 -1.5L-3 3.5M3 -1.5V3.5M-2.5 -3.5L2.5 -3.5" stroke="#888" stroke-width="0.5"/></g><path d="M76.5 40.9H80.7L78.6 43.3Z" fill="#111"/><g transform="translate(89.8 42.0)"><path d="M0 -5.8C3.4 -5.8 4.4 -3 3.6 -1C2.8 0.8 2 1.5 1.8 3.2H-1.8C-2 1.5 -2.8 0.8 -3.6 -1C-4.4 -3 -3.4 -5.8 0 -5.8Z" fill="#e2e2e2" stroke="#666" stroke-width="0.8"/><rect x="-1.7" y="3.4" width="3.4" height="2.4" fill="#888"/></g><path d="M97.1 40.9H101.3L99.2 43.3Z" fill="#111"/><g transform="translate(110.8 42.0)"><circle cx="0" cy="-5" r="1.1" fill="#5aa0f0"/><circle cx="0" cy="5" r="1.1" fill="#5aa0f0"/><circle cx="-5" cy="0" r="1.1" fill="#5aa0f0"/><circle cx="5" cy="0" r="1.1" fill="#5aa0f0"/><path d="M-3.6 -6V6M3.6 -6V6M-6 -3.6H6M-6 3.6H6" stroke="#333" stroke-width="0.9"/><rect x="-3.5" y="-3.5" width="7" height="7" fill="#ffa050"/></g><g transform="translate(69.5 62.0)"><path d="M0 -6.2L5.8 -3.2V3L0 6.2L-5.8 3V-3.2Z" fill="#f0883a" stroke="#222" stroke-width="0.7"/><path d="M-5.8 -3.2L0 -0.2L5.8 -3.2M0 -0.2V6.2" stroke="#222" stroke-width="0.6" fill="none"/><path d="M-5.8 -3.2L0 6.2M0 -6.2L0 -0.2M-3 -4.7L3 -1.7M5.8 -3.2L0 6.2M-2.5 1L-1 4" stroke="#222" stroke-width="0.5" fill="none"/></g><path d="M76.5 60.9H80.7L78.6 63.3Z" fill="#111"/><g transform="translate(90.0 62.0)"><path d="M0 -6.2L5.8 -3.2V3L0 6.2L-5.8 3V-3.2Z" fill="#f6f6f6" stroke="#222" stroke-width="0.7"/><path d="M-1.5 -4L2.5 -2V4L-1.5 2.5Z" fill="#f0883a"/><path d="M-5.8 -3.2L0 -0.2L5.8 -3.2M0 -0.2V6.2M-5.8 3L0 -0.2M5.8 3L0 -6.2" stroke="#222" stroke-width="0.5" fill="none"/></g><g transform="translate(110.8 62.0)"><circle cx="0" cy="-5" r="1.1" fill="#5aa0f0"/><circle cx="0" cy="5" r="1.1" fill="#5aa0f0"/><circle cx="-5" cy="0" r="1.1" fill="#5aa0f0"/><circle cx="5" cy="0" r="1.1" fill="#5aa0f0"/><path d="M-3.6 -6V6M3.6 -6V6M-6 -3.6H6M-6 3.6H6" stroke="#333" stroke-width="0.9"/><rect x="-3.5" y="-3.5" width="7" height="7" fill="#ffa050"/></g><g transform="translate(133.0 42.0)"><path d="M-6 -1.5L-2 -5.5L1 -3L4 -5.5L6 -2V5.5H-6Z" fill="#3e8fe0"/><path d="M-3.5 -1L-0.5 -5.8L3.5 -4L4.5 -0.5L1 2Z" fill="#bcbcbc" stroke="#555" stroke-width="0.4"/><path d="M-6 5.5L-1.5 1.5L0 3L1.5 1.5L6 5.5Z" fill="#ffa040"/><path d="M-6 0L-3 2L-6 4M6 0L3 2L6 4" stroke="#1c4c8c" stroke-width="0.5" fill="none"/></g><path d="M140.6 40.9H144.8L142.7 43.3Z" fill="#111"/><g transform="translate(153.7 42.0)"><rect x="-6" y="-6" width="12" height="12" fill="#3a78d8"/><rect x="-0.5" y="-6" width="6.5" height="9" fill="#f09038"/><path d="M-3 -6V6M0 -6V6M3 -6V6" stroke="#1a3a7a" stroke-width="0.6"/><path d="M-6 -3.5H6M-6 -0.5H6M-6 2.5H6" stroke="#1a3a7a" stroke-width="0.9"/></g><g transform="translate(169.7 42.0)"><rect x="-6" y="-6" width="12" height="12" fill="#c8ccd4"/><rect x="-1" y="-3" width="6.5" height="6.5" fill="#4a7ae0"/><path d="M-4 -6V6M-2 -6V6M0 -6V6M2 -6V6M4 -6V6" stroke="#444a58" stroke-width="0.45"/><path d="M-6 -3.5H6M-6 -0.5H6M-6 2.5H6" stroke="#444a58" stroke-width="0.8"/></g><g transform="translate(133.0 62.0)"><path d="M-6 -4.5H1.5M-2.2 -4.5V-1" stroke="#2a78d8" stroke-width="1.6"/><path d="M-4.5 4.8L1 -3.8L6 4.8Z" fill="#ffb070" stroke="#c86a20" stroke-width="0.6"/></g><g transform="translate(153.7 62.0)"><path d="M-6 -3Q-3 -6 0 -3.5Q3 -6 6 -3.5V4.5Q3 2 0 4.5Q-3 2 -6 5Z" fill="#f4f4f4" stroke="#777" stroke-width="0.6"/><path d="M-3 -4.6V3.6M0 -3.5V4.5M3 -4.6V3.4M-6 -0.5Q-3 -3.4 0 -1Q3 -3.4 6 -1M-6 2Q-3 -0.8 0 1.6Q3 -0.8 6 1.8" stroke="#777" stroke-width="0.5" fill="none"/></g><g transform="translate(169.7 62.0)"><rect x="-6" y="-6" width="11.5" height="12" fill="#3c5a3c"/><path d="M-6 -3H5.5M-6 0H5.5M-3 -6V6M0 -6V6M3 -6V6" stroke="#a8c0a8" stroke-width="0.4"/><path d="M-3.5 3L1 -4.5L4.5 3Z" fill="#f09038"/><path d="M-5 3.5Q0 1.5 5 4V6H-5Z" fill="#e8e8e8"/></g><path d="M177.1 60.9H181.3L179.2 63.3Z" fill="#111"/><g transform="translate(196.5 42.0)"><circle cx="-4" cy="-4" r="1.3" fill="#e8a0b0"/><circle cx="0" cy="-4" r="1.3" fill="#c02020"/><circle cx="4" cy="-4" r="1.3" fill="#30a0a0"/><circle cx="-4" cy="0" r="1.3" fill="#e8a0b0"/><circle cx="0" cy="0" r="1.3" fill="#f0a030"/><circle cx="4" cy="0" r="1.3" fill="#3060d0"/><circle cx="-4" cy="4" r="1.3" fill="#e8a0b0"/><circle cx="0" cy="4" r="1.3" fill="#3060d0"/><circle cx="4" cy="4" r="1.3" fill="#c04040"/><path d="M-6 -2H6M-6 2H6M-2 -6V6M2 -6V6" stroke="#555" stroke-width="0.4"/></g><g transform="translate(212.8 42.0)"><path d="M-6 -6L5 6M6 -6L-5 6M-6 -5Q0 -1 6 -5" stroke="#222" stroke-width="0.8" fill="none"/><path d="M-3.5 3.5L0 -4L3.5 3.5Z" fill="#a0a8e8" stroke="#334" stroke-width="0.5"/><circle cx="4" cy="4" r="2.1" fill="none" stroke="#e8402a" stroke-width="1.4"/></g><g transform="translate(229.2 42.0)"><rect x="-5.5" y="-5.5" width="5" height="6" fill="#f2f2f2" stroke="#bbb" stroke-width="0.7"/><rect x="-2.5" y="-3" width="5" height="6" fill="#f2f2f2" stroke="#bbb" stroke-width="0.7"/><rect x="0.5" y="-0.5" width="5" height="6" fill="#f2f2f2" stroke="#bbb" stroke-width="0.7"/></g><g transform="translate(245.1 42.0)"><path d="M0 -6.2L5.6 -3.1V3.1L0 6.2L-5.6 3.1V-3.1Z" fill="#d8d8d8" stroke="#444" stroke-width="1"/><circle r="3.2" fill="#ffa050"/><circle cx="-0.8" cy="-0.8" r="1.4" fill="#ffd0a0"/></g><g transform="translate(196.5 62.0)"><rect x="-6" y="-6" width="12" height="12" fill="#5a5a5a"/><path d="M-4 -6V6M-2 -6V6M0 -6V6M2 -6V6M4 -6V6" stroke="#d8d8d8" stroke-width="0.5"/><path d="M-6 -3.5H6M-6 -0.5H6M-6 2.5H6" stroke="#e4e4e4" stroke-width="0.9"/></g><g transform="translate(212.8 62.0)"><path d="M-6 -6L5 6M6 -6L-5 6M-6 -5Q0 -1 6 -5" stroke="#222" stroke-width="0.8" fill="none"/><path d="M-3.5 3.5L0 -4L3.5 3.5Z" fill="#a0a8e8" stroke="#334" stroke-width="0.5"/><circle cx="4" cy="4" r="2.1" fill="none" stroke="#e8402a" stroke-width="1.4"/></g><g transform="translate(229.2 62.0)"><path d="M-4.8 -6V6" stroke="#f02020" stroke-width="1"/><path d="M-4.8 -5H0" stroke="#f02020" stroke-width="0.8"/><circle cx="-4.8" cy="-5.3" r="1" fill="#f02020"/><path d="M1.5 -3.5L5.5 -1V3.5L1.5 6L-2.5 3.5V-1Z" fill="#e4e4ec" stroke="#444" stroke-width="0.7"/><circle cx="0.5" cy="1.8" r="1.6" fill="#2040e0"/><path d="M-2.5 -1L1.5 1.2L5.5 -1M1.5 1.2V6" stroke="#444" stroke-width="0.5" fill="none"/></g><g transform="translate(245.1 62.0)"><path d="M-5.5 -4L5.5 -5.5V4L-5.5 5.5Z" fill="#ececec" stroke="#555" stroke-width="0.8"/><rect x="-1.3" y="-4.8" width="2.6" height="9.8" fill="#ffa860"/><path d="M-5.5 0.5H-1.3M1.3 -0.5H5.5" stroke="#555" stroke-width="0.6"/></g><g transform="translate(273.5 49.5)"><path d="M-9.5 -4H-3L0 -7.5L3 -4L6 -7L9.5 -4V6.5H-9.5Z" fill="#4a9ae8"/><path d="M-4.5 -2.5L-0.5 -7.5H1L5 -6L7 -2L3 2L-1.5 1.5Z" fill="#cfcfcf" stroke="#666" stroke-width="0.45"/><path d="M0.3 -7.5V2M-4.5 -2.5L3 2M5 -6L-1.5 1.5" stroke="#666" stroke-width="0.45"/><path d="M-9.5 6.5L-2 2L0 4L2 2L9.5 6.5Z" fill="#ffa040"/><path d="M-9.5 -1L-5 2L-9.5 4M9.5 -1L5 2L9.5 4M-5 2L-2 2M5 2L2 2" stroke="#2a5a9a" stroke-width="0.6" fill="none"/><path d="M-4 8.2Q0 6.8 3 9.6" stroke="#e81818" stroke-width="1.5" fill="none"/><path d="M4.6 10.6L1.4 10.4L3.8 7.6Z" fill="#e81818"/></g><g transform="translate(298.6 49.5)"><path d="M-9.5 -4H-3L0 -7.5L3 -4L6 -7L9.5 -4V6.5H-9.5Z" fill="#4a9ae8"/><path d="M-4.5 -2.5L-0.5 -7.5H1L5 -6L7 -2L3 2L-1.5 1.5Z" fill="#cfcfcf" stroke="#666" stroke-width="0.45"/><path d="M0.3 -7.5V2M-4.5 -2.5L3 2M5 -6L-1.5 1.5" stroke="#666" stroke-width="0.45"/><path d="M-9.5 6.5L-2 2L0 4L2 2L9.5 6.5Z" fill="#ffa040"/><path d="M-9.5 -1L-5 2L-9.5 4M9.5 -1L5 2L9.5 4M-5 2L-2 2M5 2L2 2" stroke="#2a5a9a" stroke-width="0.6" fill="none"/><path d="M4 8.2Q0 6.8 -3 9.6" stroke="#e81818" stroke-width="1.5" fill="none"/><path d="M-4.6 10.6L-1.4 10.4L-3.8 7.6Z" fill="#e81818"/></g><g transform="translate(327.3 42.0)"><path d="M-2.8 -5.5V3.8L-0.6 1.8L1.2 5.4L2.8 4.6L1 1.2L3.8 1Z" fill="#fff" stroke="#222" stroke-width="0.8"/></g><path d="M333.9 40.9H338.1L336.0 43.3Z" fill="#111"/><g transform="translate(347.6 42.0)"><rect x="-5" y="-5" width="10" height="10" fill="#c6c6c6" stroke="#222" stroke-width="1.5"/></g><g transform="translate(363.7 42.0)"><rect x="-4.8" y="-4.8" width="9.6" height="9.6" fill="#c6c6c6" stroke="#555" stroke-width="0.8"/></g><g transform="translate(379.7 42.0)"><circle cx="0" cy="-5" r="1.1" fill="#5aa0f0"/><circle cx="0" cy="5" r="1.1" fill="#5aa0f0"/><circle cx="-5" cy="0" r="1.1" fill="#5aa0f0"/><circle cx="5" cy="0" r="1.1" fill="#5aa0f0"/><path d="M-3.6 -6V6M3.6 -6V6M-6 -3.6H6M-6 3.6H6" stroke="#333" stroke-width="0.9"/><rect x="-3.5" y="-3.5" width="7" height="7" fill="#ffa050"/></g><g transform="translate(396.0 42.0)"><circle cx="0" cy="-5" r="1.1" fill="#5aa0f0"/><circle cx="0" cy="5" r="1.1" fill="#5aa0f0"/><circle cx="-5" cy="0" r="1.1" fill="#5aa0f0"/><circle cx="5" cy="0" r="1.1" fill="#5aa0f0"/><path d="M-3.6 -6V6M3.6 -6V6M-6 -3.6H6M-6 3.6H6" stroke="#333" stroke-width="0.9"/><rect x="-3.5" y="-3.5" width="7" height="7" fill="#ffa050"/></g><g transform="translate(411.6 42.0)"><rect x="-1" y="-5" width="6" height="6" fill="#f6f6fa" stroke="#aaa" stroke-width="0.6"/><rect x="-4.5" y="-1.8" width="6.5" height="6.5" fill="#ffa860"/></g><path d="M419.3 40.9H423.5L421.4 43.3Z" fill="#111"/><g transform="translate(326.8 62.0)"><rect x="-4.8" y="-4.5" width="9.4" height="9" fill="#f8f8f8" stroke="#222" stroke-width="0.9" stroke-dasharray="1.6 1.1"/><circle cx="-4.8" cy="4.5" r="0.9" fill="#222"/><circle cx="4.6" cy="-4.5" r="0.9" fill="#222"/></g><path d="M333.9 60.9H338.1L336.0 63.3Z" fill="#111"/><g transform="translate(347.6 62.0)"><rect x="-4.5" y="-4.5" width="9" height="9" fill="#c4c4c4" stroke="#222" stroke-width="0.9"/><circle cx="-4.5" cy="-4.5" r="1" fill="#111"/><circle cx="-4.5" cy="4.5" r="1" fill="#111"/><circle cx="4.5" cy="-4.5" r="1" fill="#111"/><circle cx="4.5" cy="4.5" r="1" fill="#111"/></g><g transform="translate(363.7 62.0)"><path d="M-5 4.5L-2.5 1L2 -0.5L5 -5" stroke="#333" stroke-width="0.9" fill="none"/><circle cx="-5" cy="4.5" r="1.2" fill="#fff" stroke="#333" stroke-width="0.7"/><circle cx="-2.5" cy="1" r="1.1" fill="#a8a830"/><circle cx="2" cy="-0.5" r="1" fill="#555"/><circle cx="5" cy="-5" r="1" fill="#fff" stroke="#333" stroke-width="0.6"/></g><g transform="translate(379.7 62.0)"><circle cx="0" cy="-5" r="1.1" fill="#5aa0f0"/><circle cx="0" cy="5" r="1.1" fill="#5aa0f0"/><circle cx="-5" cy="0" r="1.1" fill="#5aa0f0"/><circle cx="5" cy="0" r="1.1" fill="#5aa0f0"/><path d="M-3.6 -6V6M3.6 -6V6M-6 -3.6H6M-6 3.6H6" stroke="#333" stroke-width="0.9"/><rect x="-3.5" y="-3.5" width="7" height="7" fill="#ffa050"/></g><g transform="translate(396.0 62.0)"><circle cx="0" cy="-5" r="1.1" fill="#5aa0f0"/><circle cx="0" cy="5" r="1.1" fill="#5aa0f0"/><circle cx="-5" cy="0" r="1.1" fill="#5aa0f0"/><circle cx="5" cy="0" r="1.1" fill="#5aa0f0"/><path d="M-3.6 -6V6M3.6 -6V6M-6 -3.6H6M-6 3.6H6" stroke="#333" stroke-width="0.9"/><rect x="-3.5" y="-3.5" width="7" height="7" fill="#ffa050"/><circle cx="3.8" cy="4.2" r="1.7" fill="none" stroke="#e8402a" stroke-width="1.2"/></g><g transform="translate(411.6 62.0)"><path d="M-1.5 -5.5H5.5V2.5L3 5H-1.5Z" fill="#b0b0b0"/><path d="M3 -3L5.5 -5.5V2.5L3 5Z" fill="#8a8a8a"/><rect x="-5" y="-3" width="8" height="8" fill="#ffc010"/><path d="M-5 -3L-2.5 -5.5H5.5L3 -3Z" fill="#ffe080" opacity="0.7"/></g><path d="M419.3 60.9H423.5L421.4 63.3Z" fill="#111"/><rect x="479.6" y="34" width="16.2" height="16.6" rx="1.5" fill="#ffe070" stroke="#f0c040" stroke-width="0.6"/><g transform="translate(438.9 42.0)"><path d="M-2.5 -5.5L5.5 -2L3 5.5L-5.5 1.5Z" fill="#c8c8c8" stroke="#222" stroke-width="0.9"/><path d="M-5.5 1.5L5.5 -2" stroke="#e82020" stroke-width="0.9"/><path d="M-2.5 -5.5L3 5.5" stroke="#222" stroke-width="0.6"/><circle cx="-5" cy="-3.6" r="0.8" fill="#e82020"/><circle cx="5.3" cy="3.2" r="0.8" fill="#e82020"/></g><g transform="translate(455.0 42.0)"><rect x="-5.3" y="-5.3" width="10.6" height="10.6" fill="#c8c8c8" stroke="#444" stroke-width="0.8"/><path d="M0 -5.3V5.3M-5.3 0H5.3" stroke="#e82020" stroke-width="1"/></g><g transform="translate(471.3 42.0)"><path d="M-5.5 -5L-1 -1.5V5.5H-5.5ZM5.5 -5L1 -1.5V5.5H5.5Z" fill="#b8bcc4" stroke="#777" stroke-width="0.5"/><path d="M-4 -5.5L0 -0.5L4 -5.5" stroke="#444" stroke-width="1" fill="none"/><path d="M0 -0.5V3.5" stroke="#444" stroke-width="1.4"/></g><g transform="translate(487.7 42.3)"><path d="M-5 -3.2L2.5 -5.5L6 -3.2L-1.5 -0.8Z" fill="#e8e8e8" stroke="#222" stroke-width="1"/><path d="M-6 1.5L2 -0.8L6 1.8L-2.5 5Z" fill="#cfcfcf" stroke="#222" stroke-width="1"/><path d="M-2 -4L2 -1.8M-3 0.6L1.5 3.4M-0.5 0L4 2.6" stroke="#222" stroke-width="0.7"/><circle cx="-5.6" cy="1.2" r="1" fill="#e00"/></g><g transform="translate(503.8 42.0)"><path d="M-5.5 -4.5L1.5 -5.5L3.5 -1L-3.5 0.5Z" fill="#9a9a9a" stroke="#333" stroke-width="0.7"/><path d="M-2 0.5L5 -1L5.5 4.5L-1 5.5Z" fill="#e0e0e0" stroke="#333" stroke-width="0.7"/><path d="M4 -4.5Q6 -2 4.8 0" stroke="#e82020" stroke-width="0.8" fill="none"/></g><g transform="translate(519.8 42.0)"><path d="M-6.5 -5.5L6.5 2M6.5 -5.5L-6.5 2M-5 5.5L5 -1M5 5.5L-5 -1" stroke="#222" stroke-width="0.8" fill="none"/><circle cx="0" cy="-1.8" r="1.1" fill="#111"/><circle cx="0" cy="2.2" r="1.1" fill="#111"/><path d="M0 -1.8V2.2" stroke="#e8202a" stroke-width="0.8"/></g><g transform="translate(536.0 42.0)"><path d="M-5.5 -3L5.5 -5.5L3 1L-3.5 2.5Z" fill="#f0f0f0" stroke="#333" stroke-width="0.8"/><path d="M-4.5 0L5 -2L2 5.5L-2.5 4.5Z" fill="#dcdcdc" stroke="#333" stroke-width="0.8"/></g><g transform="translate(552.1 42.0)"><rect x="-5.3" y="-5.3" width="10.6" height="10.6" fill="#b0b0b0" stroke="#222" stroke-width="0.9"/><path d="M0 -5.3V5.3M-5.3 0H5.3M-5.3 -5.3L5.3 5.3M5.3 -5.3L-5.3 5.3" stroke="#222" stroke-width="0.6"/></g><g transform="translate(438.9 62.0)"><rect x="-5.3" y="-5.3" width="10" height="10" fill="#c4c4c4" stroke="#444" stroke-width="0.9"/><path d="M2.5 2.5L6 6M6 2.5L2.5 6" stroke="#e82020" stroke-width="0.9"/></g><g transform="translate(455.0 62.0)"><path d="M-4.5 -5.5L5.5 -3L3.5 5.5L-5.5 2.5Z" fill="#d8d8d8" stroke="#333" stroke-width="0.8"/><circle cx="-1" cy="-1.5" r="1.8" fill="#f4f4f4" stroke="#444" stroke-width="0.6"/><rect x="0.5" y="1" width="2.8" height="2.4" fill="#aaa" stroke="#444" stroke-width="0.5"/></g><g transform="translate(471.3 62.0)"><rect x="-4.5" y="-4.5" width="9" height="9" fill="#c4c4c4" stroke="#222" stroke-width="0.9"/><circle cx="-4.5" cy="-4.5" r="1" fill="#111"/><circle cx="-4.5" cy="4.5" r="1" fill="#111"/><circle cx="4.5" cy="-4.5" r="1" fill="#111"/><circle cx="4.5" cy="4.5" r="1" fill="#111"/><path d="M-5.8 -3.5Q-7.2 0 -5.8 3.5" stroke="#e82020" stroke-width="0.9" fill="none"/></g><g transform="translate(487.7 62.0)"><path d="M-6.5 -5.5L6.5 2M6.5 -5.5L-6.5 2M-5 5.5L5 -1M5 5.5L-5 -1" stroke="#222" stroke-width="0.8" fill="none"/><circle cx="0" cy="-1.8" r="1.1" fill="#111"/><circle cx="0" cy="2.2" r="1.1" fill="#111"/><path d="M1 3L4.5 -3" stroke="#e8202a" stroke-width="0.9"/></g><g transform="translate(503.8 62.0)"><rect x="-4.5" y="-4.5" width="9" height="9" fill="#c4c4c4" stroke="#222" stroke-width="0.9"/><circle cx="-4.5" cy="-4.5" r="1" fill="#111"/><circle cx="-4.5" cy="4.5" r="1" fill="#111"/><circle cx="4.5" cy="-4.5" r="1" fill="#111"/><circle cx="4.5" cy="4.5" r="1" fill="#111"/></g><g transform="translate(519.8 62.0)"><path d="M-4.5 -5.5L5.5 -3.5L4 4.5L-5.5 3Z" fill="#d0d0d0" stroke="#333" stroke-width="0.9"/><path d="M4 4.5L5.8 2.2" stroke="#111" stroke-width="1.4"/><circle cx="4.2" cy="5.2" r="0.7" fill="#e82020"/></g><g transform="translate(536.0 62.0)"><path d="M-5.5 -2.5L3.5 -5.5L5.5 3L-3 5.5Z" fill="#d4d4d4" stroke="#333" stroke-width="0.8"/><path d="M-3 1.5L0.5 -3L3.5 1Z" fill="none" stroke="#e82020" stroke-width="0.9"/></g><g transform="translate(552.1 62.0)"><rect x="-4.5" y="-4.5" width="9" height="9" fill="#c4c4c4" stroke="#222" stroke-width="0.9"/><circle cx="-4.5" cy="-4.5" r="1" fill="#111"/><circle cx="-4.5" cy="4.5" r="1" fill="#111"/><circle cx="4.5" cy="-4.5" r="1" fill="#111"/><circle cx="4.5" cy="4.5" r="1" fill="#111"/></g><g transform="translate(577.2 51.8)"><path d="M-2 -6.5Q-5 -4 -3.5 0M3.5 -6.5Q6 -3 3.5 -0.5" stroke="#444" stroke-width="0.9" fill="none"/><circle cx="-2" cy="-6.8" r="0.9" fill="#333"/><circle cx="3.5" cy="-6.8" r="0.9" fill="#333"/><circle cx="-2.5" cy="1.5" r="4" fill="none" stroke="#4a90d0" stroke-width="0.9"/><circle cx="2.5" cy="0.5" r="3.2" fill="none" stroke="#4a90d0" stroke-width="0.9"/><circle cx="-4.5" cy="7" r="1.4" fill="#333"/></g><path d="M587.3 50.4H591.5L589.4 52.8Z" fill="#111"/><g transform="translate(603.1 51.5)"><path d="M-8 7V-4.5L7.5 7Z" fill="#f4b070" stroke="#c87028" stroke-width="0.8"/><path d="M-5.5 4.5V1L-1 4.5Z" fill="#fff"/><path d="M-2.5 5.5L2.5 -4M5.5 5.5L1 -4" stroke="#f6f6f6" stroke-width="1.5"/><path d="M-2.5 5.5L2.5 -4M5.5 5.5L1 -4" stroke="#999" stroke-width="0.4"/><circle cx="-1" cy="-5.3" r="2.1" fill="#fff" stroke="#1a80e0" stroke-width="1.3"/><circle cx="5.2" cy="-5.3" r="2.1" fill="#fff" stroke="#1a80e0" stroke-width="1.3"/></g><g transform="translate(622.0 42.0)"><rect x="-5.5" y="-5.5" width="11" height="11" fill="#f4f4f4" stroke="#8a8a8a" stroke-width="0.7"/><path d="M-1.8 -5.5V5.5M1.8 -5.5V5.5M-5.5 -2.75H5.5M-5.5 0H5.5M-5.5 2.75H5.5" stroke="#8a8a8a" stroke-width="0.7"/><rect x="-1.6" y="-2.6" width="3.2" height="2.4" fill="#e8402a"/><rect x="2" y="-5.3" width="3.3" height="2.4" fill="#2a8ae0"/></g><g transform="translate(638.2 42.0)"><rect x="-5.5" y="-5.5" width="11" height="11" fill="#f4f4f4" stroke="#8a8a8a" stroke-width="0.7"/><path d="M-1.8 -5.5V5.5M1.8 -5.5V5.5M-5.5 -2.75H5.5M-5.5 0H5.5M-5.5 2.75H5.5" stroke="#8a8a8a" stroke-width="0.7"/><rect x="-1.6" y="-2.6" width="3.2" height="2.4" fill="#e8402a"/><rect x="2" y="-5.3" width="3.3" height="2.4" fill="#2a8ae0"/><text x="3.6" y="6.6" font-size="8" font-weight="bold" fill="#f0503a" text-anchor="middle">V</text></g><g transform="translate(654.2 42.0)"><rect x="-5.5" y="-5.5" width="11" height="11" fill="#f4f4f4" stroke="#8a8a8a" stroke-width="0.7"/><path d="M-1.8 -5.5V5.5M1.8 -5.5V5.5M-5.5 -2.75H5.5M-5.5 0H5.5M-5.5 2.75H5.5" stroke="#8a8a8a" stroke-width="0.7"/><rect x="-1.6" y="-2.6" width="3.2" height="2.4" fill="#e8402a"/><rect x="2" y="-5.3" width="3.3" height="2.4" fill="#2a8ae0"/><text x="3.6" y="6.6" font-size="8" font-weight="bold" fill="#f0503a" text-anchor="middle">D</text></g><g transform="translate(622.2 62.0)"><circle r="5.6" fill="#f6f6f6" stroke="#c4c4c4" stroke-width="0.8"/><circle cx="-2" cy="-1.5" r="0.7" fill="#aaa"/><circle cx="2" cy="-1.5" r="0.7" fill="#aaa"/><path d="M-2.5 3Q0 1 2.5 3" stroke="#aaa" stroke-width="0.7" fill="none"/></g><g transform="translate(638.5 62.0)"><rect x="-5.5" y="-0.5" width="3" height="6" fill="#c8c8d0" stroke="#777" stroke-width="0.4"/><rect x="-2.3" y="-5.3" width="3.6" height="10.8" fill="#e84a30"/><rect x="1.5" y="-3" width="3.6" height="8.5" fill="#2a8ae0"/></g><g transform="translate(654.5 62.0)"><path d="M-5.5 2L-1 -4.5L4 -5L5 -1L0 5.5L-5 5Z" fill="#c8c8d8" stroke="#666" stroke-width="0.6"/><path d="M-3.5 1L3 -1.5M-4 3.5L2.5 1" stroke="#f4f4f8" stroke-width="1"/><path d="M-1 -4.5L1 -6.5L4.5 -6L4 -5" fill="#555"/></g><path d="M661.9 60.9H666.1L664.0 63.3Z" fill="#111"/><rect x="10.5" y="82.3" width="166.7" height="386" fill="#fff"/><rect x="10.5" y="82.3" width="166.7" height="11.8" fill="url(#ghdr)"/><path d="M10.5 94.1H177.2" stroke="#a4a9b2" stroke-width="0.8"/><path d="M177.4 82.3V468" stroke="#c9ccd2" stroke-width="0.6"/><rect x="177.6" y="82" width="3" height="387" fill="#e4e7ec"/><text x="12.3" y="91.2" font-size="7" text-anchor="start" fill="#111" font-weight="bold" textLength="35.5" lengthAdjust="spacingAndGlyphs" >Group List</text><rect x="162.2" y="86" width="3.4" height="3.2" fill="none" stroke="#222" stroke-width="0.9"/><rect x="161" y="87.6" width="3.4" height="3.2" fill="#ddd" stroke="#222" stroke-width="0.9"/><path d="M170.6 86.3L174.6 90.3M174.6 86.3L170.6 90.3" stroke="#111" stroke-width="1.2"/><rect x="24" y="97.3" width="6.6" height="6.6" fill="#f4f4f4" stroke="#8e8f8f" stroke-width="0.7"/><path d="M25.3 100.7L26.8 102.6L29.6 98.3" stroke="#1c2a8a" stroke-width="1.1" fill="none"/><text x="34.8" y="103" font-size="7.4" font-family="'Liberation Mono',monospace" fill="#111">view</text><rect x="24" y="107.2" width="6.6" height="6.6" fill="#f4f4f4" stroke="#8e8f8f" stroke-width="0.7"/><path d="M25.3 110.7L26.8 112.6L29.6 108.2" stroke="#1c2a8a" stroke-width="1.1" fill="none"/><text x="34.8" y="113" font-size="7.4" font-family="'Liberation Mono',monospace" fill="#111">local coordinates</text><rect x="24" y="117.2" width="6.6" height="6.6" fill="#f4f4f4" stroke="#8e8f8f" stroke-width="0.7"/><path d="M16.3 118.3L19 120.6L16.3 122.9Z" fill="#fff" stroke="#9a9a9a" stroke-width="0.6"/><text x="34.8" y="122.9" font-size="7.4" font-family="'Liberation Mono',monospace" fill="#111">geometry</text><rect x="24" y="127.2" width="6.6" height="6.6" fill="#f4f4f4" stroke="#8e8f8f" stroke-width="0.7"/><path d="M25.3 130.6L26.8 132.5L29.6 128.2" stroke="#1c2a8a" stroke-width="1.1" fill="none"/><path d="M16.3 128.2L19 130.6L16.3 132.9Z" fill="#fff" stroke="#9a9a9a" stroke-width="0.6"/><text x="34.8" y="132.9" font-size="7.4" font-family="'Liberation Mono',monospace" fill="#111">mesh</text><rect x="180.3" y="82" width="490.2" height="370.5" fill="#fff" stroke="#a9adb5" stroke-width="0.7"/><g clip-path="url(#cvp)"><rect x="181" y="82.5" width="489" height="369.5" fill="url(#gbg)"/><circle cx="418" cy="640" r="252" fill="#2ab622"/><path d="M168.4 640A249.6 249.6 0 0 1 667.6 640M171 640A247 247 0 0 1 665 640M173.6 640A244.4 244.4 0 0 1 662.4 640M176.2 640A241.8 241.8 0 0 1 659.8 640M179 640A239 239 0 0 1 657 640M181.8 640A236.2 236.2 0 0 1 654.2 640M184.8 640A233.2 233.2 0 0 1 651.2 640M187.8 640A230.2 230.2 0 0 1 648.2 640M190.8 640A227.2 227.2 0 0 1 645.2 640M194 640A224 224 0 0 1 642 640M197.2 640A220.8 220.8 0 0 1 638.8 640M200.6 640A217.4 217.4 0 0 1 635.4 640M204 640A214 214 0 0 1 632 640M207.4 640A210.6 210.6 0 0 1 628.6 640M211 640A207 207 0 0 1 625 640M639.7 520.1L593.9 544.9M636.7 514.8L591.6 540.6M633.6 509.5L589.1 536.4M630.3 504.2L586.5 532.2M626.9 499.1L583.8 528.2M623.4 494L581 524.1M619.8 489L578.1 520.2M616 484.2L575.2 516.3M612.2 479.4L572.1 512.5M608.2 474.7L568.9 508.8M604.1 470.1L565.7 505.1M599.9 465.6L562.4 501.6M595.6 461.2L558.9 498.1M591.1 456.9L555.4 494.7M586.6 452.7L551.8 491.4M582 448.7L548.2 488.1M577.3 444.7L544.4 485M572.5 440.9L540.6 482M567.5 437.2L536.7 479M562.5 433.6L532.7 476.2M557.5 430.1L528.7 473.4M552.3 426.8L524.6 470.8M547 423.5L520.4 468.2M541.7 420.5L516.2 465.8M536.3 417.5L511.9 463.4M530.8 414.7L507.6 461.2M525.3 412L503.2 459M519.7 409.4L498.7 457M514 407L494.2 455.1M508.3 404.7L489.7 453.3M502.5 402.6L485.1 451.6M496.7 400.6L480.5 450M490.8 398.8L475.8 448.5M484.9 397L471.1 447.2M479 395.5L466.4 445.9M473 394.1L461.6 444.8M466.9 392.8L456.8 443.8M460.9 391.7L452 442.9M454.8 390.7L447.2 442.1M448.7 389.9L442.4 441.5M442.6 389.2L437.5 441M436.5 388.7L432.6 440.5M430.3 388.3L427.8 440.2M424.2 388.1L422.9 440.1M418 388L418 440M411.8 388.1L413.1 440.1M405.7 388.3L408.2 440.2M399.5 388.7L403.4 440.5M393.4 389.2L398.5 441M387.3 389.9L393.6 441.5M381.2 390.7L388.8 442.1M375.1 391.7L384 442.9M369.1 392.8L379.2 443.8M363 394.1L374.4 444.8M357 395.5L369.6 445.9M351.1 397L364.9 447.2M345.2 398.8L360.2 448.5M339.3 400.6L355.5 450M333.5 402.6L350.9 451.6M327.7 404.7L346.3 453.3M322 407L341.8 455.1M316.3 409.4L337.3 457M310.7 412L332.8 459M305.2 414.7L328.4 461.2M299.7 417.5L324.1 463.4M294.3 420.5L319.8 465.8M289 423.5L315.6 468.2M283.7 426.8L311.4 470.8M278.5 430.1L307.3 473.4M273.5 433.6L303.3 476.2M268.5 437.2L299.3 479M263.5 440.9L295.4 482M258.7 444.7L291.6 485M254 448.7L287.8 488.1M249.4 452.7L284.2 491.4M244.9 456.9L280.6 494.7M240.4 461.2L277.1 498.1M236.1 465.6L273.6 501.6M231.9 470.1L270.3 505.1M227.8 474.7L267.1 508.8M223.8 479.4L263.9 512.5M220 484.2L260.8 516.3M216.2 489L257.9 520.2M212.6 494L255 524.1M209.1 499.1L252.2 528.2M205.7 504.2L249.5 532.2M202.4 509.5L246.9 536.4M199.3 514.8L244.4 540.6M196.3 520.1L242.1 544.9" fill="none" stroke="#04280a" stroke-width="0.8" opacity="0.85"/><circle cx="418" cy="640" r="252" fill="none" stroke="#062a06" stroke-width="1.2"/><circle cx="418.0" cy="266.5" r="210.0" fill="url(#gsph)"/><circle cx="418.0" cy="266.5" r="210.0" fill="url(#gsph2)"/><g clip-path="url(#csph)"><use href="#mesh"/></g><circle cx="418.0" cy="266.5" r="209.6" fill="none" stroke="#0a2a0a" stroke-width="1.4" opacity="0.8"/><path d="M312 70L312 98.4A106 39.7 0 0 0 524 98.4L524 70Z" fill="url(#gcyl)"/><path d="M312 70L312 98.4M312.3 70L312.4 101.9M312.4 70L312.4 101.9M313.3 70L313.6 105.3M313.6 70L313.6 105.3M315.1 70L315.6 108.7M315.6 70L315.6 108.7M317.6 70L318.4 112M318.4 70L318.4 112M320.9 70L321.9 115.2M321.9 70L321.9 115.2M325 70L326.2 118.3M326.2 70L326.2 118.3M329.8 70L331.2 121.2M331.2 70L331.2 121.2M335.2 70L336.8 123.9M336.8 70L336.8 123.9M341.3 70L343 126.5M343 70L343 126.5M348 70L349.9 128.8M349.9 70L349.9 128.8M355.1 70L357.2 130.9M357.2 70L357.2 130.9M362.8 70L365 132.8M365 70L365 132.8M370.9 70L373.2 134.4M373.2 70L373.2 134.4M379.4 70L381.7 135.7M381.7 70L381.7 135.7M388.1 70L390.6 136.8M390.6 70L390.6 136.8M397.1 70L399.6 137.5M399.6 70L399.6 137.5M406.2 70L408.8 138M408.8 70L408.8 138M415.4 70L418 138.1M418 70L418 138.1M424.7 70L427.2 138M427.2 70L427.2 138M433.8 70L436.4 137.5M436.4 70L436.4 137.5M442.9 70L445.4 136.8M445.4 70L445.4 136.8M451.8 70L454.3 135.7M454.3 70L454.3 135.7M460.4 70L462.8 134.4M462.8 70L462.8 134.4M468.7 70L471 132.8M471 70L471 132.8M476.6 70L478.8 130.9M478.8 70L478.8 130.9M484.1 70L486.1 128.8M486.1 70L486.1 128.8M491 70L493 126.5M493 70L493 126.5M497.5 70L499.2 123.9M499.2 70L499.2 123.9M503.3 70L504.8 121.2M504.8 70L504.8 121.2M508.4 70L509.8 118.3M509.8 70L509.8 118.3M512.9 70L514.1 115.2M514.1 70L514.1 115.2M516.6 70L517.6 112M517.6 70L517.6 112M519.6 70L520.4 108.7M520.4 70L520.4 108.7M521.8 70L522.4 105.3M522.4 70L522.4 105.3M523.3 70L523.6 101.9M523.6 70L523.6 101.9M523.9 70L524 98.4M524 70L524 98.4" stroke="#14061f" stroke-width="1.05" fill="none" opacity="0.9"/><path d="M312 98.4A106 39.7 0 0 0 524 98.4" fill="none" stroke="#1c0a2c" stroke-width="0.9"/><path d="M354.7 232.4L354 246.1L348.5 244.5ZM334.9 230.4L340.3 244.1L334.6 245.2ZM316.6 242.9L325.6 249.6L321.1 253.5ZM373.9 251.1L369.3 259L365.6 254.2ZM384.3 295.1L372 293.9L373.9 288ZM370.5 314.1L361.3 307.7L365.7 303.7ZM336.2 320.6L334.6 312.8L340.3 313.9ZM311.1 307.7L316.7 299L320.4 303.8ZM306.2 264.6L314 264.1L312.1 270Z" fill="#06300a" fill-opacity="0.6" stroke="#03200a" stroke-width="0.4"/><ellipse cx="343" cy="278.5" rx="33.5" ry="37.0" fill="#0a2a0a"/><ellipse cx="343" cy="278.5" rx="32" ry="35.5" fill="#c8965f"/><path d="M311 278.5L312.9 284.5M311.1 275.7L313 282.2M311.4 272.9L313.3 280M311.9 270.2L313.8 277.7M312.6 267.5L314.4 275.5M313.4 264.9L315.2 273.4M314.5 262.4L316.2 271.3M315.7 260L317.4 269.3M317.1 257.6L318.7 267.5M318.7 255.4L320.1 265.7M320.4 253.4L321.7 264M322.2 251.5L323.5 262.4M324.2 249.8L325.3 261M326.3 248.2L327.3 259.8M328.5 246.9L329.3 258.7M330.8 245.7L331.5 257.7M333.1 244.7L333.7 256.9M335.5 244L336 256.3M338 243.4L338.3 255.9M340.5 243.1L340.6 255.6M343 243L343 255.5M345.5 243.1L345.4 255.6M348 243.4L347.7 255.9M350.5 244L350 256.3M352.9 244.7L352.3 256.9M355.2 245.7L354.5 257.7M357.5 246.9L356.7 258.7M359.7 248.2L358.7 259.8M361.8 249.8L360.7 261M363.8 251.5L362.5 262.4M365.6 253.4L364.3 264M367.3 255.4L365.9 265.7M368.9 257.6L367.3 267.5M370.3 260L368.6 269.3M371.5 262.4L369.8 271.3M372.6 264.9L370.8 273.4M373.4 267.5L371.6 275.5M374.1 270.2L372.2 277.7M374.6 272.9L372.7 280M374.9 275.7L373 282.2M375 278.5L373.1 284.5" stroke="#3a2410" stroke-width="0.65" fill="none" opacity="0.8"/><ellipse cx="342.5" cy="284.5" rx="31" ry="29.5" fill="url(#geye)"/><path d="M311.5 284.5A31 29.5 0 0 1 373.5 284.5" fill="none" stroke="#24140a" stroke-width="1.3" opacity="0.8"/><path d="M311.6 282.7L333.5 312.5M311.8 280.7L344 314M312.1 278.7L352.5 312.2M312.6 276.8L339.5 314M313.2 274.8L348.5 313.4M314 273L333.5 312.5M314.9 271.2L344 314M316 269.4L352.5 312.2M317.1 267.7L339.5 314M318.4 266.1L348.5 313.4M319.8 264.6L333.5 312.5M321.3 263.2L344 314M322.9 261.9L352.5 312.2M324.6 260.7L339.5 314M326.3 259.6L348.5 313.4M328.2 258.6L333.5 312.5M330.1 257.7L344 314M332.1 257L352.5 312.2M334.1 256.4L339.5 314M336.2 255.9L348.5 313.4M338.3 255.6L333.5 312.5M340.4 255.4L344 314M342.5 255.3L352.5 312.2M344.6 255.4L339.5 314M346.7 255.6L348.5 313.4M348.8 255.9L333.5 312.5M350.9 256.4L344 314M352.9 257L352.5 312.2M354.9 257.7L339.5 314M356.8 258.6L348.5 313.4M358.7 259.6L333.5 312.5M360.4 260.7L344 314M362.1 261.9L352.5 312.2M363.7 263.2L339.5 314M365.2 264.6L348.5 313.4M366.6 266.1L333.5 312.5M367.9 267.7L344 314M369 269.4L352.5 312.2M370.1 271.2L339.5 314M371 273L348.5 313.4M371.8 274.8L333.5 312.5M372.4 276.8L344 314M372.9 278.7L352.5 312.2M373.2 280.7L339.5 314M373.4 282.7L348.5 313.4" stroke="#2a1608" stroke-width="0.6" fill="none" opacity="0.75"/><path d="M359.5 267.5L371.5 278.5L362.5 280.5Z" fill="#140a04" opacity="0.75"/><path d="M346.5 311.5L352.5 292.5L355.5 310.5Z" fill="#140a04" opacity="0.6"/><path d="M334.5 260.5L339.5 289.5L341.5 258.5Z" fill="#140a04" opacity="0.5"/><path d="M526 231.7L524.1 245.3L518.7 243.2ZM506.5 227.8L510.6 242L504.9 242.5ZM488.5 236.3L497.1 245.2L492.1 248.4ZM539.9 245.5L535.1 254.6L531 250.1ZM549.5 288.2L540.5 289.1L542 283ZM531.3 315.6L523.9 308.8L528.9 305.6ZM492.9 317.4L494.4 307.3L499.6 309.9ZM473.4 299.9L481.5 291.7L484.3 297.2ZM467.9 273L479 270.8L478.5 277.1Z" fill="#06300a" fill-opacity="0.6" stroke="#03200a" stroke-width="0.4"/><ellipse cx="510.5" cy="276.8" rx="33.5" ry="37.0" fill="#0a2a0a"/><ellipse cx="510.5" cy="276.8" rx="32" ry="35.5" fill="#c8965f"/><path d="M478.5 276.8L480.4 282.8M478.6 274L480.5 280.5M478.9 271.2L480.8 278.3M479.4 268.5L481.3 276M480.1 265.8L481.9 273.8M480.9 263.2L482.7 271.7M482 260.7L483.7 269.6M483.2 258.3L484.9 267.6M484.6 255.9L486.2 265.8M486.2 253.7L487.6 264M487.9 251.7L489.2 262.3M489.7 249.8L491 260.7M491.7 248.1L492.8 259.3M493.8 246.5L494.8 258.1M496 245.2L496.8 257M498.3 244L499 256M500.6 243L501.2 255.2M503 242.3L503.5 254.6M505.5 241.7L505.8 254.2M508 241.4L508.1 253.9M510.5 241.3L510.5 253.8M513 241.4L512.9 253.9M515.5 241.7L515.2 254.2M518 242.3L517.5 254.6M520.4 243L519.8 255.2M522.7 244L522 256M525 245.2L524.2 257M527.2 246.5L526.2 258.1M529.3 248.1L528.2 259.3M531.3 249.8L530 260.7M533.1 251.7L531.8 262.3M534.8 253.7L533.4 264M536.4 255.9L534.8 265.8M537.8 258.3L536.1 267.6M539 260.7L537.3 269.6M540.1 263.2L538.3 271.7M540.9 265.8L539.1 273.8M541.6 268.5L539.7 276M542.1 271.2L540.2 278.3M542.4 274L540.5 280.5M542.5 276.8L540.6 282.8" stroke="#3a2410" stroke-width="0.65" fill="none" opacity="0.8"/><ellipse cx="510" cy="282.8" rx="31" ry="29.5" fill="url(#geyep)"/><path d="M479 282.8A31 29.5 0 0 1 541 282.8" fill="none" stroke="#24140a" stroke-width="1.3" opacity="0.8"/><path d="M479.1 281L501 310.8M479.3 279L511.5 312.3M479.6 277L520 310.5M480.1 275.1L507 312.3M480.7 273.1L516 311.7M481.5 271.3L501 310.8M482.4 269.5L511.5 312.3M483.5 267.7L520 310.5M484.6 266L507 312.3M485.9 264.4L516 311.7M487.3 262.9L501 310.8M488.8 261.5L511.5 312.3M490.4 260.2L520 310.5M492.1 259L507 312.3M493.8 257.9L516 311.7M495.7 256.9L501 310.8M497.6 256L511.5 312.3M499.6 255.3L520 310.5M501.6 254.7L507 312.3M503.7 254.2L516 311.7M505.8 253.9L501 310.8M507.9 253.7L511.5 312.3M510 253.6L520 310.5M512.1 253.7L507 312.3M514.2 253.9L516 311.7M516.3 254.2L501 310.8M518.4 254.7L511.5 312.3M520.4 255.3L520 310.5M522.4 256L507 312.3M524.3 256.9L516 311.7M526.2 257.9L501 310.8M527.9 259L511.5 312.3M529.6 260.2L520 310.5M531.2 261.5L507 312.3M532.7 262.9L516 311.7M534.1 264.4L501 310.8M535.4 266L511.5 312.3M536.5 267.7L520 310.5M537.6 269.5L507 312.3M538.5 271.3L516 311.7M539.3 273.1L501 310.8M539.9 275.1L511.5 312.3M540.4 277L520 310.5M540.7 279L507 312.3M540.9 281L516 311.7" stroke="#3a0a44" stroke-width="0.6" fill="none" opacity="0.75"/><path d="M527 265.8L539 276.8L530 278.8Z" fill="#140a04" opacity="0.75"/><path d="M514 309.8L520 290.8L523 308.8Z" fill="#140a04" opacity="0.6"/><path d="M502 258.8L507 287.8L509 256.8Z" fill="#140a04" opacity="0.5"/><path d="M442.4 313.6L439.3 323.4L435.6 321.2ZM428.4 310.3L429.7 319.4L425.4 319ZM413.9 311.1L419.4 319.8L415.3 321.3ZM401.2 322.6L408.6 326L405.8 329.3ZM453.9 326.6L447.3 332.9L445.1 329.2ZM458.3 343L449.4 345.2L449.4 340.8ZM391.6 343L401.6 340.8L401.6 345.2ZM454.2 356.4L446.3 355.1L448.1 351.1ZM396.8 356.4L402.9 351.1L404.7 355.1Z" fill="#06300a" fill-opacity="0.6" stroke="#03200a" stroke-width="0.4"/><path d="M425.5 317.5C441 317.5 451 329 450.8 342C450.6 350 449 358 447 366L432.5 452L405.5 366C402 358 400.5 350 400.2 342C400 329 410 317.5 425.5 317.5Z" fill="url(#gnose)" stroke="#1a0802" stroke-width="0.8"/><path d="M400.5 342L432.5 452M400.7 339.3L432.5 452M401.1 336.5L432.5 452M401.9 333.9L432.5 452M403 331.4L432.5 452M404.3 329L432.5 452M406 326.7L432.5 452M407.8 324.7L432.5 452M409.9 322.8L432.5 452M412.2 321.3L432.5 452M414.7 319.9L432.5 452M417.2 318.9L432.5 452M419.9 318.1L432.5 452M422.7 317.7L432.5 452M425.5 317.5L432.5 452M428.3 317.7L432.5 452M431.1 318.1L432.5 452M433.8 318.9L432.5 452M436.3 319.9L432.5 452M438.8 321.3L432.5 452M441.1 322.8L432.5 452M443.2 324.7L432.5 452M445 326.7L432.5 452M446.7 329L432.5 452M448 331.4L432.5 452M449.1 333.9L432.5 452M449.9 336.5L432.5 452M450.3 339.3L432.5 452M450.5 342L432.5 452" stroke="#200800" stroke-width="0.5" opacity="0.45" fill="none"/><path d="M425.5 317.5C441 317.5 451 329 450.8 342C450.6 350 449 358 447 366L432.5 452L405.5 366C402 358 400.5 350 400.2 342C400 329 410 317.5 425.5 317.5Z" fill="url(#gnose2)"/><path d="M432.5 452L425 405L431 372L438 408Z" fill="#000" opacity="0.75"/><path d="M432.5 452L420 395M432.5 452L428 370M432.5 452L436 372M432.5 452L441 395M432.5 452L412 372M432.5 452L446 368" stroke="#1a0802" stroke-width="0.7" opacity="0.6"/><path d="M293.5 415.3H556.1M293.5 415.3V418.6M346 415.3V418.6M398.5 415.3V418.6M451.1 415.3V418.6M503.6 415.3V418.6M556.1 415.3V418.6" stroke="#eee" stroke-width="0.85" fill="none"/><text x="291.3" y="428.3" font-size="10.4" font-weight="bold" text-anchor="middle" fill="#fff" stroke="#222" stroke-width="1.6" stroke-opacity="0.55" paint-order="stroke" textLength="24.8" lengthAdjust="spacingAndGlyphs">0.000</text><text x="345.4" y="428.3" font-size="10.4" font-weight="bold" text-anchor="middle" fill="#fff" stroke="#222" stroke-width="1.6" stroke-opacity="0.55" paint-order="stroke" textLength="30.3" lengthAdjust="spacingAndGlyphs">0.0100</text><text x="397.9" y="428.3" font-size="10.4" font-weight="bold" text-anchor="middle" fill="#fff" stroke="#222" stroke-width="1.6" stroke-opacity="0.55" paint-order="stroke" textLength="30.3" lengthAdjust="spacingAndGlyphs">0.0200</text><text x="450.5" y="428.3" font-size="10.4" font-weight="bold" text-anchor="middle" fill="#fff" stroke="#222" stroke-width="1.6" stroke-opacity="0.55" paint-order="stroke" textLength="30.3" lengthAdjust="spacingAndGlyphs">0.0300</text><text x="503" y="428.3" font-size="10.4" font-weight="bold" text-anchor="middle" fill="#fff" stroke="#222" stroke-width="1.6" stroke-opacity="0.55" paint-order="stroke" textLength="30.3" lengthAdjust="spacingAndGlyphs">0.0400</text><text x="555.5" y="428.3" font-size="10.4" font-weight="bold" text-anchor="middle" fill="#fff" stroke="#222" stroke-width="1.6" stroke-opacity="0.55" paint-order="stroke" textLength="30.3" lengthAdjust="spacingAndGlyphs">0.0500</text><path d="M227.2 407V388" stroke="#1018e8" stroke-width="3.4"/><path d="M227.2 381.5L223.4 389.2H231Z" fill="#1018e8"/><path d="M235 405.4H245" stroke="#18dc18" stroke-width="3.2"/><path d="M252.4 405.4L244 402.2V408.6Z" fill="#18dc18"/><rect x="228" y="399.5" width="6.8" height="8.6" fill="#e8e8e8"/><rect x="228" y="398.3" width="6.8" height="2" fill="#777"/><path d="M226 408L227.4 412" stroke="#8a0c0c" stroke-width="2"/><circle cx="227.4" cy="413" r="3.4" fill="#a80c0c"/><text x="226.6" y="378" font-size="7.6" text-anchor="middle" fill="#1018e8" font-weight="bold" >Z</text><text x="256.8" y="407.5" font-size="7.6" text-anchor="middle" fill="#18c818" font-weight="bold" >Y</text><text x="228.5" y="422.3" font-size="6.6" text-anchor="middle" fill="#f01818" font-weight="bold" >X</text></g><rect x="180" y="452.5" width="490.5" height="16" fill="#e9ebee"/><path d="M181 452.5V468H265.6V452.5" fill="#fff" stroke="#b4b8bf" stroke-width="0.7"/><g transform="translate(191.0 460.3) scale(0.42)"><path d="M-7 0L-3 -6H4L8 0L4 6H-3Z" fill="#5aa0f0" stroke="#000" stroke-width="1.6"/><path d="M-7 0H2" stroke="#000" stroke-width="1.8"/><path d="M3 -1L6 6L9 1L11 6L14 -2" stroke="#000" stroke-width="1.6" fill="none"/></g><text x="199" y="462.4" font-size="6.7" text-anchor="start" fill="#111" font-weight="normal" textLength="48.5" lengthAdjust="spacingAndGlyphs" >newSnowman.ecf</text><rect x="250.5" y="456.8" width="7" height="7" rx="1" fill="#e0552e"/><path d="M252.3 458.6L255.7 462M255.7 458.6L252.3 462" stroke="#fff" stroke-width="1.1"/><rect x="10.5" y="468.5" width="660" height="17" fill="url(#gstat)"/><path d="M10.5 468.5H670.5" stroke="#b9bdc4" stroke-width="0.7"/><text x="14" y="480" font-size="6.8" text-anchor="start" fill="#111" font-weight="bold" textLength="74" lengthAdjust="spacingAndGlyphs" >Multi growing finished</text><circle cx="586.8" cy="477" r="3.7" fill="#9a9a9a" stroke="#777" stroke-width="0.5"/><path d="M585.1 475.3L588.5 478.7M588.5 475.3L585.1 478.7" stroke="#fff" stroke-width="1.1"/><circle cx="606.6" cy="477" r="3.9" fill="#2a5fd8" stroke="#1a3a9a" stroke-width="0.5"/><text x="606.6" y="479.4" font-size="6.5" text-anchor="middle" fill="#fff" font-weight="bold" >i</text><text x="624.6" y="479.2" font-size="6.6" text-anchor="middle" fill="#111" font-weight="normal" textLength="9.5" lengthAdjust="spacingAndGlyphs" >mm</text><text x="647.6" y="479.2" font-size="6.6" text-anchor="middle" fill="#111" font-weight="normal" textLength="20.5" lengthAdjust="spacingAndGlyphs" >pc1303</text><path d="M596.5 471V484" stroke="#f4f5f7" stroke-width="0.8"/><path d="M616 471V484" stroke="#f4f5f7" stroke-width="0.8"/><path d="M633 471V484" stroke="#f4f5f7" stroke-width="0.8"/><path d="M661 471V484" stroke="#f4f5f7" stroke-width="0.8"/><rect x="663" y="479" width="6" height="4.5" fill="#c4c7cc"/><rect x="491.8" y="83" width="138.4" height="60.3" fill="url(#gtip)" stroke="#8a8d93" stroke-width="0.8"/><rect x="492.2" y="126.5" width="137.6" height="16.4" fill="#e9eaed"/><path d="M491.8 126.5H630.2" stroke="#9a9da3" stroke-width="0.8"/><text x="494.3" y="93.8" font-size="6.9" text-anchor="start" fill="#111" font-weight="bold" textLength="75.5" lengthAdjust="spacingAndGlyphs" >Remesh selected cells</text><g transform="translate(500.5 108.5) scale(0.80)"><path d="M-5 -3.2L2.5 -5.5L6 -3.2L-1.5 -0.8Z" fill="#e8e8e8" stroke="#222" stroke-width="1"/><path d="M-6 1.5L2 -0.8L6 1.8L-2.5 5Z" fill="#cfcfcf" stroke="#222" stroke-width="1"/><path d="M-2 -4L2 -1.8M-3 0.6L1.5 3.4M-0.5 0L4 2.6" stroke="#222" stroke-width="0.7"/><circle cx="-5.6" cy="1.2" r="1" fill="#e00"/></g><circle cx="498.7" cy="134.2" r="3.6" fill="#2a5fd8" stroke="#1a3a9a" stroke-width="0.5"/><text x="498.7" y="136.4" font-size="5.8" text-anchor="middle" fill="#fff" font-weight="bold" >?</text><text x="508" y="136.3" font-size="6.5" text-anchor="start" fill="#222" font-weight="normal" textLength="66.5" lengthAdjust="spacingAndGlyphs" >Press F1 for more help.</text><rect x="7" y="-4" width="2.2" height="490" fill="#55585e"/><rect x="9.2" y="-4" width="1.4" height="490" fill="#9a9da4"/><rect x="670.5" y="-4" width="4" height="490" fill="#c4c8d0"/><rect x="672.5" y="-4" width="1" height="490" fill="#8f98a8"/><rect x="674.5" y="-4" width="3.8" height="491.5" fill="url(#gband)"/><rect x="674.5" y="-4" width="3.8" height="14" fill="#000"/><rect x="9" y="485.5" width="669" height="1.8" fill="#b8bcc0"/><rect x="12" y="486.6" width="160" height="1.2" fill="#d4f0d8" opacity="0.8"/><rect x="330" y="486.6" width="120" height="1.2" fill="#f0d4dc" opacity="0.8"/><rect x="7" y="485.5" width="3" height="2" fill="#333"/></g><ellipse cx="505.5" cy="272" rx="77.8" ry="73" fill="none" stroke="#ff1414" stroke-width="5.4" pathLength="476" stroke-dasharray="18 16" stroke-dashoffset="26"/><ellipse cx="971.6" cy="365.7" rx="78.2" ry="73.9" fill="none" stroke="#ff1414" stroke-width="5.4" pathLength="476" stroke-dasharray="18 16" stroke-dashoffset="26"/><path d="M621.4 331.4H711.4V316.4L741.5 346.4L711.4 376.5V361.4H621.4Z" fill="#4f81bd" stroke="#365a8c" stroke-width="2.4" stroke-linejoin="miter"/></svg></body></html>
